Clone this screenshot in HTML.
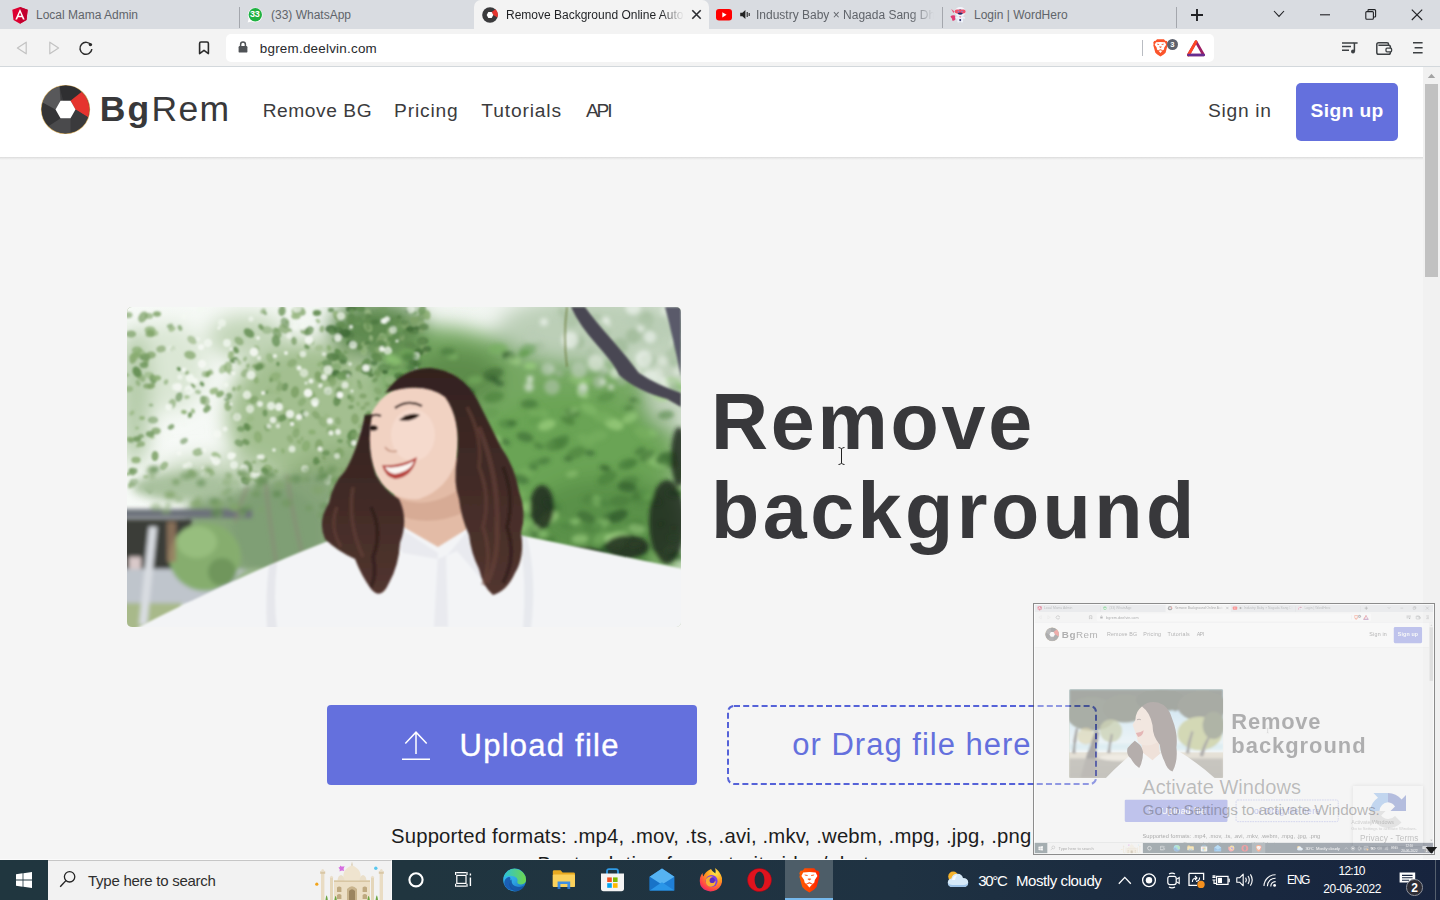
<!DOCTYPE html>
<html lang="en">
<head>
<meta charset="utf-8">
<title>Remove Background Online</title>
<style>
*{box-sizing:border-box;margin:0;padding:0}
html,body{width:1440px;height:900px;overflow:hidden;background:#f5f5f5;font-family:"Liberation Sans",sans-serif;}
.abs{position:absolute}
.t{position:absolute;white-space:nowrap;line-height:1}
svg{position:absolute;overflow:visible}
#root,.root{position:relative;width:1440px;height:900px;overflow:hidden;background:#f5f5f5}
/* ---------- browser chrome ---------- */
.tabbar{left:0;top:0;width:1440px;height:29px;background:#d9dce1}
.toolbar{left:0;top:29px;width:1440px;height:37px;background:#f3f3f3}
.toolline{left:0;top:66px;width:1440px;height:1px;background:#d3d8dc}
.tab{font-size:12px;color:#60646a;top:6.8px;overflow:hidden;height:16px;line-height:16px}
.tab-active{left:474px;top:0;width:235px;height:30px;background:#f3f3f3;border-radius:7px 7px 0 0}
.tsep{top:7px;width:1px;height:21px;background:#a4a7ad}
.urlbar{left:226px;top:34px;width:988px;height:28px;background:#fff;border-radius:5px}
.url{left:259.8px;top:41.6px;font-size:13.4px;color:#27292c;letter-spacing:.24px}
/* ---------- page ---------- */
.header{left:0;top:67px;width:1423px;height:90px;background:#fff}
.hshadow{left:0;top:157px;width:1423px;height:3px;background:linear-gradient(#dadada,#e9e9e9 45%,#f5f5f5)}
.nav{top:101.1px;font-size:19.2px;color:#3b3b3d}
.signup{left:1296px;top:83px;width:102px;height:58px;background:#6470dd;border-radius:5px}
.scroll{left:1423px;top:67px;width:17px;height:793px;background:#f1f1f1}
.sthumb{left:1425px;top:84px;width:13px;height:193px;background:#c1c1c1}
.hero{left:127px;top:307px;width:554px;height:320px;border-radius:5px;overflow:hidden;background:#8aa070}
.h1{left:711px;font-size:79px;font-weight:bold;color:#38383b}
.upload{left:327px;top:705px;width:370px;height:80px;background:#6470dd;border-radius:4px}
.big{font-size:31px;top:729px}
.fmt{font-size:20.3px;color:#1c1c1c}
/* ---------- taskbar ---------- */
.taskbar{left:0;top:859px;width:1440px;height:41px;background:linear-gradient(90deg,#20363f 0%,#20353f 28%,#1f3242 62%,#1b2c40 76%,#17243e 100%);border-top:1px solid #fbfbfb}
.search{left:48px;top:860px;width:344px;height:40px;background:#f2f2f2;border-top:1px solid #c6c6c6;border-right:1px solid #fafafa}
.tb{color:#fff;font-size:15px}
.tbs{color:#fff;font-size:12px}
</style>
</head>
<body>
<div id="root">
<!-- PAGE -->
<div class="abs header"></div>
<div class="abs hshadow"></div>
<!-- logo -->
<svg style="left:40px;top:84px" width="51" height="51" viewBox="-25.5 -25.5 51 51">
<circle r="24.6" fill="#c9a25a"/>
<circle r="23.8" fill="#3c3c3e"/>
<g>
<path d="M0 0 L-6 -23 A23.8 23.8 0 0 1 16 -17.6 L5 -8.7Z" fill="#2f2f31"/>
<path d="M5 -8.7 L16 -17.6 A23.8 23.8 0 0 1 22.5 7.8 L10 0Z" fill="#e5342e"/>
<path d="M10 0 L22.5 7.8 A23.8 23.8 0 0 1 5 23.3 L5 8.7Z" fill="#3a3a3c"/>
<path d="M5 8.7 L5 23.3 A23.8 23.8 0 0 1 -17 16.6 L-5 8.7Z" fill="#4a4a4c"/>
<path d="M-5 8.7 L-17 16.6 A23.8 23.8 0 0 1 -22.8 -7 L-10 0Z" fill="#343436"/>
<path d="M-10 0 L-22.8 -7 A23.8 23.8 0 0 1 -6 -23 L-5 -8.7Z" fill="#58585a"/>
</g>
<path d="M-5 -8.7 L5 -8.7 L10 0 L5 8.7 L-5 8.7 L-10 0Z" fill="#fff"/>
</svg>
<div class="t" style="left:99.8px;top:92.4px;font-size:35.5px;font-weight:bold;color:#38383a;letter-spacing:2.1px">Bg</div>
<div class="t" style="left:151.5px;top:92.4px;font-size:35.5px;color:#38383a;letter-spacing:1.3px">Rem</div>
<div class="t nav" style="left:262.7px;letter-spacing:.55px">Remove BG</div>
<div class="t nav" style="left:394px;letter-spacing:.85px">Pricing</div>
<div class="t nav" style="left:481.3px;letter-spacing:.86px">Tutorials</div>
<div class="t nav" style="left:586px;letter-spacing:-2.2px">API</div>
<div class="t nav" style="left:1208px;letter-spacing:.72px">Sign in</div>
<div class="abs signup"></div>
<div class="t nav" style="left:1310.6px;letter-spacing:.4px;font-weight:bold;color:#fff">Sign up</div>

<div class="abs hero"><svg width="554" height="320" viewBox="0 0 554 320" style="display:block">
<defs>
<filter id="b1" x="-10%" y="-10%" width="120%" height="120%"><feGaussianBlur stdDeviation="1.1"/></filter>
<filter id="b2" x="-10%" y="-10%" width="120%" height="120%"><feGaussianBlur stdDeviation="2.2"/></filter>
<filter id="b4" x="-20%" y="-20%" width="140%" height="140%"><feGaussianBlur stdDeviation="5"/></filter>
<filter id="b8" x="-20%" y="-20%" width="140%" height="140%"><feGaussianBlur stdDeviation="10"/></filter>
<linearGradient id="sky" x1="0" y1="0" x2="1" y2="0"><stop offset="0" stop-color="#f7faf7"/><stop offset="1" stop-color="#eef3ee"/></linearGradient>
<linearGradient id="hairg" x1="0" y1="0" x2="0" y2="1"><stop offset="0" stop-color="#33221f"/><stop offset="1" stop-color="#52352f"/></linearGradient>
</defs>
<rect width="554" height="320" fill="url(#sky)"/>
<g filter="url(#b8)">
<path d="M250 32 Q300 8 360 28 Q420 24 470 48 Q520 64 554 92 L554 270 L380 270 L300 200 L240 120Z" fill="#76a862"/>
<ellipse cx="440" cy="150" rx="95" ry="65" fill="#6aa455"/>
<ellipse cx="480" cy="215" rx="80" ry="45" fill="#5a9148"/>
<ellipse cx="330" cy="70" rx="45" ry="28" fill="#5d8c4c"/>
<ellipse cx="470" cy="22" rx="100" ry="34" fill="#bccfb7"/>
<ellipse cx="545" cy="80" rx="26" ry="40" fill="#c3d3be"/>
<ellipse cx="180" cy="110" rx="80" ry="75" fill="#a3bf90"/>
<ellipse cx="215" cy="190" rx="60" ry="50" fill="#8fae7c"/>
<ellipse cx="90" cy="170" rx="60" ry="20" fill="#c5d6bb"/>
<ellipse cx="40" cy="60" rx="40" ry="45" fill="#dbe7d5"/>
<ellipse cx="250" cy="22" rx="48" ry="30" fill="#5f8a50"/>
<ellipse cx="8" cy="90" rx="16" ry="70" fill="#b4cba8"/>
<ellipse cx="120" cy="30" rx="40" ry="22" fill="#c2d5b8"/>
</g>
<g filter="url(#b1)">
<ellipse cx="160" cy="15" rx="2.5" ry="1.8" transform="rotate(144 160 15)" fill="#9ab884" opacity="0.57"/>
<ellipse cx="63" cy="48" rx="5.8" ry="4.1" transform="rotate(12 63 48)" fill="#86a870" opacity="0.78"/>
<ellipse cx="295" cy="10" rx="5.5" ry="3.8" transform="rotate(138 295 10)" fill="#6f965c" opacity="0.72"/>
<ellipse cx="60" cy="66" rx="2.9" ry="2.0" transform="rotate(48 60 66)" fill="#86a870" opacity="0.78"/>
<ellipse cx="143" cy="118" rx="2.4" ry="1.7" transform="rotate(127 143 118)" fill="#7fa268" opacity="0.80"/>
<ellipse cx="225" cy="92" rx="3.4" ry="2.4" transform="rotate(92 225 92)" fill="#86a870" opacity="0.92"/>
<ellipse cx="122" cy="171" rx="4.9" ry="3.4" transform="rotate(76 122 171)" fill="#8aad72" opacity="0.58"/>
<ellipse cx="185" cy="188" rx="5.0" ry="3.5" transform="rotate(18 185 188)" fill="#6f965c" opacity="0.79"/>
<ellipse cx="60" cy="90" rx="2.8" ry="1.9" transform="rotate(171 60 90)" fill="#9ab884" opacity="0.72"/>
<ellipse cx="44" cy="120" rx="3.5" ry="2.4" transform="rotate(148 44 120)" fill="#6f965c" opacity="0.79"/>
<ellipse cx="253" cy="15" rx="2.6" ry="1.8" transform="rotate(170 253 15)" fill="#6f965c" opacity="0.74"/>
<ellipse cx="199" cy="146" rx="3.9" ry="2.7" transform="rotate(171 199 146)" fill="#5f8a4e" opacity="0.70"/>
<ellipse cx="136" cy="202" rx="3.6" ry="2.5" transform="rotate(15 136 202)" fill="#86a870" opacity="0.60"/>
<ellipse cx="96" cy="62" rx="5.0" ry="3.5" transform="rotate(127 96 62)" fill="#9ab884" opacity="0.71"/>
<ellipse cx="45" cy="97" rx="5.3" ry="3.7" transform="rotate(106 45 97)" fill="#86a870" opacity="0.66"/>
<ellipse cx="297" cy="147" rx="3.6" ry="2.6" transform="rotate(45 297 147)" fill="#8aad72" opacity="0.61"/>
<ellipse cx="261" cy="39" rx="3.3" ry="2.3" transform="rotate(94 261 39)" fill="#8aad72" opacity="0.72"/>
<ellipse cx="207" cy="69" rx="2.7" ry="1.9" transform="rotate(167 207 69)" fill="#86a870" opacity="0.93"/>
<ellipse cx="224" cy="12" rx="5.6" ry="3.9" transform="rotate(100 224 12)" fill="#5f8a4e" opacity="0.87"/>
<ellipse cx="150" cy="85" rx="4.0" ry="2.8" transform="rotate(17 150 85)" fill="#9ab884" opacity="0.57"/>
<ellipse cx="297" cy="95" rx="2.6" ry="1.8" transform="rotate(0 297 95)" fill="#86a870" opacity="0.57"/>
<ellipse cx="196" cy="115" rx="5.8" ry="4.1" transform="rotate(53 196 115)" fill="#86a870" opacity="0.56"/>
<ellipse cx="208" cy="32" rx="3.2" ry="2.2" transform="rotate(121 208 32)" fill="#6f965c" opacity="0.79"/>
<ellipse cx="62" cy="183" rx="4.0" ry="2.8" transform="rotate(36 62 183)" fill="#9ab884" opacity="0.67"/>
<ellipse cx="261" cy="35" rx="2.3" ry="1.6" transform="rotate(176 261 35)" fill="#86a870" opacity="0.69"/>
<ellipse cx="190" cy="6" rx="4.2" ry="2.9" transform="rotate(178 190 6)" fill="#5f8a4e" opacity="0.90"/>
<ellipse cx="265" cy="111" rx="5.7" ry="4.0" transform="rotate(136 265 111)" fill="#6f965c" opacity="0.86"/>
<ellipse cx="189" cy="108" rx="4.6" ry="3.2" transform="rotate(49 189 108)" fill="#86a870" opacity="0.87"/>
<ellipse cx="255" cy="176" rx="5.0" ry="3.5" transform="rotate(126 255 176)" fill="#8aad72" opacity="0.63"/>
<ellipse cx="138" cy="6" rx="2.3" ry="1.6" transform="rotate(49 138 6)" fill="#6f965c" opacity="0.74"/>
<ellipse cx="228" cy="206" rx="3.9" ry="2.7" transform="rotate(93 228 206)" fill="#5f8a4e" opacity="0.95"/>
<ellipse cx="45" cy="22" rx="3.5" ry="2.4" transform="rotate(156 45 22)" fill="#9ab884" opacity="0.80"/>
<ellipse cx="263" cy="103" rx="4.7" ry="3.3" transform="rotate(169 263 103)" fill="#5f8a4e" opacity="0.58"/>
<ellipse cx="61" cy="84" rx="3.0" ry="2.1" transform="rotate(162 61 84)" fill="#8aad72" opacity="0.72"/>
<ellipse cx="131" cy="172" rx="5.9" ry="4.1" transform="rotate(21 131 172)" fill="#9ab884" opacity="0.74"/>
<ellipse cx="236" cy="37" rx="2.7" ry="1.9" transform="rotate(119 236 37)" fill="#8aad72" opacity="0.79"/>
<ellipse cx="255" cy="31" rx="5.3" ry="3.7" transform="rotate(89 255 31)" fill="#9ab884" opacity="0.81"/>
<ellipse cx="254" cy="156" rx="2.6" ry="1.8" transform="rotate(111 254 156)" fill="#5f8a4e" opacity="0.92"/>
<ellipse cx="297" cy="42" rx="5.5" ry="3.9" transform="rotate(74 297 42)" fill="#7fa268" opacity="0.65"/>
<ellipse cx="179" cy="164" rx="3.4" ry="2.4" transform="rotate(33 179 164)" fill="#86a870" opacity="0.72"/>
<ellipse cx="37" cy="159" rx="4.7" ry="3.3" transform="rotate(128 37 159)" fill="#86a870" opacity="0.72"/>
<ellipse cx="65" cy="33" rx="5.2" ry="3.6" transform="rotate(38 65 33)" fill="#86a870" opacity="0.55"/>
<ellipse cx="80" cy="102" rx="4.3" ry="3.0" transform="rotate(135 80 102)" fill="#6f965c" opacity="0.82"/>
<ellipse cx="193" cy="169" rx="2.6" ry="1.8" transform="rotate(48 193 169)" fill="#86a870" opacity="0.57"/>
<ellipse cx="115" cy="166" rx="4.1" ry="2.9" transform="rotate(16 115 166)" fill="#86a870" opacity="0.56"/>
<ellipse cx="163" cy="132" rx="4.1" ry="2.9" transform="rotate(70 163 132)" fill="#86a870" opacity="0.63"/>
<ellipse cx="165" cy="115" rx="4.0" ry="2.8" transform="rotate(66 165 115)" fill="#8aad72" opacity="0.83"/>
<ellipse cx="282" cy="192" rx="3.0" ry="2.1" transform="rotate(31 282 192)" fill="#9ab884" opacity="0.60"/>
<ellipse cx="149" cy="68" rx="4.8" ry="3.3" transform="rotate(171 149 68)" fill="#9ab884" opacity="0.58"/>
<ellipse cx="122" cy="26" rx="5.8" ry="4.0" transform="rotate(36 122 26)" fill="#5f8a4e" opacity="0.81"/>
<ellipse cx="241" cy="20" rx="5.6" ry="3.9" transform="rotate(57 241 20)" fill="#8aad72" opacity="0.95"/>
<ellipse cx="76" cy="93" rx="4.2" ry="2.9" transform="rotate(91 76 93)" fill="#6f965c" opacity="0.72"/>
<ellipse cx="127" cy="155" rx="2.3" ry="1.6" transform="rotate(180 127 155)" fill="#86a870" opacity="0.73"/>
<ellipse cx="15" cy="71" rx="4.1" ry="2.9" transform="rotate(58 15 71)" fill="#7fa268" opacity="0.60"/>
<ellipse cx="294" cy="23" rx="3.2" ry="2.2" transform="rotate(46 294 23)" fill="#7fa268" opacity="0.91"/>
<ellipse cx="280" cy="176" rx="3.2" ry="2.2" transform="rotate(131 280 176)" fill="#8aad72" opacity="0.76"/>
<ellipse cx="197" cy="151" rx="2.5" ry="1.8" transform="rotate(46 197 151)" fill="#7fa268" opacity="0.87"/>
<ellipse cx="158" cy="16" rx="5.8" ry="4.0" transform="rotate(66 158 16)" fill="#5f8a4e" opacity="0.59"/>
<ellipse cx="269" cy="98" rx="3.5" ry="2.4" transform="rotate(68 269 98)" fill="#86a870" opacity="0.72"/>
<ellipse cx="210" cy="9" rx="4.9" ry="3.4" transform="rotate(67 210 9)" fill="#7fa268" opacity="0.94"/>
<ellipse cx="123" cy="163" rx="3.3" ry="2.3" transform="rotate(69 123 163)" fill="#86a870" opacity="0.82"/>
<ellipse cx="136" cy="4" rx="3.2" ry="2.2" transform="rotate(129 136 4)" fill="#7fa268" opacity="0.56"/>
<ellipse cx="192" cy="41" rx="4.0" ry="2.8" transform="rotate(166 192 41)" fill="#9ab884" opacity="0.59"/>
<ellipse cx="160" cy="106" rx="5.4" ry="3.8" transform="rotate(78 160 106)" fill="#9ab884" opacity="0.94"/>
<ellipse cx="227" cy="211" rx="3.5" ry="2.5" transform="rotate(35 227 211)" fill="#5f8a4e" opacity="0.84"/>
<ellipse cx="152" cy="75" rx="2.4" ry="1.7" transform="rotate(160 152 75)" fill="#8aad72" opacity="0.56"/>
<ellipse cx="240" cy="55" rx="2.8" ry="2.0" transform="rotate(97 240 55)" fill="#7fa268" opacity="0.82"/>
<ellipse cx="270" cy="144" rx="3.3" ry="2.3" transform="rotate(11 270 144)" fill="#8aad72" opacity="0.83"/>
<ellipse cx="167" cy="34" rx="3.9" ry="2.7" transform="rotate(84 167 34)" fill="#6f965c" opacity="0.70"/>
<ellipse cx="294" cy="118" rx="3.1" ry="2.2" transform="rotate(46 294 118)" fill="#6f965c" opacity="0.64"/>
<ellipse cx="2" cy="82" rx="4.1" ry="2.9" transform="rotate(1 2 82)" fill="#8aad72" opacity="0.65"/>
<ellipse cx="201" cy="85" rx="3.3" ry="2.3" transform="rotate(149 201 85)" fill="#5f8a4e" opacity="0.64"/>
<ellipse cx="290" cy="183" rx="2.8" ry="2.0" transform="rotate(152 290 183)" fill="#5f8a4e" opacity="0.86"/>
<ellipse cx="148" cy="70" rx="5.9" ry="4.2" transform="rotate(158 148 70)" fill="#8aad72" opacity="0.66"/>
<ellipse cx="215" cy="9" rx="5.4" ry="3.8" transform="rotate(179 215 9)" fill="#86a870" opacity="0.80"/>
<ellipse cx="257" cy="30" rx="4.2" ry="2.9" transform="rotate(4 257 30)" fill="#86a870" opacity="0.78"/>
<ellipse cx="260" cy="126" rx="5.6" ry="3.9" transform="rotate(164 260 126)" fill="#5f8a4e" opacity="0.93"/>
<ellipse cx="140" cy="23" rx="5.4" ry="3.8" transform="rotate(4 140 23)" fill="#86a870" opacity="0.57"/>
<ellipse cx="211" cy="146" rx="4.1" ry="2.8" transform="rotate(17 211 146)" fill="#7fa268" opacity="0.73"/>
<ellipse cx="241" cy="108" rx="4.2" ry="3.0" transform="rotate(121 241 108)" fill="#5f8a4e" opacity="0.76"/>
<ellipse cx="237" cy="44" rx="5.0" ry="3.5" transform="rotate(97 237 44)" fill="#9ab884" opacity="0.75"/>
<ellipse cx="204" cy="71" rx="4.7" ry="3.3" transform="rotate(145 204 71)" fill="#5f8a4e" opacity="0.67"/>
<ellipse cx="66" cy="104" rx="2.6" ry="1.8" transform="rotate(74 66 104)" fill="#8aad72" opacity="0.82"/>
<ellipse cx="232" cy="61" rx="4.0" ry="2.8" transform="rotate(140 232 61)" fill="#7fa268" opacity="0.95"/>
<ellipse cx="89" cy="210" rx="5.8" ry="4.0" transform="rotate(19 89 210)" fill="#7fa268" opacity="0.67"/>
<ellipse cx="258" cy="208" rx="3.9" ry="2.7" transform="rotate(53 258 208)" fill="#6f965c" opacity="0.70"/>
<ellipse cx="43" cy="19" rx="3.2" ry="2.2" transform="rotate(161 43 19)" fill="#6f965c" opacity="0.60"/>
<ellipse cx="181" cy="191" rx="4.9" ry="3.4" transform="rotate(124 181 191)" fill="#8aad72" opacity="0.75"/>
<ellipse cx="149" cy="34" rx="5.8" ry="4.1" transform="rotate(77 149 34)" fill="#5f8a4e" opacity="0.73"/>
<ellipse cx="236" cy="89" rx="3.6" ry="2.5" transform="rotate(0 236 89)" fill="#7fa268" opacity="0.89"/>
<ellipse cx="129" cy="73" rx="3.7" ry="2.6" transform="rotate(74 129 73)" fill="#8aad72" opacity="0.84"/>
<ellipse cx="270" cy="16" rx="5.7" ry="4.0" transform="rotate(71 270 16)" fill="#6f965c" opacity="0.89"/>
<ellipse cx="285" cy="54" rx="3.2" ry="2.2" transform="rotate(95 285 54)" fill="#86a870" opacity="0.68"/>
<ellipse cx="250" cy="92" rx="2.3" ry="1.6" transform="rotate(141 250 92)" fill="#5f8a4e" opacity="0.71"/>
<ellipse cx="191" cy="155" rx="2.4" ry="1.7" transform="rotate(157 191 155)" fill="#5f8a4e" opacity="0.71"/>
<ellipse cx="242" cy="139" rx="3.3" ry="2.3" transform="rotate(140 242 139)" fill="#7fa268" opacity="0.91"/>
<ellipse cx="121" cy="159" rx="5.9" ry="4.1" transform="rotate(61 121 159)" fill="#6f965c" opacity="0.71"/>
<ellipse cx="122" cy="120" rx="3.7" ry="2.6" transform="rotate(19 122 120)" fill="#8aad72" opacity="0.81"/>
<ellipse cx="92" cy="195" rx="4.1" ry="2.9" transform="rotate(85 92 195)" fill="#8aad72" opacity="0.73"/>
<ellipse cx="299" cy="97" rx="2.7" ry="1.9" transform="rotate(44 299 97)" fill="#8aad72" opacity="0.65"/>
<ellipse cx="134" cy="20" rx="3.1" ry="2.2" transform="rotate(51 134 20)" fill="#6f965c" opacity="0.87"/>
<ellipse cx="274" cy="161" rx="3.8" ry="2.6" transform="rotate(53 274 161)" fill="#9ab884" opacity="0.85"/>
<ellipse cx="144" cy="73" rx="2.4" ry="1.7" transform="rotate(92 144 73)" fill="#6f965c" opacity="0.78"/>
<ellipse cx="63" cy="108" rx="3.0" ry="2.1" transform="rotate(98 63 108)" fill="#6f965c" opacity="0.91"/>
<ellipse cx="151" cy="96" rx="5.8" ry="4.1" transform="rotate(108 151 96)" fill="#7fa268" opacity="0.60"/>
<ellipse cx="232" cy="193" rx="4.0" ry="2.8" transform="rotate(18 232 193)" fill="#86a870" opacity="0.75"/>
<ellipse cx="148" cy="199" rx="5.3" ry="3.7" transform="rotate(63 148 199)" fill="#9ab884" opacity="0.94"/>
<ellipse cx="250" cy="48" rx="2.8" ry="1.9" transform="rotate(179 250 48)" fill="#5f8a4e" opacity="0.59"/>
<ellipse cx="217" cy="164" rx="3.9" ry="2.8" transform="rotate(0 217 164)" fill="#86a870" opacity="0.86"/>
<ellipse cx="250" cy="50" rx="5.7" ry="4.0" transform="rotate(32 250 50)" fill="#5f8a4e" opacity="0.84"/>
<ellipse cx="211" cy="114" rx="3.9" ry="2.7" transform="rotate(76 211 114)" fill="#7fa268" opacity="0.59"/>
<ellipse cx="185" cy="125" rx="3.7" ry="2.6" transform="rotate(0 185 125)" fill="#8aad72" opacity="0.87"/>
<ellipse cx="10" cy="65" rx="5.8" ry="4.1" transform="rotate(62 10 65)" fill="#5f8a4e" opacity="0.89"/>
<ellipse cx="172" cy="50" rx="3.1" ry="2.2" transform="rotate(78 172 50)" fill="#9ab884" opacity="0.83"/>
<ellipse cx="34" cy="42" rx="4.7" ry="3.3" transform="rotate(170 34 42)" fill="#7fa268" opacity="0.65"/>
<ellipse cx="158" cy="80" rx="4.1" ry="2.9" transform="rotate(107 158 80)" fill="#5f8a4e" opacity="0.69"/>
<ellipse cx="140" cy="85" rx="2.2" ry="1.6" transform="rotate(129 140 85)" fill="#6f965c" opacity="0.85"/>
<ellipse cx="246" cy="42" rx="4.0" ry="2.8" transform="rotate(75 246 42)" fill="#6f965c" opacity="0.85"/>
<ellipse cx="57" cy="134" rx="4.0" ry="2.8" transform="rotate(152 57 134)" fill="#5f8a4e" opacity="0.57"/>
<ellipse cx="71" cy="85" rx="3.0" ry="2.1" transform="rotate(13 71 85)" fill="#86a870" opacity="0.61"/>
<ellipse cx="232" cy="40" rx="3.9" ry="2.7" transform="rotate(28 232 40)" fill="#5f8a4e" opacity="0.90"/>
<ellipse cx="299" cy="200" rx="3.5" ry="2.4" transform="rotate(134 299 200)" fill="#8aad72" opacity="0.81"/>
<ellipse cx="241" cy="7" rx="4.7" ry="3.3" transform="rotate(84 241 7)" fill="#9ab884" opacity="0.89"/>
<ellipse cx="163" cy="23" rx="2.5" ry="1.7" transform="rotate(31 163 23)" fill="#7fa268" opacity="0.69"/>
<ellipse cx="194" cy="163" rx="3.6" ry="2.6" transform="rotate(110 194 163)" fill="#6f965c" opacity="0.88"/>
<ellipse cx="189" cy="96" rx="3.4" ry="2.4" transform="rotate(7 189 96)" fill="#5f8a4e" opacity="0.91"/>
<ellipse cx="213" cy="53" rx="4.6" ry="3.2" transform="rotate(8 213 53)" fill="#9ab884" opacity="0.57"/>
<ellipse cx="169" cy="173" rx="2.4" ry="1.7" transform="rotate(155 169 173)" fill="#8aad72" opacity="0.85"/>
<ellipse cx="133" cy="59" rx="5.8" ry="4.1" transform="rotate(176 133 59)" fill="#86a870" opacity="0.57"/>
<ellipse cx="127" cy="59" rx="2.2" ry="1.6" transform="rotate(162 127 59)" fill="#86a870" opacity="0.92"/>
<ellipse cx="288" cy="14" rx="5.3" ry="3.7" transform="rotate(119 288 14)" fill="#7fa268" opacity="0.74"/>
<ellipse cx="290" cy="83" rx="3.2" ry="2.2" transform="rotate(33 290 83)" fill="#9ab884" opacity="0.88"/>
<ellipse cx="284" cy="39" rx="5.2" ry="3.7" transform="rotate(177 284 39)" fill="#5f8a4e" opacity="0.67"/>
<ellipse cx="247" cy="131" rx="3.4" ry="2.4" transform="rotate(152 247 131)" fill="#6f965c" opacity="0.73"/>
<ellipse cx="45" cy="42" rx="3.1" ry="2.2" transform="rotate(123 45 42)" fill="#7fa268" opacity="0.81"/>
<ellipse cx="192" cy="70" rx="5.9" ry="4.1" transform="rotate(67 192 70)" fill="#7fa268" opacity="0.95"/>
<ellipse cx="211" cy="45" rx="3.8" ry="2.7" transform="rotate(44 211 45)" fill="#5f8a4e" opacity="0.94"/>
<ellipse cx="101" cy="90" rx="4.6" ry="3.2" transform="rotate(137 101 90)" fill="#5f8a4e" opacity="0.64"/>
<ellipse cx="265" cy="143" rx="2.7" ry="1.9" transform="rotate(145 265 143)" fill="#6f965c" opacity="0.67"/>
<ellipse cx="112" cy="55" rx="3.2" ry="2.2" transform="rotate(62 112 55)" fill="#9ab884" opacity="0.65"/>
<ellipse cx="101" cy="60" rx="5.6" ry="4.0" transform="rotate(101 101 60)" fill="#8aad72" opacity="0.68"/>
<ellipse cx="107" cy="53" rx="4.2" ry="2.9" transform="rotate(167 107 53)" fill="#5f8a4e" opacity="0.87"/>
<ellipse cx="169" cy="8" rx="2.2" ry="1.6" transform="rotate(95 169 8)" fill="#8aad72" opacity="0.89"/>
<ellipse cx="86" cy="209" rx="4.4" ry="3.1" transform="rotate(45 86 209)" fill="#7fa268" opacity="0.70"/>
<ellipse cx="165" cy="56" rx="5.2" ry="3.6" transform="rotate(152 165 56)" fill="#7fa268" opacity="0.59"/>
<ellipse cx="232" cy="75" rx="2.3" ry="1.6" transform="rotate(52 232 75)" fill="#6f965c" opacity="0.61"/>
<ellipse cx="300" cy="8" rx="5.0" ry="3.5" transform="rotate(83 300 8)" fill="#8aad72" opacity="0.88"/>
<ellipse cx="153" cy="80" rx="4.6" ry="3.2" transform="rotate(126 153 80)" fill="#7fa268" opacity="0.63"/>
<ellipse cx="191" cy="14" rx="2.6" ry="1.8" transform="rotate(39 191 14)" fill="#9ab884" opacity="0.82"/>
<ellipse cx="214" cy="20" rx="2.8" ry="2.0" transform="rotate(72 214 20)" fill="#5f8a4e" opacity="0.66"/>
<ellipse cx="222" cy="90" rx="2.4" ry="1.7" transform="rotate(91 222 90)" fill="#5f8a4e" opacity="0.78"/>
<ellipse cx="155" cy="4" rx="5.1" ry="3.6" transform="rotate(100 155 4)" fill="#6f965c" opacity="0.81"/>
<ellipse cx="236" cy="44" rx="2.2" ry="1.6" transform="rotate(23 236 44)" fill="#8aad72" opacity="0.72"/>
<ellipse cx="153" cy="190" rx="4.0" ry="2.8" transform="rotate(13 153 190)" fill="#8aad72" opacity="0.60"/>
<ellipse cx="192" cy="138" rx="5.7" ry="4.0" transform="rotate(94 192 138)" fill="#7fa268" opacity="0.78"/>
<ellipse cx="239" cy="37" rx="3.5" ry="2.5" transform="rotate(17 239 37)" fill="#8aad72" opacity="0.76"/>
<ellipse cx="57" cy="105" rx="2.9" ry="2.1" transform="rotate(11 57 105)" fill="#8aad72" opacity="0.88"/>
<ellipse cx="294" cy="104" rx="2.4" ry="1.7" transform="rotate(158 294 104)" fill="#5f8a4e" opacity="0.71"/>
<ellipse cx="227" cy="192" rx="4.6" ry="3.2" transform="rotate(157 227 192)" fill="#8aad72" opacity="0.80"/>
<ellipse cx="265" cy="178" rx="2.9" ry="2.0" transform="rotate(132 265 178)" fill="#8aad72" opacity="0.57"/>
<ellipse cx="75" cy="77" rx="2.8" ry="1.9" transform="rotate(49 75 77)" fill="#5f8a4e" opacity="0.88"/>
<ellipse cx="263" cy="25" rx="4.5" ry="3.1" transform="rotate(78 263 25)" fill="#86a870" opacity="0.89"/>
<ellipse cx="217" cy="66" rx="3.1" ry="2.2" transform="rotate(114 217 66)" fill="#9ab884" opacity="0.81"/>
<ellipse cx="179" cy="38" rx="2.2" ry="1.5" transform="rotate(114 179 38)" fill="#9ab884" opacity="0.74"/>
<ellipse cx="245" cy="168" rx="3.9" ry="2.8" transform="rotate(102 245 168)" fill="#8aad72" opacity="0.87"/>
<ellipse cx="214" cy="18" rx="5.0" ry="3.5" transform="rotate(13 214 18)" fill="#5f8a4e" opacity="0.75"/>
<ellipse cx="242" cy="192" rx="4.7" ry="3.3" transform="rotate(16 242 192)" fill="#8aad72" opacity="0.56"/>
<ellipse cx="299" cy="157" rx="5.3" ry="3.7" transform="rotate(125 299 157)" fill="#8aad72" opacity="0.60"/>
<ellipse cx="118" cy="174" rx="5.2" ry="3.7" transform="rotate(56 118 174)" fill="#5f8a4e" opacity="0.87"/>
<ellipse cx="39" cy="75" rx="2.8" ry="2.0" transform="rotate(116 39 75)" fill="#86a870" opacity="0.66"/>
<ellipse cx="110" cy="109" rx="3.4" ry="2.4" transform="rotate(103 110 109)" fill="#7fa268" opacity="0.63"/>
<ellipse cx="76" cy="201" rx="4.8" ry="3.3" transform="rotate(67 76 201)" fill="#9ab884" opacity="0.62"/>
<ellipse cx="271" cy="119" rx="4.4" ry="3.1" transform="rotate(137 271 119)" fill="#7fa268" opacity="0.65"/>
<ellipse cx="212" cy="85" rx="5.2" ry="3.7" transform="rotate(94 212 85)" fill="#6f965c" opacity="0.70"/>
<ellipse cx="199" cy="77" rx="5.1" ry="3.6" transform="rotate(157 199 77)" fill="#9ab884" opacity="0.64"/>
<ellipse cx="240" cy="10" rx="5.3" ry="3.7" transform="rotate(149 240 10)" fill="#6f965c" opacity="0.67"/>
<ellipse cx="284" cy="193" rx="5.0" ry="3.5" transform="rotate(38 284 193)" fill="#5f8a4e" opacity="0.56"/>
<ellipse cx="119" cy="135" rx="3.8" ry="2.7" transform="rotate(33 119 135)" fill="#6f965c" opacity="0.91"/>
<ellipse cx="175" cy="132" rx="2.4" ry="1.7" transform="rotate(90 175 132)" fill="#7fa268" opacity="0.55"/>
<ellipse cx="123" cy="112" rx="4.2" ry="3.0" transform="rotate(150 123 112)" fill="#9ab884" opacity="0.78"/>
<ellipse cx="66" cy="79" rx="2.8" ry="2.0" transform="rotate(62 66 79)" fill="#7fa268" opacity="0.92"/>
<ellipse cx="231" cy="97" rx="2.4" ry="1.7" transform="rotate(69 231 97)" fill="#8aad72" opacity="0.90"/>
<ellipse cx="151" cy="57" rx="2.2" ry="1.6" transform="rotate(89 151 57)" fill="#5f8a4e" opacity="0.88"/>
<ellipse cx="203" cy="124" rx="4.5" ry="3.1" transform="rotate(63 203 124)" fill="#86a870" opacity="0.84"/>
<ellipse cx="280" cy="23" rx="4.5" ry="3.2" transform="rotate(36 280 23)" fill="#5f8a4e" opacity="0.93"/>
<ellipse cx="155" cy="111" rx="4.6" ry="3.2" transform="rotate(156 155 111)" fill="#5f8a4e" opacity="0.81"/>
<ellipse cx="81" cy="67" rx="3.3" ry="2.3" transform="rotate(122 81 67)" fill="#7fa268" opacity="0.95"/>
<ellipse cx="233" cy="1" rx="5.4" ry="3.8" transform="rotate(20 233 1)" fill="#5f8a4e" opacity="0.91"/>
<ellipse cx="240" cy="97" rx="3.1" ry="2.1" transform="rotate(164 240 97)" fill="#7fa268" opacity="0.65"/>
<ellipse cx="26" cy="72" rx="4.8" ry="3.4" transform="rotate(68 26 72)" fill="#6f965c" opacity="0.83"/>
<ellipse cx="214" cy="146" rx="4.8" ry="3.4" transform="rotate(75 214 146)" fill="#86a870" opacity="0.94"/>
<ellipse cx="215" cy="208" rx="3.0" ry="2.1" transform="rotate(66 215 208)" fill="#86a870" opacity="0.56"/>
<ellipse cx="278" cy="181" rx="3.0" ry="2.1" transform="rotate(83 278 181)" fill="#8aad72" opacity="0.85"/>
<ellipse cx="87" cy="84" rx="4.5" ry="3.1" transform="rotate(161 87 84)" fill="#9ab884" opacity="0.91"/>
<ellipse cx="282" cy="211" rx="5.4" ry="3.8" transform="rotate(135 282 211)" fill="#86a870" opacity="0.74"/>
<ellipse cx="229" cy="184" rx="3.9" ry="2.7" transform="rotate(78 229 184)" fill="#5f8a4e" opacity="0.64"/>
<ellipse cx="251" cy="84" rx="4.4" ry="3.1" transform="rotate(37 251 84)" fill="#86a870" opacity="0.91"/>
<ellipse cx="23" cy="24" rx="2.8" ry="2.0" transform="rotate(7 23 24)" fill="#8aad72" opacity="0.83"/>
<ellipse cx="28" cy="149" rx="5.0" ry="3.5" transform="rotate(93 28 149)" fill="#7fa268" opacity="0.89"/>
<ellipse cx="89" cy="205" rx="4.2" ry="3.0" transform="rotate(98 89 205)" fill="#5f8a4e" opacity="0.58"/>
<ellipse cx="24" cy="182" rx="4.6" ry="3.2" transform="rotate(122 24 182)" fill="#5f8a4e" opacity="0.80"/>
<ellipse cx="53" cy="21" rx="3.0" ry="2.1" transform="rotate(66 53 21)" fill="#6f965c" opacity="0.68"/>
<ellipse cx="233" cy="79" rx="3.4" ry="2.4" transform="rotate(73 233 79)" fill="#86a870" opacity="0.75"/>
<ellipse cx="209" cy="7" rx="3.8" ry="2.6" transform="rotate(25 209 7)" fill="#9ab884" opacity="0.76"/>
<ellipse cx="136" cy="152" rx="4.2" ry="3.0" transform="rotate(23 136 152)" fill="#8aad72" opacity="0.84"/>
<ellipse cx="198" cy="62" rx="3.9" ry="2.7" transform="rotate(13 198 62)" fill="#86a870" opacity="0.63"/>
<ellipse cx="5" cy="106" rx="2.9" ry="2.0" transform="rotate(131 5 106)" fill="#9ab884" opacity="0.79"/>
<ellipse cx="109" cy="203" rx="3.3" ry="2.3" transform="rotate(59 109 203)" fill="#8aad72" opacity="0.93"/>
<ellipse cx="178" cy="24" rx="4.6" ry="3.2" transform="rotate(178 178 24)" fill="#7fa268" opacity="0.75"/>
<ellipse cx="195" cy="22" rx="3.4" ry="2.4" transform="rotate(101 195 22)" fill="#7fa268" opacity="0.71"/>
<ellipse cx="275" cy="160" rx="3.8" ry="2.7" transform="rotate(52 275 160)" fill="#5f8a4e" opacity="0.56"/>
<ellipse cx="123" cy="92" rx="4.3" ry="3.0" transform="rotate(161 123 92)" fill="#8aad72" opacity="0.70"/>
<ellipse cx="101" cy="99" rx="5.1" ry="3.5" transform="rotate(89 101 99)" fill="#86a870" opacity="0.81"/>
<ellipse cx="200" cy="112" rx="5.5" ry="3.8" transform="rotate(82 200 112)" fill="#9ab884" opacity="0.81"/>
<ellipse cx="79" cy="94" rx="5.1" ry="3.6" transform="rotate(85 79 94)" fill="#86a870" opacity="0.64"/>
<ellipse cx="168" cy="190" rx="3.1" ry="2.2" transform="rotate(180 168 190)" fill="#8aad72" opacity="0.66"/>
<ellipse cx="260" cy="133" rx="4.9" ry="3.5" transform="rotate(154 260 133)" fill="#8aad72" opacity="0.84"/>
<ellipse cx="184" cy="35" rx="3.4" ry="2.4" transform="rotate(26 184 35)" fill="#8aad72" opacity="0.65"/>
<ellipse cx="121" cy="59" rx="2.6" ry="1.8" transform="rotate(99 121 59)" fill="#7fa268" opacity="0.66"/>
<ellipse cx="169" cy="3" rx="5.4" ry="3.8" transform="rotate(128 169 3)" fill="#9ab884" opacity="0.83"/>
<ellipse cx="296" cy="64" rx="2.3" ry="1.6" transform="rotate(103 296 64)" fill="#6f965c" opacity="0.79"/>
<ellipse cx="6" cy="52" rx="4.9" ry="3.4" transform="rotate(107 6 52)" fill="#86a870" opacity="0.85"/>
<ellipse cx="265" cy="144" rx="4.7" ry="3.3" transform="rotate(58 265 144)" fill="#5f8a4e" opacity="0.83"/>
<ellipse cx="225" cy="138" rx="3.9" ry="2.7" transform="rotate(179 225 138)" fill="#6f965c" opacity="0.65"/>
<ellipse cx="52" cy="90" rx="4.9" ry="3.4" transform="rotate(108 52 90)" fill="#5f8a4e" opacity="0.61"/>
<ellipse cx="174" cy="4" rx="5.5" ry="3.8" transform="rotate(46 174 4)" fill="#86a870" opacity="0.82"/>
<ellipse cx="276" cy="71" rx="2.2" ry="1.6" transform="rotate(27 276 71)" fill="#9ab884" opacity="0.91"/>
<ellipse cx="249" cy="202" rx="4.2" ry="2.9" transform="rotate(116 249 202)" fill="#7fa268" opacity="0.89"/>
<ellipse cx="189" cy="154" rx="4.1" ry="2.9" transform="rotate(94 189 154)" fill="#5f8a4e" opacity="0.87"/>
<ellipse cx="184" cy="88" rx="5.8" ry="4.1" transform="rotate(47 184 88)" fill="#8aad72" opacity="0.95"/>
<ellipse cx="149" cy="164" rx="2.7" ry="1.9" transform="rotate(14 149 164)" fill="#86a870" opacity="0.69"/>
<ellipse cx="107" cy="82" rx="2.4" ry="1.7" transform="rotate(107 107 82)" fill="#7fa268" opacity="0.72"/>
<ellipse cx="212" cy="145" rx="4.4" ry="3.1" transform="rotate(102 212 145)" fill="#7fa268" opacity="0.64"/>
<ellipse cx="286" cy="113" rx="3.0" ry="2.1" transform="rotate(42 286 113)" fill="#9ab884" opacity="0.73"/>
<ellipse cx="65" cy="167" rx="4.6" ry="3.2" transform="rotate(57 65 167)" fill="#9ab884" opacity="0.81"/>
<ellipse cx="257" cy="31" rx="4.7" ry="3.3" transform="rotate(75 257 31)" fill="#9ab884" opacity="0.74"/>
<ellipse cx="244" cy="140" rx="5.2" ry="3.6" transform="rotate(58 244 140)" fill="#9ab884" opacity="0.69"/>
<ellipse cx="112" cy="81" rx="3.2" ry="2.2" transform="rotate(123 112 81)" fill="#9ab884" opacity="0.82"/>
<ellipse cx="104" cy="65" rx="4.0" ry="2.8" transform="rotate(21 104 65)" fill="#9ab884" opacity="0.80"/>
<ellipse cx="219" cy="78" rx="5.7" ry="4.0" transform="rotate(144 219 78)" fill="#9ab884" opacity="0.57"/>
<ellipse cx="279" cy="169" rx="2.7" ry="1.9" transform="rotate(3 279 169)" fill="#6f965c" opacity="0.80"/>
<ellipse cx="219" cy="45" rx="2.5" ry="1.7" transform="rotate(25 219 45)" fill="#6f965c" opacity="0.65"/>
<ellipse cx="199" cy="184" rx="2.9" ry="2.0" transform="rotate(39 199 184)" fill="#9ab884" opacity="0.69"/>
<ellipse cx="93" cy="87" rx="4.2" ry="3.0" transform="rotate(155 93 87)" fill="#86a870" opacity="0.91"/>
<ellipse cx="295" cy="19" rx="5.6" ry="3.9" transform="rotate(76 295 19)" fill="#86a870" opacity="0.87"/>
<ellipse cx="89" cy="149" rx="5.0" ry="3.5" transform="rotate(29 89 149)" fill="#9ab884" opacity="0.82"/>
<ellipse cx="193" cy="57" rx="3.1" ry="2.2" transform="rotate(142 193 57)" fill="#8aad72" opacity="0.74"/>
<ellipse cx="176" cy="107" rx="4.3" ry="3.0" transform="rotate(82 176 107)" fill="#5f8a4e" opacity="0.55"/>
<ellipse cx="170" cy="121" rx="4.7" ry="3.3" transform="rotate(107 170 121)" fill="#9ab884" opacity="0.70"/>
<ellipse cx="300" cy="145" rx="2.9" ry="2.0" transform="rotate(7 300 145)" fill="#6f965c" opacity="0.80"/>
<ellipse cx="16" cy="10" rx="6.0" ry="4.2" transform="rotate(124 16 10)" fill="#7fa268" opacity="0.75"/>
<ellipse cx="244" cy="31" rx="3.0" ry="2.1" transform="rotate(86 244 31)" fill="#9ab884" opacity="0.80"/>
<ellipse cx="249" cy="119" rx="5.7" ry="4.0" transform="rotate(108 249 119)" fill="#6f965c" opacity="0.72"/>
<ellipse cx="138" cy="106" rx="3.5" ry="2.4" transform="rotate(88 138 106)" fill="#6f965c" opacity="0.90"/>
<ellipse cx="294" cy="141" rx="5.2" ry="3.6" transform="rotate(76 294 141)" fill="#6f965c" opacity="0.63"/>
<ellipse cx="299" cy="86" rx="4.3" ry="3.0" transform="rotate(12 299 86)" fill="#9ab884" opacity="0.77"/>
<ellipse cx="150" cy="23" rx="2.4" ry="1.7" transform="rotate(168 150 23)" fill="#9ab884" opacity="0.79"/>
<ellipse cx="71" cy="145" rx="5.5" ry="3.9" transform="rotate(170 71 145)" fill="#7fa268" opacity="0.64"/>
<ellipse cx="213" cy="134" rx="2.9" ry="2.0" transform="rotate(9 213 134)" fill="#5f8a4e" opacity="0.62"/>
<ellipse cx="157" cy="22" rx="5.7" ry="4.0" transform="rotate(35 157 22)" fill="#7fa268" opacity="0.70"/>
<ellipse cx="251" cy="121" rx="3.2" ry="2.2" transform="rotate(8 251 121)" fill="#6f965c" opacity="0.62"/>
<ellipse cx="127" cy="93" rx="4.6" ry="3.2" transform="rotate(133 127 93)" fill="#7fa268" opacity="0.75"/>
<ellipse cx="27" cy="26" rx="4.4" ry="3.1" transform="rotate(3 27 26)" fill="#9ab884" opacity="0.73"/>
<ellipse cx="225" cy="128" rx="6.0" ry="4.2" transform="rotate(121 225 128)" fill="#5f8a4e" opacity="0.94"/>
<ellipse cx="247" cy="118" rx="2.5" ry="1.8" transform="rotate(38 247 118)" fill="#9ab884" opacity="0.63"/>
<ellipse cx="211" cy="92" rx="2.2" ry="1.6" transform="rotate(22 211 92)" fill="#5f8a4e" opacity="0.60"/>
<ellipse cx="114" cy="122" rx="3.9" ry="2.7" transform="rotate(12 114 122)" fill="#5f8a4e" opacity="0.62"/>
<ellipse cx="141" cy="161" rx="4.8" ry="3.4" transform="rotate(21 141 161)" fill="#8aad72" opacity="0.84"/>
<ellipse cx="120" cy="120" rx="4.1" ry="2.9" transform="rotate(65 120 120)" fill="#5f8a4e" opacity="0.92"/>
<ellipse cx="280" cy="11" rx="2.3" ry="1.6" transform="rotate(166 280 11)" fill="#7fa268" opacity="0.56"/>
<ellipse cx="226" cy="133" rx="3.7" ry="2.6" transform="rotate(42 226 133)" fill="#6f965c" opacity="0.84"/>
<ellipse cx="290" cy="180" rx="4.5" ry="3.2" transform="rotate(147 290 180)" fill="#6f965c" opacity="0.70"/>
<ellipse cx="236" cy="101" rx="2.8" ry="2.0" transform="rotate(165 236 101)" fill="#7fa268" opacity="0.70"/>
<ellipse cx="77" cy="172" rx="4.0" ry="2.8" transform="rotate(145 77 172)" fill="#9ab884" opacity="0.93"/>
<ellipse cx="132" cy="60" rx="4.6" ry="3.2" transform="rotate(153 132 60)" fill="#5f8a4e" opacity="0.83"/>
<ellipse cx="131" cy="130" rx="5.9" ry="4.1" transform="rotate(79 131 130)" fill="#8aad72" opacity="0.79"/>
<ellipse cx="201" cy="210" rx="3.1" ry="2.2" transform="rotate(154 201 210)" fill="#9ab884" opacity="0.82"/>
<ellipse cx="247" cy="50" rx="3.9" ry="2.7" transform="rotate(67 247 50)" fill="#5f8a4e" opacity="0.55"/>
<ellipse cx="112" cy="34" rx="5.1" ry="3.6" transform="rotate(36 112 34)" fill="#7fa268" opacity="0.67"/>
<ellipse cx="257" cy="186" rx="4.4" ry="3.1" transform="rotate(140 257 186)" fill="#6f965c" opacity="0.94"/>
<ellipse cx="226" cy="196" rx="3.5" ry="2.5" transform="rotate(124 226 196)" fill="#7fa268" opacity="0.77"/>
<ellipse cx="253" cy="43" rx="5.1" ry="3.5" transform="rotate(14 253 43)" fill="#8aad72" opacity="0.67"/>
<ellipse cx="224" cy="100" rx="3.0" ry="2.1" transform="rotate(2 224 100)" fill="#6f965c" opacity="0.78"/>
<ellipse cx="252" cy="99" rx="2.5" ry="1.8" transform="rotate(59 252 99)" fill="#6f965c" opacity="0.86"/>
<ellipse cx="150" cy="112" rx="3.2" ry="2.2" transform="rotate(129 150 112)" fill="#86a870" opacity="0.68"/>
<ellipse cx="202" cy="41" rx="2.9" ry="2.1" transform="rotate(74 202 41)" fill="#8aad72" opacity="0.87"/>
<ellipse cx="140" cy="121" rx="3.7" ry="2.6" transform="rotate(63 140 121)" fill="#86a870" opacity="0.89"/>
<ellipse cx="204" cy="74" rx="4.2" ry="2.9" transform="rotate(52 204 74)" fill="#7fa268" opacity="0.59"/>
<ellipse cx="298" cy="186" rx="4.0" ry="2.8" transform="rotate(71 298 186)" fill="#86a870" opacity="0.64"/>
<ellipse cx="158" cy="203" rx="5.1" ry="3.6" transform="rotate(65 158 203)" fill="#86a870" opacity="0.94"/>
<ellipse cx="264" cy="73" rx="6.0" ry="4.2" transform="rotate(13 264 73)" fill="#9ab884" opacity="0.58"/>
<ellipse cx="24" cy="79" rx="4.0" ry="2.8" transform="rotate(163 24 79)" fill="#7fa268" opacity="0.90"/>
<ellipse cx="150" cy="26" rx="5.8" ry="4.1" transform="rotate(59 150 26)" fill="#6f965c" opacity="0.68"/>
<ellipse cx="215" cy="206" rx="4.7" ry="3.3" transform="rotate(40 215 206)" fill="#9ab884" opacity="0.62"/>
<ellipse cx="143" cy="51" rx="4.9" ry="3.5" transform="rotate(65 143 51)" fill="#8aad72" opacity="0.57"/>
<ellipse cx="287" cy="13" rx="4.3" ry="3.0" transform="rotate(12 287 13)" fill="#7fa268" opacity="0.88"/>
<ellipse cx="109" cy="110" rx="5.1" ry="3.6" transform="rotate(37 109 110)" fill="#9ab884" opacity="0.57"/>
<ellipse cx="241" cy="127" rx="3.9" ry="2.7" transform="rotate(82 241 127)" fill="#5f8a4e" opacity="0.59"/>
<ellipse cx="143" cy="84" rx="3.6" ry="2.5" transform="rotate(61 143 84)" fill="#9ab884" opacity="0.62"/>
<ellipse cx="256" cy="197" rx="5.6" ry="3.9" transform="rotate(49 256 197)" fill="#9ab884" opacity="0.84"/>
<ellipse cx="253" cy="34" rx="5.4" ry="3.8" transform="rotate(95 253 34)" fill="#7fa268" opacity="0.92"/>
<ellipse cx="275" cy="30" rx="3.9" ry="2.7" transform="rotate(98 275 30)" fill="#7fa268" opacity="0.92"/>
<ellipse cx="264" cy="135" rx="3.9" ry="2.7" transform="rotate(59 264 135)" fill="#6f965c" opacity="0.68"/>
<ellipse cx="172" cy="135" rx="2.7" ry="1.9" transform="rotate(46 172 135)" fill="#8aad72" opacity="0.84"/>
<ellipse cx="233" cy="119" rx="2.7" ry="1.9" transform="rotate(105 233 119)" fill="#8aad72" opacity="0.66"/>
<ellipse cx="121" cy="173" rx="3.2" ry="2.2" transform="rotate(123 121 173)" fill="#7fa268" opacity="0.68"/>
<ellipse cx="276" cy="144" rx="3.0" ry="2.1" transform="rotate(30 276 144)" fill="#9ab884" opacity="0.88"/>
<ellipse cx="109" cy="43" rx="3.6" ry="2.5" transform="rotate(60 109 43)" fill="#6f965c" opacity="0.95"/>
<ellipse cx="52" cy="62" rx="2.4" ry="1.7" transform="rotate(36 52 62)" fill="#5f8a4e" opacity="0.94"/>
<ellipse cx="295" cy="3" rx="5.3" ry="3.7" transform="rotate(113 295 3)" fill="#6f965c" opacity="0.75"/>
<ellipse cx="3" cy="179" rx="2.9" ry="2.0" transform="rotate(104 3 179)" fill="#9ab884" opacity="0.57"/>
<ellipse cx="83" cy="166" rx="4.9" ry="3.4" transform="rotate(22 83 166)" fill="#8aad72" opacity="0.79"/>
<ellipse cx="275" cy="157" rx="5.1" ry="3.6" transform="rotate(156 275 157)" fill="#8aad72" opacity="0.63"/>
<ellipse cx="222" cy="135" rx="2.9" ry="2.1" transform="rotate(16 222 135)" fill="#6f965c" opacity="0.63"/>
<ellipse cx="228" cy="112" rx="5.4" ry="3.8" transform="rotate(88 228 112)" fill="#7fa268" opacity="0.76"/>
<ellipse cx="132" cy="181" rx="5.5" ry="3.8" transform="rotate(104 132 181)" fill="#9ab884" opacity="0.59"/>
<ellipse cx="280" cy="102" rx="5.5" ry="3.9" transform="rotate(144 280 102)" fill="#6f965c" opacity="0.65"/>
<ellipse cx="261" cy="79" rx="2.8" ry="2.0" transform="rotate(1 261 79)" fill="#6f965c" opacity="0.78"/>
<ellipse cx="138" cy="200" rx="5.9" ry="4.1" transform="rotate(62 138 200)" fill="#7fa268" opacity="0.60"/>
<ellipse cx="258" cy="186" rx="3.4" ry="2.4" transform="rotate(147 258 186)" fill="#5f8a4e" opacity="0.90"/>
<ellipse cx="242" cy="13" rx="5.5" ry="3.9" transform="rotate(131 242 13)" fill="#5f8a4e" opacity="0.75"/>
<ellipse cx="79" cy="67" rx="4.3" ry="3.0" transform="rotate(178 79 67)" fill="#7fa268" opacity="0.56"/>
<ellipse cx="239" cy="56" rx="5.4" ry="3.8" transform="rotate(133 239 56)" fill="#5f8a4e" opacity="0.78"/>
<ellipse cx="169" cy="126" rx="5.1" ry="3.6" transform="rotate(103 169 126)" fill="#7fa268" opacity="0.60"/>
<ellipse cx="274" cy="116" rx="3.1" ry="2.1" transform="rotate(146 274 116)" fill="#8aad72" opacity="0.61"/>
<ellipse cx="168" cy="85" rx="5.8" ry="4.1" transform="rotate(99 168 85)" fill="#7fa268" opacity="0.93"/>
<ellipse cx="228" cy="128" rx="4.5" ry="3.1" transform="rotate(13 228 128)" fill="#7fa268" opacity="0.71"/>
<ellipse cx="248" cy="73" rx="3.1" ry="2.2" transform="rotate(144 248 73)" fill="#6f965c" opacity="0.84"/>
<ellipse cx="255" cy="196" rx="5.3" ry="3.7" transform="rotate(132 255 196)" fill="#86a870" opacity="0.57"/>
<ellipse cx="270" cy="143" rx="2.2" ry="1.6" transform="rotate(17 270 143)" fill="#7fa268" opacity="0.76"/>
<ellipse cx="129" cy="43" rx="4.7" ry="3.3" transform="rotate(101 129 43)" fill="#8aad72" opacity="0.61"/>
<ellipse cx="248" cy="201" rx="4.6" ry="3.2" transform="rotate(164 248 201)" fill="#7fa268" opacity="0.56"/>
<ellipse cx="210" cy="197" rx="4.6" ry="3.2" transform="rotate(9 210 197)" fill="#5f8a4e" opacity="0.77"/>
<ellipse cx="210" cy="54" rx="4.2" ry="2.9" transform="rotate(10 210 54)" fill="#9ab884" opacity="0.64"/>
<ellipse cx="118" cy="66" rx="4.7" ry="3.3" transform="rotate(131 118 66)" fill="#7fa268" opacity="0.57"/>
<ellipse cx="278" cy="18" rx="4.4" ry="3.1" transform="rotate(130 278 18)" fill="#8aad72" opacity="0.73"/>
<ellipse cx="118" cy="52" rx="2.5" ry="1.8" transform="rotate(116 118 52)" fill="#86a870" opacity="0.66"/>
<ellipse cx="207" cy="123" rx="4.7" ry="3.3" transform="rotate(93 207 123)" fill="#8aad72" opacity="0.77"/>
<ellipse cx="168" cy="118" rx="4.5" ry="3.2" transform="rotate(7 168 118)" fill="#9ab884" opacity="0.88"/>
<ellipse cx="104" cy="48" rx="4.1" ry="2.9" transform="rotate(101 104 48)" fill="#9ab884" opacity="0.94"/>
<ellipse cx="11" cy="76" rx="3.1" ry="2.2" transform="rotate(69 11 76)" fill="#86a870" opacity="0.68"/>
<ellipse cx="117" cy="212" rx="3.3" ry="2.3" transform="rotate(17 117 212)" fill="#7fa268" opacity="0.61"/>
<ellipse cx="206" cy="75" rx="4.7" ry="3.3" transform="rotate(112 206 75)" fill="#86a870" opacity="0.71"/>
<ellipse cx="138" cy="164" rx="4.2" ry="2.9" transform="rotate(39 138 164)" fill="#5f8a4e" opacity="0.85"/>
<ellipse cx="156" cy="144" rx="2.7" ry="1.9" transform="rotate(70 156 144)" fill="#8aad72" opacity="0.80"/>
<ellipse cx="259" cy="111" rx="5.0" ry="3.5" transform="rotate(121 259 111)" fill="#5f8a4e" opacity="0.92"/>
<ellipse cx="112" cy="136" rx="4.6" ry="3.2" transform="rotate(26 112 136)" fill="#5f8a4e" opacity="0.60"/>
<ellipse cx="5" cy="165" rx="4.1" ry="2.9" transform="rotate(71 5 165)" fill="#86a870" opacity="0.61"/>
<ellipse cx="271" cy="131" rx="3.6" ry="2.5" transform="rotate(73 271 131)" fill="#9ab884" opacity="0.83"/>
<ellipse cx="235" cy="63" rx="3.7" ry="2.6" transform="rotate(165 235 63)" fill="#86a870" opacity="0.79"/>
<ellipse cx="128" cy="169" rx="5.4" ry="3.8" transform="rotate(76 128 169)" fill="#9ab884" opacity="0.70"/>
<ellipse cx="84" cy="65" rx="2.8" ry="1.9" transform="rotate(59 84 65)" fill="#86a870" opacity="0.70"/>
<ellipse cx="264" cy="180" rx="5.8" ry="4.1" transform="rotate(2 264 180)" fill="#8aad72" opacity="0.94"/>
<ellipse cx="19" cy="55" rx="3.3" ry="2.3" transform="rotate(137 19 55)" fill="#86a870" opacity="0.86"/>
<ellipse cx="210" cy="94" rx="5.3" ry="3.7" transform="rotate(99 210 94)" fill="#5f8a4e" opacity="0.82"/>
<ellipse cx="169" cy="9" rx="4.8" ry="3.3" transform="rotate(173 169 9)" fill="#9ab884" opacity="0.93"/>
<ellipse cx="179" cy="139" rx="5.7" ry="4.0" transform="rotate(107 179 139)" fill="#8aad72" opacity="0.90"/>
<ellipse cx="175" cy="95" rx="4.6" ry="3.2" transform="rotate(135 175 95)" fill="#86a870" opacity="0.69"/>
<ellipse cx="241" cy="20" rx="3.6" ry="2.5" transform="rotate(79 241 20)" fill="#6f965c" opacity="0.94"/>
<ellipse cx="182" cy="24" rx="5.6" ry="3.9" transform="rotate(130 182 24)" fill="#5f8a4e" opacity="0.69"/>
<ellipse cx="274" cy="90" rx="2.8" ry="2.0" transform="rotate(53 274 90)" fill="#6f965c" opacity="0.88"/>
<ellipse cx="180" cy="40" rx="2.9" ry="2.0" transform="rotate(27 180 40)" fill="#5f8a4e" opacity="0.78"/>
<ellipse cx="137" cy="214" rx="4.6" ry="3.2" transform="rotate(2 137 214)" fill="#7fa268" opacity="0.83"/>
<ellipse cx="251" cy="66" rx="4.8" ry="3.4" transform="rotate(101 251 66)" fill="#7fa268" opacity="0.92"/>
<ellipse cx="264" cy="126" rx="4.7" ry="3.3" transform="rotate(141 264 126)" fill="#8aad72" opacity="0.62"/>
<ellipse cx="257" cy="61" rx="6.1" ry="4.3" fill="#5f8a50" opacity="0.73"/>
<ellipse cx="241" cy="9" rx="3.1" ry="2.2" fill="#4f7a42" opacity="0.51"/>
<ellipse cx="208" cy="66" rx="4.5" ry="3.1" fill="#6f9a5c" opacity="0.75"/>
<ellipse cx="281" cy="4" rx="2.5" ry="1.8" fill="#3f6a36" opacity="0.56"/>
<ellipse cx="224" cy="19" rx="2.6" ry="1.8" fill="#4f7a42" opacity="0.84"/>
<ellipse cx="295" cy="4" rx="3.3" ry="2.3" fill="#6f9a5c" opacity="0.51"/>
<ellipse cx="222" cy="28" rx="5.6" ry="3.9" fill="#4f7a42" opacity="0.68"/>
<ellipse cx="262" cy="17" rx="2.7" ry="1.9" fill="#5f8a50" opacity="0.63"/>
<ellipse cx="290" cy="57" rx="3.7" ry="2.6" fill="#3f6a36" opacity="0.88"/>
<ellipse cx="250" cy="66" rx="3.5" ry="2.4" fill="#6f9a5c" opacity="0.77"/>
<ellipse cx="258" cy="29" rx="4.1" ry="2.9" fill="#6f9a5c" opacity="0.51"/>
<ellipse cx="287" cy="6" rx="3.2" ry="2.2" fill="#6f9a5c" opacity="0.57"/>
<ellipse cx="297" cy="20" rx="4.7" ry="3.3" fill="#4f7a42" opacity="0.63"/>
<ellipse cx="287" cy="24" rx="5.1" ry="3.6" fill="#4f7a42" opacity="0.67"/>
<ellipse cx="291" cy="39" rx="4.0" ry="2.8" fill="#6f9a5c" opacity="0.61"/>
<ellipse cx="224" cy="2" rx="5.2" ry="3.6" fill="#3f6a36" opacity="0.82"/>
<ellipse cx="224" cy="9" rx="3.3" ry="2.3" fill="#5f8a50" opacity="0.72"/>
<ellipse cx="247" cy="56" rx="3.5" ry="2.4" fill="#3f6a36" opacity="0.64"/>
<ellipse cx="272" cy="26" rx="6.3" ry="4.4" fill="#5f8a50" opacity="0.62"/>
<ellipse cx="248" cy="14" rx="5.9" ry="4.2" fill="#5f8a50" opacity="0.88"/>
<ellipse cx="300" cy="42" rx="4.3" ry="3.0" fill="#3f6a36" opacity="0.71"/>
<ellipse cx="240" cy="36" rx="3.0" ry="2.1" fill="#4f7a42" opacity="0.77"/>
<ellipse cx="209" cy="60" rx="5.4" ry="3.8" fill="#6f9a5c" opacity="0.51"/>
<ellipse cx="272" cy="10" rx="2.6" ry="1.8" fill="#4f7a42" opacity="0.78"/>
<ellipse cx="278" cy="16" rx="3.3" ry="2.3" fill="#4f7a42" opacity="0.53"/>
<ellipse cx="291" cy="56" rx="5.5" ry="3.9" fill="#5f8a50" opacity="0.53"/>
<ellipse cx="231" cy="16" rx="3.0" ry="2.1" fill="#6f9a5c" opacity="0.61"/>
<ellipse cx="240" cy="64" rx="5.6" ry="3.9" fill="#5f8a50" opacity="0.87"/>
<ellipse cx="218" cy="26" rx="5.7" ry="4.0" fill="#3f6a36" opacity="0.86"/>
<ellipse cx="203" cy="49" rx="4.4" ry="3.0" fill="#6f9a5c" opacity="0.64"/>
<ellipse cx="263" cy="13" rx="3.0" ry="2.1" fill="#5f8a50" opacity="0.79"/>
<ellipse cx="204" cy="3" rx="3.1" ry="2.2" fill="#5f8a50" opacity="0.80"/>
<ellipse cx="216" cy="52" rx="4.7" ry="3.3" fill="#5f8a50" opacity="0.73"/>
<ellipse cx="223" cy="35" rx="4.6" ry="3.2" fill="#6f9a5c" opacity="0.77"/>
<ellipse cx="258" cy="65" rx="2.9" ry="2.1" fill="#3f6a36" opacity="0.86"/>
<ellipse cx="288" cy="41" rx="5.3" ry="3.7" fill="#5f8a50" opacity="0.77"/>
<ellipse cx="204" cy="22" rx="5.6" ry="3.9" fill="#3f6a36" opacity="0.80"/>
<ellipse cx="209" cy="49" rx="4.1" ry="2.9" fill="#5f8a50" opacity="0.61"/>
<ellipse cx="209" cy="66" rx="4.2" ry="2.9" fill="#3f6a36" opacity="0.78"/>
<ellipse cx="274" cy="58" rx="5.0" ry="3.5" fill="#6f9a5c" opacity="0.70"/>
<ellipse cx="268" cy="14" rx="5.2" ry="3.6" fill="#5f8a50" opacity="0.70"/>
<ellipse cx="219" cy="67" rx="5.8" ry="4.1" fill="#3f6a36" opacity="0.57"/>
<ellipse cx="216" cy="55" rx="3.4" ry="2.4" fill="#3f6a36" opacity="0.60"/>
<ellipse cx="206" cy="25" rx="4.1" ry="2.9" fill="#5f8a50" opacity="0.75"/>
<ellipse cx="214" cy="48" rx="4.4" ry="3.1" fill="#6f9a5c" opacity="0.60"/>
<ellipse cx="224" cy="36" rx="4.3" ry="3.0" fill="#3f6a36" opacity="0.78"/>
<ellipse cx="213" cy="50" rx="4.9" ry="3.4" fill="#5f8a50" opacity="0.63"/>
<ellipse cx="282" cy="38" rx="5.5" ry="3.9" fill="#5f8a50" opacity="0.77"/>
<ellipse cx="215" cy="69" rx="5.9" ry="4.1" fill="#6f9a5c" opacity="0.83"/>
<ellipse cx="211" cy="20" rx="3.9" ry="2.8" fill="#5f8a50" opacity="0.52"/>
<ellipse cx="290" cy="21" rx="2.9" ry="2.1" fill="#3f6a36" opacity="0.68"/>
<ellipse cx="211" cy="23" rx="4.4" ry="3.1" fill="#3f6a36" opacity="0.62"/>
<ellipse cx="256" cy="3" rx="4.4" ry="3.1" fill="#6f9a5c" opacity="0.53"/>
<ellipse cx="272" cy="69" rx="4.8" ry="3.3" fill="#4f7a42" opacity="0.76"/>
<ellipse cx="296" cy="34" rx="5.6" ry="3.9" fill="#3f6a36" opacity="0.50"/>
<ellipse cx="292" cy="45" rx="5.0" ry="3.5" fill="#3f6a36" opacity="0.76"/>
<ellipse cx="208" cy="52" rx="2.6" ry="1.8" fill="#6f9a5c" opacity="0.84"/>
<ellipse cx="230" cy="13" rx="5.1" ry="3.5" fill="#5f8a50" opacity="0.54"/>
<ellipse cx="272" cy="22" rx="5.0" ry="3.5" fill="#6f9a5c" opacity="0.57"/>
<ellipse cx="283" cy="22" rx="4.0" ry="2.8" fill="#3f6a36" opacity="0.84"/>
<ellipse cx="225" cy="4" rx="2.9" ry="2.1" fill="#6f9a5c" opacity="0.86"/>
<ellipse cx="294" cy="35" rx="4.5" ry="3.1" fill="#5f8a50" opacity="0.90"/>
<ellipse cx="260" cy="44" rx="3.1" ry="2.1" fill="#5f8a50" opacity="0.57"/>
<ellipse cx="244" cy="68" rx="2.9" ry="2.0" fill="#4f7a42" opacity="0.84"/>
<ellipse cx="248" cy="15" rx="4.0" ry="2.8" fill="#4f7a42" opacity="0.84"/>
<ellipse cx="286" cy="55" rx="4.2" ry="2.9" fill="#3f6a36" opacity="0.53"/>
<ellipse cx="206" cy="50" rx="6.1" ry="4.2" fill="#4f7a42" opacity="0.68"/>
<ellipse cx="267" cy="58" rx="6.1" ry="4.3" fill="#5f8a50" opacity="0.65"/>
<ellipse cx="200" cy="56" rx="5.2" ry="3.6" fill="#5f8a50" opacity="0.69"/>
<ellipse cx="254" cy="36" rx="4.2" ry="2.9" fill="#5f8a50" opacity="0.89"/>
<ellipse cx="29" cy="124" rx="4.8" ry="3.4" fill="#7fa268" opacity="0.79"/>
<ellipse cx="10" cy="132" rx="4.0" ry="2.8" fill="#6f965c" opacity="0.88"/>
<ellipse cx="14" cy="129" rx="3.0" ry="2.1" fill="#6f965c" opacity="0.71"/>
<ellipse cx="19" cy="170" rx="2.8" ry="1.9" fill="#8aad72" opacity="0.68"/>
<ellipse cx="3" cy="132" rx="3.3" ry="2.3" fill="#8aad72" opacity="0.88"/>
<ellipse cx="11" cy="48" rx="3.5" ry="2.5" fill="#6f965c" opacity="0.55"/>
<ellipse cx="5" cy="178" rx="3.9" ry="2.7" fill="#7fa268" opacity="0.59"/>
<ellipse cx="25" cy="130" rx="2.7" ry="1.9" fill="#8aad72" opacity="0.60"/>
<ellipse cx="15" cy="111" rx="2.8" ry="2.0" fill="#8aad72" opacity="0.78"/>
<ellipse cx="22" cy="182" rx="4.0" ry="2.8" fill="#6f965c" opacity="0.77"/>
<ellipse cx="24" cy="27" rx="3.8" ry="2.6" fill="#8aad72" opacity="0.79"/>
<ellipse cx="23" cy="23" rx="5.5" ry="3.8" fill="#8aad72" opacity="0.71"/>
<ellipse cx="14" cy="137" rx="3.9" ry="2.7" fill="#7fa268" opacity="0.73"/>
<ellipse cx="23" cy="27" rx="4.7" ry="3.3" fill="#7fa268" opacity="0.66"/>
<ellipse cx="1" cy="8" rx="4.5" ry="3.1" fill="#7fa268" opacity="0.68"/>
<ellipse cx="4" cy="27" rx="5.2" ry="3.6" fill="#7fa268" opacity="0.75"/>
<ellipse cx="26" cy="113" rx="5.2" ry="3.6" fill="#6f965c" opacity="0.57"/>
<ellipse cx="22" cy="68" rx="4.7" ry="3.3" fill="#8aad72" opacity="0.50"/>
<ellipse cx="8" cy="48" rx="3.8" ry="2.7" fill="#8aad72" opacity="0.88"/>
<ellipse cx="22" cy="9" rx="4.1" ry="2.9" fill="#7fa268" opacity="0.64"/>
<ellipse cx="10" cy="121" rx="2.1" ry="1.5" fill="#8aad72" opacity="0.60"/>
<ellipse cx="11" cy="139" rx="2.1" ry="1.5" fill="#8aad72" opacity="0.68"/>
<ellipse cx="24" cy="98" rx="2.3" ry="1.6" fill="#6f965c" opacity="0.57"/>
<ellipse cx="17" cy="58" rx="4.4" ry="3.1" fill="#6f965c" opacity="0.83"/>
<ellipse cx="18" cy="50" rx="5.5" ry="3.8" fill="#6f965c" opacity="0.88"/>
<ellipse cx="0" cy="68" rx="2.5" ry="1.8" fill="#8aad72" opacity="0.69"/>
<ellipse cx="1" cy="167" rx="2.3" ry="1.6" fill="#8aad72" opacity="0.83"/>
<ellipse cx="20" cy="79" rx="3.7" ry="2.6" fill="#7fa268" opacity="0.78"/>
<ellipse cx="13" cy="46" rx="5.4" ry="3.7" fill="#8aad72" opacity="0.53"/>
<ellipse cx="10" cy="43" rx="5.1" ry="3.6" fill="#8aad72" opacity="0.75"/>
<ellipse cx="6" cy="164" rx="4.5" ry="3.2" fill="#6f965c" opacity="0.73"/>
<ellipse cx="12" cy="71" rx="2.0" ry="1.4" fill="#8aad72" opacity="0.69"/>
<ellipse cx="7" cy="50" rx="5.1" ry="3.5" fill="#8aad72" opacity="0.52"/>
<ellipse cx="4" cy="134" rx="3.0" ry="2.1" fill="#6f965c" opacity="0.53"/>
<ellipse cx="30" cy="71" rx="4.0" ry="2.8" fill="#8aad72" opacity="0.88"/>
<ellipse cx="30" cy="7" rx="4.0" ry="2.8" fill="#7fa268" opacity="0.85"/>
<ellipse cx="23" cy="127" rx="4.2" ry="3.0" fill="#6f965c" opacity="0.82"/>
<ellipse cx="24" cy="48" rx="4.8" ry="3.4" fill="#7fa268" opacity="0.77"/>
<ellipse cx="9" cy="153" rx="4.6" ry="3.2" fill="#8aad72" opacity="0.84"/>
<ellipse cx="7" cy="175" rx="4.5" ry="3.2" fill="#6f965c" opacity="0.52"/>
<circle cx="124" cy="68" r="4.5" fill="#f4f8f2" opacity="0.79"/>
<circle cx="132" cy="51" r="2.2" fill="#f4f8f2" opacity="0.74"/>
<circle cx="74" cy="2" r="4.1" fill="#f4f8f2" opacity="0.78"/>
<circle cx="151" cy="119" r="2.4" fill="#f4f8f2" opacity="0.67"/>
<circle cx="57" cy="63" r="2.4" fill="#f4f8f2" opacity="0.89"/>
<circle cx="178" cy="197" r="2.5" fill="#f4f8f2" opacity="0.97"/>
<circle cx="186" cy="17" r="2.0" fill="#f4f8f2" opacity="0.83"/>
<circle cx="287" cy="75" r="3.8" fill="#f4f8f2" opacity="0.77"/>
<circle cx="257" cy="14" r="3.0" fill="#f4f8f2" opacity="0.96"/>
<circle cx="109" cy="54" r="1.6" fill="#f4f8f2" opacity="0.67"/>
<circle cx="107" cy="148" r="2.2" fill="#f4f8f2" opacity="0.76"/>
<circle cx="90" cy="127" r="4.1" fill="#f4f8f2" opacity="0.86"/>
<circle cx="89" cy="154" r="4.4" fill="#f4f8f2" opacity="0.84"/>
<circle cx="60" cy="170" r="4.1" fill="#f4f8f2" opacity="0.74"/>
<circle cx="74" cy="40" r="3.1" fill="#f4f8f2" opacity="0.95"/>
<circle cx="200" cy="194" r="2.1" fill="#f4f8f2" opacity="0.73"/>
<circle cx="227" cy="136" r="2.7" fill="#f4f8f2" opacity="0.87"/>
<circle cx="124" cy="12" r="2.7" fill="#f4f8f2" opacity="0.62"/>
<circle cx="197" cy="70" r="3.0" fill="#f4f8f2" opacity="0.84"/>
<circle cx="104" cy="97" r="1.5" fill="#f4f8f2" opacity="0.97"/>
<circle cx="181" cy="207" r="1.7" fill="#f4f8f2" opacity="0.85"/>
<circle cx="221" cy="69" r="1.8" fill="#f4f8f2" opacity="0.66"/>
<circle cx="76" cy="161" r="1.8" fill="#f4f8f2" opacity="0.93"/>
<circle cx="146" cy="113" r="3.3" fill="#f4f8f2" opacity="0.82"/>
<circle cx="204" cy="126" r="2.5" fill="#f4f8f2" opacity="0.90"/>
<circle cx="104" cy="149" r="3.8" fill="#f4f8f2" opacity="0.91"/>
<circle cx="117" cy="162" r="4.4" fill="#f4f8f2" opacity="0.78"/>
<circle cx="110" cy="110" r="4.3" fill="#f4f8f2" opacity="0.65"/>
<circle cx="42" cy="100" r="3.5" fill="#f4f8f2" opacity="0.91"/>
<circle cx="131" cy="208" r="2.2" fill="#f4f8f2" opacity="0.90"/>
<circle cx="62" cy="6" r="1.9" fill="#f4f8f2" opacity="0.62"/>
<circle cx="165" cy="117" r="2.0" fill="#f4f8f2" opacity="0.98"/>
<circle cx="131" cy="31" r="2.0" fill="#f4f8f2" opacity="0.90"/>
<circle cx="270" cy="34" r="1.6" fill="#f4f8f2" opacity="0.91"/>
<circle cx="101" cy="206" r="3.0" fill="#f4f8f2" opacity="0.85"/>
<circle cx="126" cy="168" r="2.9" fill="#f4f8f2" opacity="0.73"/>
<circle cx="266" cy="23" r="3.7" fill="#f4f8f2" opacity="0.63"/>
<circle cx="201" cy="84" r="4.1" fill="#f4f8f2" opacity="0.62"/>
<circle cx="181" cy="86" r="4.3" fill="#f4f8f2" opacity="0.98"/>
<circle cx="197" cy="47" r="2.3" fill="#f4f8f2" opacity="0.70"/>
<circle cx="148" cy="49" r="2.1" fill="#f4f8f2" opacity="0.90"/>
<circle cx="201" cy="63" r="4.5" fill="#f4f8f2" opacity="0.69"/>
<circle cx="182" cy="33" r="4.1" fill="#f4f8f2" opacity="0.95"/>
<circle cx="107" cy="158" r="4.0" fill="#f4f8f2" opacity="0.71"/>
<circle cx="123" cy="102" r="4.2" fill="#f4f8f2" opacity="0.66"/>
<circle cx="211" cy="125" r="2.9" fill="#f4f8f2" opacity="0.83"/>
<circle cx="261" cy="44" r="4.2" fill="#f4f8f2" opacity="0.74"/>
<circle cx="235" cy="181" r="2.0" fill="#f4f8f2" opacity="0.95"/>
<circle cx="289" cy="62" r="1.6" fill="#f4f8f2" opacity="0.64"/>
<circle cx="284" cy="2" r="4.2" fill="#f4f8f2" opacity="0.66"/>
<circle cx="224" cy="20" r="2.0" fill="#f4f8f2" opacity="0.87"/>
<circle cx="63" cy="71" r="4.3" fill="#f4f8f2" opacity="0.89"/>
<circle cx="260" cy="206" r="1.6" fill="#f4f8f2" opacity="0.69"/>
<circle cx="238" cy="145" r="1.6" fill="#f4f8f2" opacity="0.80"/>
<circle cx="98" cy="90" r="1.8" fill="#f4f8f2" opacity="0.61"/>
<circle cx="288" cy="66" r="4.1" fill="#f4f8f2" opacity="0.65"/>
<circle cx="162" cy="29" r="2.8" fill="#f4f8f2" opacity="0.67"/>
<circle cx="211" cy="31" r="3.7" fill="#f4f8f2" opacity="0.80"/>
<circle cx="68" cy="74" r="3.0" fill="#f4f8f2" opacity="0.97"/>
<circle cx="127" cy="45" r="4.4" fill="#f4f8f2" opacity="0.95"/>
<circle cx="223" cy="57" r="2.0" fill="#f4f8f2" opacity="0.71"/>
<circle cx="57" cy="9" r="3.0" fill="#f4f8f2" opacity="0.76"/>
<circle cx="179" cy="76" r="1.5" fill="#f4f8f2" opacity="0.88"/>
<circle cx="203" cy="114" r="3.1" fill="#f4f8f2" opacity="0.88"/>
<circle cx="286" cy="184" r="3.7" fill="#f4f8f2" opacity="0.76"/>
<circle cx="120" cy="88" r="4.4" fill="#f4f8f2" opacity="0.75"/>
<circle cx="136" cy="86" r="1.9" fill="#f4f8f2" opacity="1.00"/>
<circle cx="41" cy="128" r="4.3" fill="#f4f8f2" opacity="0.70"/>
<circle cx="193" cy="79" r="2.2" fill="#f4f8f2" opacity="0.68"/>
<circle cx="69" cy="177" r="3.9" fill="#f4f8f2" opacity="0.96"/>
<circle cx="52" cy="146" r="2.5" fill="#f4f8f2" opacity="0.86"/>
<circle cx="177" cy="66" r="4.4" fill="#f4f8f2" opacity="0.60"/>
<circle cx="227" cy="179" r="3.0" fill="#f4f8f2" opacity="0.84"/>
<circle cx="289" cy="49" r="3.4" fill="#f4f8f2" opacity="0.90"/>
<circle cx="135" cy="150" r="2.7" fill="#f4f8f2" opacity="0.81"/>
<circle cx="193" cy="142" r="2.5" fill="#f4f8f2" opacity="0.85"/>
<circle cx="176" cy="47" r="3.3" fill="#f4f8f2" opacity="0.71"/>
<circle cx="267" cy="99" r="3.7" fill="#f4f8f2" opacity="0.81"/>
<circle cx="159" cy="46" r="1.9" fill="#f4f8f2" opacity="0.97"/>
<circle cx="172" cy="110" r="3.1" fill="#f4f8f2" opacity="0.93"/>
<circle cx="100" cy="36" r="4.0" fill="#f4f8f2" opacity="0.78"/>
<circle cx="200" cy="174" r="4.2" fill="#f4f8f2" opacity="0.95"/>
<circle cx="51" cy="80" r="4.0" fill="#f4f8f2" opacity="0.93"/>
<circle cx="71" cy="32" r="2.3" fill="#f4f8f2" opacity="0.64"/>
<circle cx="129" cy="169" r="3.1" fill="#f4f8f2" opacity="0.78"/>
<circle cx="62" cy="83" r="4.5" fill="#f4f8f2" opacity="0.88"/>
<circle cx="152" cy="100" r="3.9" fill="#f4f8f2" opacity="0.90"/>
<circle cx="77" cy="143" r="2.6" fill="#f4f8f2" opacity="0.81"/>
<circle cx="99" cy="78" r="2.5" fill="#f4f8f2" opacity="0.75"/>
<circle cx="44" cy="42" r="3.2" fill="#f4f8f2" opacity="0.62"/>
<circle cx="85" cy="151" r="2.3" fill="#f4f8f2" opacity="0.73"/>
<circle cx="100" cy="175" r="1.8" fill="#f4f8f2" opacity="0.85"/>
<circle cx="255" cy="42" r="2.8" fill="#f4f8f2" opacity="0.92"/>
<circle cx="194" cy="78" r="1.6" fill="#f4f8f2" opacity="0.78"/>
<circle cx="132" cy="150" r="2.4" fill="#f4f8f2" opacity="0.76"/>
<circle cx="202" cy="170" r="2.6" fill="#f4f8f2" opacity="0.75"/>
<circle cx="185" cy="194" r="2.1" fill="#f4f8f2" opacity="0.99"/>
<circle cx="218" cy="78" r="3.5" fill="#f4f8f2" opacity="0.73"/>
<circle cx="58" cy="159" r="2.6" fill="#f4f8f2" opacity="0.81"/>
<circle cx="164" cy="189" r="3.8" fill="#f4f8f2" opacity="0.61"/>
<circle cx="188" cy="97" r="2.9" fill="#f4f8f2" opacity="0.94"/>
<circle cx="144" cy="99" r="4.2" fill="#f4f8f2" opacity="0.78"/>
<circle cx="163" cy="107" r="4.0" fill="#f4f8f2" opacity="0.87"/>
<circle cx="225" cy="84" r="1.6" fill="#f4f8f2" opacity="0.87"/>
<circle cx="178" cy="162" r="3.8" fill="#f4f8f2" opacity="0.65"/>
<circle cx="95" cy="16" r="4.0" fill="#f4f8f2" opacity="0.64"/>
<circle cx="62" cy="158" r="3.2" fill="#f4f8f2" opacity="0.62"/>
<circle cx="210" cy="149" r="2.9" fill="#f4f8f2" opacity="0.62"/>
<circle cx="213" cy="88" r="3.3" fill="#f4f8f2" opacity="1.00"/>
<circle cx="244" cy="183" r="1.9" fill="#f4f8f2" opacity="0.73"/>
<circle cx="170" cy="1" r="4.5" fill="#f4f8f2" opacity="0.71"/>
<circle cx="106" cy="66" r="2.3" fill="#f4f8f2" opacity="0.94"/>
<circle cx="179" cy="107" r="2.8" fill="#f4f8f2" opacity="0.62"/>
<circle cx="116" cy="182" r="3.9" fill="#f4f8f2" opacity="0.94"/>
<circle cx="104" cy="42" r="1.7" fill="#f4f8f2" opacity="0.81"/>
<circle cx="133" cy="97" r="3.0" fill="#f4f8f2" opacity="0.83"/>
<circle cx="131" cy="168" r="2.1" fill="#f4f8f2" opacity="0.97"/>
<circle cx="179" cy="11" r="2.4" fill="#f4f8f2" opacity="0.81"/>
<circle cx="142" cy="119" r="2.5" fill="#f4f8f2" opacity="0.71"/>
<circle cx="239" cy="61" r="3.6" fill="#f4f8f2" opacity="0.92"/>
<circle cx="188" cy="95" r="4.3" fill="#f4f8f2" opacity="0.78"/>
<circle cx="260" cy="12" r="2.8" fill="#f4f8f2" opacity="0.86"/>
<circle cx="52" cy="181" r="1.7" fill="#f4f8f2" opacity="0.84"/>
<circle cx="85" cy="194" r="3.2" fill="#f4f8f2" opacity="0.92"/>
<circle cx="165" cy="142" r="3.5" fill="#f4f8f2" opacity="0.72"/>
<circle cx="93" cy="176" r="1.9" fill="#f4f8f2" opacity="0.97"/>
<circle cx="92" cy="21" r="1.8" fill="#f4f8f2" opacity="0.91"/>
<circle cx="278" cy="87" r="3.5" fill="#f4f8f2" opacity="0.70"/>
<circle cx="266" cy="144" r="2.0" fill="#f4f8f2" opacity="0.62"/>
<circle cx="214" cy="9" r="4.0" fill="#f4f8f2" opacity="0.72"/>
<circle cx="98" cy="122" r="2.5" fill="#f4f8f2" opacity="0.82"/>
<circle cx="78" cy="191" r="2.5" fill="#f4f8f2" opacity="0.94"/>
<circle cx="78" cy="168" r="4.4" fill="#f4f8f2" opacity="0.76"/>
<circle cx="48" cy="80" r="3.4" fill="#f4f8f2" opacity="0.69"/>
<circle cx="176" cy="20" r="2.9" fill="#f4f8f2" opacity="0.89"/>
<circle cx="147" cy="143" r="1.8" fill="#f4f8f2" opacity="0.93"/>
<circle cx="71" cy="194" r="4.5" fill="#f4f8f2" opacity="0.98"/>
<circle cx="172" cy="61" r="2.5" fill="#f4f8f2" opacity="0.90"/>
<circle cx="164" cy="195" r="1.8" fill="#f4f8f2" opacity="0.79"/>
<circle cx="256" cy="126" r="3.1" fill="#f4f8f2" opacity="0.64"/>
<circle cx="75" cy="57" r="4.2" fill="#f4f8f2" opacity="0.94"/>
<circle cx="97" cy="194" r="1.6" fill="#f4f8f2" opacity="0.84"/>
<circle cx="282" cy="72" r="4.3" fill="#f4f8f2" opacity="0.86"/>
<circle cx="53" cy="70" r="2.8" fill="#f4f8f2" opacity="0.70"/>
<circle cx="226" cy="38" r="3.9" fill="#f4f8f2" opacity="0.72"/>
<circle cx="57" cy="117" r="1.8" fill="#f4f8f2" opacity="0.82"/>
<circle cx="237" cy="125" r="2.9" fill="#f4f8f2" opacity="0.61"/>
<circle cx="168" cy="20" r="3.4" fill="#f4f8f2" opacity="0.65"/>
<circle cx="184" cy="74" r="2.6" fill="#f4f8f2" opacity="0.87"/>
<circle cx="81" cy="36" r="4.3" fill="#f4f8f2" opacity="0.73"/>
</g>
<g filter="url(#b2)">
<ellipse cx="508" cy="237" rx="7.4" ry="4.0" transform="rotate(-14 508 237)" fill="#8cc472" opacity="0.49"/>
<ellipse cx="406" cy="161" rx="4.8" ry="2.7" transform="rotate(-15 406 161)" fill="#2f5a2c" opacity="0.52"/>
<ellipse cx="417" cy="154" rx="6.6" ry="3.6" transform="rotate(-12 417 154)" fill="#3f7036" opacity="0.61"/>
<ellipse cx="320" cy="69" rx="5.7" ry="3.1" transform="rotate(2 320 69)" fill="#a4d488" opacity="0.55"/>
<ellipse cx="288" cy="64" rx="4.4" ry="2.4" transform="rotate(14 288 64)" fill="#3f7036" opacity="0.75"/>
<ellipse cx="286" cy="79" rx="9.9" ry="5.4" transform="rotate(-3 286 79)" fill="#4d8440" opacity="0.61"/>
<ellipse cx="412" cy="106" rx="10.2" ry="5.6" transform="rotate(12 412 106)" fill="#78b060" opacity="0.68"/>
<ellipse cx="329" cy="174" rx="9.5" ry="5.2" transform="rotate(22 329 174)" fill="#4d8440" opacity="0.55"/>
<ellipse cx="436" cy="261" rx="4.3" ry="2.4" transform="rotate(22 436 261)" fill="#8cc472" opacity="0.57"/>
<ellipse cx="285" cy="211" rx="8.1" ry="4.5" transform="rotate(-30 285 211)" fill="#8cc472" opacity="0.58"/>
<ellipse cx="534" cy="217" rx="4.2" ry="2.3" transform="rotate(-21 534 217)" fill="#3f7036" opacity="0.74"/>
<ellipse cx="460" cy="74" rx="6.4" ry="3.5" transform="rotate(-17 460 74)" fill="#8cc472" opacity="0.53"/>
<ellipse cx="325" cy="114" rx="10.8" ry="6.0" transform="rotate(20 325 114)" fill="#4d8440" opacity="0.80"/>
<ellipse cx="271" cy="158" rx="6.3" ry="3.5" transform="rotate(18 271 158)" fill="#78b060" opacity="0.69"/>
<ellipse cx="278" cy="235" rx="4.4" ry="2.4" transform="rotate(20 278 235)" fill="#98cc7c" opacity="0.61"/>
<ellipse cx="451" cy="259" rx="8.1" ry="4.4" transform="rotate(13 451 259)" fill="#2f5a2c" opacity="0.76"/>
<ellipse cx="406" cy="98" rx="8.9" ry="4.9" transform="rotate(27 406 98)" fill="#5f9a4c" opacity="0.47"/>
<ellipse cx="397" cy="217" rx="8.8" ry="4.8" transform="rotate(-3 397 217)" fill="#8cc472" opacity="0.60"/>
<ellipse cx="448" cy="251" rx="7.6" ry="4.2" transform="rotate(11 448 251)" fill="#a4d488" opacity="0.83"/>
<ellipse cx="294" cy="258" rx="9.5" ry="5.2" transform="rotate(18 294 258)" fill="#5f9a4c" opacity="0.79"/>
<ellipse cx="328" cy="85" rx="7.2" ry="4.0" transform="rotate(26 328 85)" fill="#3f7036" opacity="0.65"/>
<ellipse cx="527" cy="194" rx="9.0" ry="4.9" transform="rotate(12 527 194)" fill="#4a803c" opacity="0.76"/>
<ellipse cx="493" cy="194" rx="10.6" ry="5.8" transform="rotate(-5 493 194)" fill="#4a803c" opacity="0.83"/>
<ellipse cx="327" cy="191" rx="9.5" ry="5.2" transform="rotate(20 327 191)" fill="#4a803c" opacity="0.57"/>
<ellipse cx="348" cy="176" rx="10.7" ry="5.9" transform="rotate(-4 348 176)" fill="#2f5a2c" opacity="0.61"/>
<ellipse cx="348" cy="73" rx="7.8" ry="4.3" transform="rotate(-8 348 73)" fill="#78b060" opacity="0.61"/>
<ellipse cx="397" cy="47" rx="6.4" ry="3.5" transform="rotate(-19 397 47)" fill="#5f9a4c" opacity="0.73"/>
<ellipse cx="390" cy="189" rx="9.6" ry="5.3" transform="rotate(-17 390 189)" fill="#78b060" opacity="0.72"/>
<ellipse cx="272" cy="225" rx="5.3" ry="2.9" transform="rotate(-9 272 225)" fill="#5f9a4c" opacity="0.83"/>
<ellipse cx="367" cy="90" rx="10.2" ry="5.6" transform="rotate(-11 367 90)" fill="#4a803c" opacity="0.65"/>
<ellipse cx="541" cy="154" rx="10.9" ry="6.0" transform="rotate(24 541 154)" fill="#3f7036" opacity="0.78"/>
<ellipse cx="308" cy="159" rx="4.0" ry="2.2" transform="rotate(-24 308 159)" fill="#8cc472" opacity="0.83"/>
<ellipse cx="394" cy="222" rx="5.8" ry="3.2" transform="rotate(13 394 222)" fill="#98cc7c" opacity="0.49"/>
<ellipse cx="422" cy="234" rx="7.6" ry="4.2" transform="rotate(-22 422 234)" fill="#4a803c" opacity="0.82"/>
<ellipse cx="523" cy="190" rx="4.5" ry="2.5" transform="rotate(-2 523 190)" fill="#98cc7c" opacity="0.56"/>
<ellipse cx="347" cy="109" rx="9.0" ry="4.9" transform="rotate(30 347 109)" fill="#4a803c" opacity="0.66"/>
<ellipse cx="459" cy="244" rx="7.5" ry="4.1" transform="rotate(14 459 244)" fill="#98cc7c" opacity="0.84"/>
<ellipse cx="277" cy="228" rx="8.8" ry="4.8" transform="rotate(-6 277 228)" fill="#a4d488" opacity="0.63"/>
<ellipse cx="481" cy="240" rx="9.1" ry="5.0" transform="rotate(-28 481 240)" fill="#2f5a2c" opacity="0.83"/>
<ellipse cx="402" cy="42" rx="10.6" ry="5.8" transform="rotate(-21 402 42)" fill="#5f9a4c" opacity="0.53"/>
<ellipse cx="530" cy="154" rx="11.0" ry="6.0" transform="rotate(17 530 154)" fill="#8cc472" opacity="0.69"/>
<ellipse cx="549" cy="181" rx="5.7" ry="3.1" transform="rotate(-29 549 181)" fill="#a4d488" opacity="0.62"/>
<ellipse cx="548" cy="186" rx="9.6" ry="5.3" transform="rotate(1 548 186)" fill="#4a803c" opacity="0.84"/>
<ellipse cx="469" cy="195" rx="5.9" ry="3.3" transform="rotate(23 469 195)" fill="#8cc472" opacity="0.68"/>
<ellipse cx="503" cy="219" rx="6.4" ry="3.5" transform="rotate(-18 503 219)" fill="#8cc472" opacity="0.66"/>
<ellipse cx="518" cy="76" rx="9.2" ry="5.0" transform="rotate(13 518 76)" fill="#8cc472" opacity="0.57"/>
<ellipse cx="276" cy="107" rx="6.7" ry="3.7" transform="rotate(14 276 107)" fill="#98cc7c" opacity="0.52"/>
<ellipse cx="351" cy="252" rx="5.4" ry="3.0" transform="rotate(29 351 252)" fill="#98cc7c" opacity="0.63"/>
<ellipse cx="292" cy="99" rx="6.8" ry="3.7" transform="rotate(20 292 99)" fill="#4a803c" opacity="0.84"/>
<ellipse cx="338" cy="86" rx="10.4" ry="5.7" transform="rotate(2 338 86)" fill="#2f5a2c" opacity="0.78"/>
<ellipse cx="447" cy="215" rx="6.2" ry="3.4" transform="rotate(-13 447 215)" fill="#8cc472" opacity="0.75"/>
<ellipse cx="398" cy="166" rx="8.7" ry="4.8" transform="rotate(-13 398 166)" fill="#78b060" opacity="0.61"/>
<ellipse cx="471" cy="129" rx="9.7" ry="5.3" transform="rotate(-14 471 129)" fill="#78b060" opacity="0.63"/>
<ellipse cx="263" cy="160" rx="8.9" ry="4.9" transform="rotate(-8 263 160)" fill="#5f9a4c" opacity="0.69"/>
<ellipse cx="366" cy="261" rx="10.2" ry="5.6" transform="rotate(-24 366 261)" fill="#a4d488" opacity="0.75"/>
<ellipse cx="459" cy="133" rx="9.7" ry="5.3" transform="rotate(29 459 133)" fill="#78b060" opacity="0.57"/>
<ellipse cx="450" cy="258" rx="8.4" ry="4.6" transform="rotate(19 450 258)" fill="#78b060" opacity="0.61"/>
<ellipse cx="507" cy="218" rx="9.9" ry="5.4" transform="rotate(-5 507 218)" fill="#4a803c" opacity="0.65"/>
<ellipse cx="359" cy="235" rx="9.0" ry="4.9" transform="rotate(4 359 235)" fill="#8cc472" opacity="0.74"/>
<ellipse cx="382" cy="249" rx="6.0" ry="3.3" transform="rotate(-9 382 249)" fill="#3f7036" opacity="0.72"/>
<ellipse cx="261" cy="169" rx="5.6" ry="3.1" transform="rotate(-5 261 169)" fill="#4a803c" opacity="0.54"/>
<ellipse cx="474" cy="217" rx="8.8" ry="4.8" transform="rotate(-21 474 217)" fill="#8cc472" opacity="0.54"/>
<ellipse cx="510" cy="94" rx="4.9" ry="2.7" transform="rotate(27 510 94)" fill="#5f9a4c" opacity="0.46"/>
<ellipse cx="545" cy="249" rx="6.7" ry="3.7" transform="rotate(-22 545 249)" fill="#5f9a4c" opacity="0.71"/>
<ellipse cx="517" cy="126" rx="10.3" ry="5.7" transform="rotate(19 517 126)" fill="#78b060" opacity="0.69"/>
<ellipse cx="502" cy="101" rx="5.5" ry="3.0" transform="rotate(-11 502 101)" fill="#3f7036" opacity="0.49"/>
<ellipse cx="459" cy="259" rx="9.6" ry="5.3" transform="rotate(-29 459 259)" fill="#98cc7c" opacity="0.73"/>
<ellipse cx="281" cy="229" rx="6.3" ry="3.5" transform="rotate(-1 281 229)" fill="#4d8440" opacity="0.70"/>
<ellipse cx="301" cy="102" rx="4.4" ry="2.4" transform="rotate(7 301 102)" fill="#2f5a2c" opacity="0.67"/>
<ellipse cx="326" cy="182" rx="6.4" ry="3.5" transform="rotate(3 326 182)" fill="#98cc7c" opacity="0.68"/>
<ellipse cx="324" cy="219" rx="5.5" ry="3.0" transform="rotate(15 324 219)" fill="#a4d488" opacity="0.46"/>
<ellipse cx="408" cy="135" rx="4.4" ry="2.4" transform="rotate(16 408 135)" fill="#5f9a4c" opacity="0.49"/>
<ellipse cx="293" cy="128" rx="10.7" ry="5.9" transform="rotate(-16 293 128)" fill="#4a803c" opacity="0.72"/>
<ellipse cx="369" cy="160" rx="8.6" ry="4.7" transform="rotate(-26 369 160)" fill="#5f9a4c" opacity="0.71"/>
<ellipse cx="429" cy="137" rx="10.8" ry="5.9" transform="rotate(-18 429 137)" fill="#2f5a2c" opacity="0.59"/>
<ellipse cx="316" cy="131" rx="6.0" ry="3.3" transform="rotate(-26 316 131)" fill="#3f7036" opacity="0.74"/>
<ellipse cx="412" cy="139" rx="5.4" ry="3.0" transform="rotate(19 412 139)" fill="#3f7036" opacity="0.56"/>
<ellipse cx="425" cy="198" rx="10.8" ry="5.9" transform="rotate(28 425 198)" fill="#4d8440" opacity="0.75"/>
<ellipse cx="364" cy="134" rx="9.8" ry="5.4" transform="rotate(-14 364 134)" fill="#a4d488" opacity="0.67"/>
<ellipse cx="445" cy="167" rx="6.2" ry="3.4" transform="rotate(-11 445 167)" fill="#98cc7c" opacity="0.49"/>
<ellipse cx="477" cy="196" rx="6.9" ry="3.8" transform="rotate(21 477 196)" fill="#4d8440" opacity="0.74"/>
<ellipse cx="487" cy="117" rx="10.0" ry="5.5" transform="rotate(19 487 117)" fill="#98cc7c" opacity="0.80"/>
<ellipse cx="403" cy="59" rx="6.4" ry="3.5" transform="rotate(0 403 59)" fill="#98cc7c" opacity="0.81"/>
<ellipse cx="547" cy="231" rx="7.7" ry="4.2" transform="rotate(2 547 231)" fill="#5f9a4c" opacity="0.61"/>
<ellipse cx="364" cy="188" rx="10.6" ry="5.8" transform="rotate(15 364 188)" fill="#3f7036" opacity="0.56"/>
<ellipse cx="500" cy="157" rx="9.4" ry="5.2" transform="rotate(-20 500 157)" fill="#4a803c" opacity="0.77"/>
<ellipse cx="507" cy="70" rx="4.1" ry="2.2" transform="rotate(16 507 70)" fill="#3f7036" opacity="0.68"/>
<ellipse cx="371" cy="42" rx="9.8" ry="5.4" transform="rotate(-1 371 42)" fill="#78b060" opacity="0.76"/>
<ellipse cx="320" cy="169" rx="10.4" ry="5.7" transform="rotate(-9 320 169)" fill="#98cc7c" opacity="0.70"/>
<ellipse cx="520" cy="149" rx="8.5" ry="4.7" transform="rotate(-30 520 149)" fill="#3f7036" opacity="0.55"/>
<ellipse cx="526" cy="126" rx="4.7" ry="2.6" transform="rotate(30 526 126)" fill="#8cc472" opacity="0.53"/>
<ellipse cx="394" cy="172" rx="8.5" ry="4.7" transform="rotate(18 394 172)" fill="#2f5a2c" opacity="0.48"/>
<ellipse cx="398" cy="130" rx="8.7" ry="4.8" transform="rotate(15 398 130)" fill="#3f7036" opacity="0.71"/>
<ellipse cx="463" cy="146" rx="5.0" ry="2.7" transform="rotate(8 463 146)" fill="#2f5a2c" opacity="0.60"/>
<ellipse cx="466" cy="220" rx="10.2" ry="5.6" transform="rotate(-5 466 220)" fill="#4d8440" opacity="0.68"/>
<ellipse cx="479" cy="90" rx="9.2" ry="5.0" transform="rotate(-15 479 90)" fill="#4d8440" opacity="0.49"/>
<ellipse cx="547" cy="221" rx="4.3" ry="2.3" transform="rotate(-5 547 221)" fill="#4d8440" opacity="0.55"/>
<ellipse cx="534" cy="89" rx="8.7" ry="4.8" transform="rotate(10 534 89)" fill="#a4d488" opacity="0.68"/>
<ellipse cx="382" cy="49" rx="7.3" ry="4.0" transform="rotate(18 382 49)" fill="#2f5a2c" opacity="0.83"/>
<ellipse cx="483" cy="239" rx="4.7" ry="2.6" transform="rotate(21 483 239)" fill="#8cc472" opacity="0.66"/>
<ellipse cx="441" cy="113" rx="7.6" ry="4.2" transform="rotate(28 441 113)" fill="#4a803c" opacity="0.80"/>
<ellipse cx="281" cy="47" rx="8.5" ry="4.7" transform="rotate(2 281 47)" fill="#78b060" opacity="0.67"/>
<ellipse cx="440" cy="218" rx="7.8" ry="4.3" transform="rotate(12 440 218)" fill="#4d8440" opacity="0.67"/>
<ellipse cx="346" cy="129" rx="4.1" ry="2.2" transform="rotate(-29 346 129)" fill="#3f7036" opacity="0.52"/>
<ellipse cx="409" cy="228" rx="5.5" ry="3.0" transform="rotate(12 409 228)" fill="#3f7036" opacity="0.62"/>
<ellipse cx="292" cy="260" rx="7.8" ry="4.3" transform="rotate(13 292 260)" fill="#98cc7c" opacity="0.49"/>
<ellipse cx="475" cy="231" rx="9.9" ry="5.5" transform="rotate(-25 475 231)" fill="#78b060" opacity="0.60"/>
<ellipse cx="349" cy="212" rx="5.0" ry="2.8" transform="rotate(19 349 212)" fill="#98cc7c" opacity="0.53"/>
<ellipse cx="283" cy="50" rx="8.8" ry="4.8" transform="rotate(3 283 50)" fill="#3f7036" opacity="0.60"/>
<ellipse cx="549" cy="248" rx="8.0" ry="4.4" transform="rotate(28 549 248)" fill="#3f7036" opacity="0.75"/>
<ellipse cx="266" cy="53" rx="9.1" ry="5.0" transform="rotate(24 266 53)" fill="#8cc472" opacity="0.81"/>
<ellipse cx="442" cy="106" rx="5.8" ry="3.2" transform="rotate(-14 442 106)" fill="#8cc472" opacity="0.77"/>
<ellipse cx="372" cy="76" rx="5.1" ry="2.8" transform="rotate(18 372 76)" fill="#2f5a2c" opacity="0.70"/>
<ellipse cx="481" cy="209" rx="6.3" ry="3.5" transform="rotate(-30 481 209)" fill="#3f7036" opacity="0.61"/>
<ellipse cx="266" cy="92" rx="10.2" ry="5.6" transform="rotate(-30 266 92)" fill="#98cc7c" opacity="0.76"/>
<ellipse cx="488" cy="240" rx="9.6" ry="5.3" transform="rotate(-20 488 240)" fill="#a4d488" opacity="0.49"/>
<ellipse cx="503" cy="111" rx="8.4" ry="4.6" transform="rotate(-26 503 111)" fill="#98cc7c" opacity="0.66"/>
<ellipse cx="544" cy="76" rx="7.7" ry="4.2" transform="rotate(-15 544 76)" fill="#a4d488" opacity="0.83"/>
<ellipse cx="380" cy="246" rx="8.8" ry="4.9" transform="rotate(11 380 246)" fill="#78b060" opacity="0.53"/>
<ellipse cx="344" cy="244" rx="4.1" ry="2.3" transform="rotate(-3 344 244)" fill="#5f9a4c" opacity="0.74"/>
<ellipse cx="551" cy="80" rx="7.1" ry="3.9" transform="rotate(14 551 80)" fill="#8cc472" opacity="0.83"/>
<ellipse cx="344" cy="128" rx="6.4" ry="3.5" transform="rotate(-25 344 128)" fill="#4d8440" opacity="0.73"/>
<ellipse cx="322" cy="98" rx="10.8" ry="5.9" transform="rotate(11 322 98)" fill="#8cc472" opacity="0.48"/>
<ellipse cx="280" cy="128" rx="4.5" ry="2.5" transform="rotate(4 280 128)" fill="#78b060" opacity="0.46"/>
<ellipse cx="366" cy="72" rx="4.8" ry="2.6" transform="rotate(11 366 72)" fill="#2f5a2c" opacity="0.84"/>
<ellipse cx="462" cy="102" rx="9.4" ry="5.2" transform="rotate(27 462 102)" fill="#8cc472" opacity="0.49"/>
<ellipse cx="349" cy="132" rx="8.8" ry="4.9" transform="rotate(16 349 132)" fill="#2f5a2c" opacity="0.80"/>
<ellipse cx="513" cy="144" rx="6.3" ry="3.4" transform="rotate(-29 513 144)" fill="#3f7036" opacity="0.61"/>
<ellipse cx="321" cy="119" rx="6.3" ry="3.5" transform="rotate(24 321 119)" fill="#4d8440" opacity="0.53"/>
<ellipse cx="526" cy="76" rx="8.6" ry="4.7" transform="rotate(12 526 76)" fill="#5f9a4c" opacity="0.56"/>
<ellipse cx="273" cy="148" rx="9.9" ry="5.4" transform="rotate(-6 273 148)" fill="#4d8440" opacity="0.55"/>
<ellipse cx="286" cy="171" rx="4.4" ry="2.4" transform="rotate(-30 286 171)" fill="#5f9a4c" opacity="0.56"/>
<ellipse cx="534" cy="251" rx="6.5" ry="3.6" transform="rotate(16 534 251)" fill="#a4d488" opacity="0.52"/>
<ellipse cx="369" cy="206" rx="6.6" ry="3.6" transform="rotate(3 369 206)" fill="#8cc472" opacity="0.72"/>
<ellipse cx="516" cy="245" rx="5.2" ry="2.8" transform="rotate(29 516 245)" fill="#4a803c" opacity="0.76"/>
<ellipse cx="326" cy="84" rx="5.5" ry="3.0" transform="rotate(24 326 84)" fill="#4a803c" opacity="0.60"/>
<ellipse cx="449" cy="146" rx="10.1" ry="5.5" transform="rotate(-24 449 146)" fill="#4d8440" opacity="0.72"/>
<ellipse cx="506" cy="93" rx="4.2" ry="2.3" transform="rotate(1 506 93)" fill="#2f5a2c" opacity="0.50"/>
<ellipse cx="395" cy="200" rx="4.7" ry="2.6" transform="rotate(1 395 200)" fill="#78b060" opacity="0.64"/>
<ellipse cx="311" cy="92" rx="7.1" ry="3.9" transform="rotate(-18 311 92)" fill="#78b060" opacity="0.48"/>
<ellipse cx="366" cy="146" rx="10.6" ry="5.8" transform="rotate(-27 366 146)" fill="#a4d488" opacity="0.48"/>
<ellipse cx="325" cy="207" rx="7.9" ry="4.4" transform="rotate(-23 325 207)" fill="#4a803c" opacity="0.47"/>
<ellipse cx="387" cy="53" rx="7.7" ry="4.2" transform="rotate(25 387 53)" fill="#a4d488" opacity="0.58"/>
<ellipse cx="290" cy="147" rx="7.3" ry="4.0" transform="rotate(20 290 147)" fill="#2f5a2c" opacity="0.74"/>
<ellipse cx="282" cy="142" rx="6.2" ry="3.4" transform="rotate(-13 282 142)" fill="#3f7036" opacity="0.72"/>
<ellipse cx="366" cy="67" rx="10.9" ry="6.0" transform="rotate(-14 366 67)" fill="#2f5a2c" opacity="0.52"/>
<ellipse cx="263" cy="187" rx="7.6" ry="4.2" transform="rotate(11 263 187)" fill="#4d8440" opacity="0.64"/>
<ellipse cx="478" cy="161" rx="5.6" ry="3.1" transform="rotate(12 478 161)" fill="#2f5a2c" opacity="0.69"/>
<ellipse cx="451" cy="73" rx="9.6" ry="5.3" transform="rotate(17 451 73)" fill="#98cc7c" opacity="0.47"/>
<ellipse cx="512" cy="188" rx="8.6" ry="4.7" transform="rotate(-29 512 188)" fill="#3f7036" opacity="0.69"/>
<ellipse cx="324" cy="48" rx="7.1" ry="3.9" transform="rotate(23 324 48)" fill="#8cc472" opacity="0.53"/>
<ellipse cx="480" cy="171" rx="10.6" ry="5.8" transform="rotate(-29 480 171)" fill="#4a803c" opacity="0.72"/>
<ellipse cx="264" cy="253" rx="5.6" ry="3.1" transform="rotate(-7 264 253)" fill="#2f5a2c" opacity="0.65"/>
<ellipse cx="539" cy="151" rx="10.9" ry="6.0" transform="rotate(-18 539 151)" fill="#3f7036" opacity="0.78"/>
<ellipse cx="319" cy="265" rx="7.2" ry="4.0" transform="rotate(18 319 265)" fill="#3f7036" opacity="0.58"/>
<ellipse cx="380" cy="117" rx="8.7" ry="4.8" transform="rotate(6 380 117)" fill="#4d8440" opacity="0.60"/>
<ellipse cx="308" cy="226" rx="4.0" ry="2.2" transform="rotate(8 308 226)" fill="#5f9a4c" opacity="0.63"/>
<ellipse cx="425" cy="200" rx="5.0" ry="2.7" transform="rotate(5 425 200)" fill="#3f7036" opacity="0.50"/>
<ellipse cx="542" cy="74" rx="5.0" ry="2.7" transform="rotate(-22 542 74)" fill="#a4d488" opacity="0.68"/>
<ellipse cx="329" cy="78" rx="8.1" ry="4.5" transform="rotate(20 329 78)" fill="#2f5a2c" opacity="0.61"/>
<ellipse cx="521" cy="189" rx="10.0" ry="5.5" transform="rotate(30 521 189)" fill="#5f9a4c" opacity="0.73"/>
<ellipse cx="288" cy="138" rx="9.7" ry="5.4" transform="rotate(27 288 138)" fill="#4d8440" opacity="0.57"/>
<ellipse cx="345" cy="258" rx="10.1" ry="5.6" transform="rotate(-26 345 258)" fill="#4a803c" opacity="0.66"/>
<ellipse cx="510" cy="222" rx="8.6" ry="4.7" transform="rotate(7 510 222)" fill="#a4d488" opacity="0.50"/>
<ellipse cx="332" cy="188" rx="8.1" ry="4.5" transform="rotate(27 332 188)" fill="#98cc7c" opacity="0.66"/>
<ellipse cx="424" cy="138" rx="8.1" ry="4.5" transform="rotate(6 424 138)" fill="#5f9a4c" opacity="0.60"/>
<ellipse cx="513" cy="255" rx="8.5" ry="4.7" transform="rotate(-7 513 255)" fill="#4a803c" opacity="0.83"/>
<ellipse cx="336" cy="225" rx="8.9" ry="4.9" transform="rotate(9 336 225)" fill="#4d8440" opacity="0.72"/>
<ellipse cx="322" cy="114" rx="10.4" ry="5.7" transform="rotate(0 322 114)" fill="#2f5a2c" opacity="0.59"/>
<ellipse cx="484" cy="255" rx="10.2" ry="5.6" transform="rotate(-10 484 255)" fill="#2f5a2c" opacity="0.76"/>
<ellipse cx="328" cy="137" rx="10.7" ry="5.9" transform="rotate(4 328 137)" fill="#3f7036" opacity="0.61"/>
<ellipse cx="543" cy="243" rx="5.6" ry="3.1" transform="rotate(-6 543 243)" fill="#98cc7c" opacity="0.72"/>
<ellipse cx="325" cy="88" rx="5.9" ry="3.2" transform="rotate(2 325 88)" fill="#4d8440" opacity="0.50"/>
<ellipse cx="379" cy="135" rx="4.5" ry="2.5" transform="rotate(30 379 135)" fill="#2f5a2c" opacity="0.58"/>
<ellipse cx="420" cy="118" rx="9.3" ry="5.1" transform="rotate(-19 420 118)" fill="#98cc7c" opacity="0.77"/>
<ellipse cx="464" cy="192" rx="9.5" ry="5.2" transform="rotate(-7 464 192)" fill="#4a803c" opacity="0.50"/>
<ellipse cx="445" cy="106" rx="7.9" ry="4.3" transform="rotate(10 445 106)" fill="#3f7036" opacity="0.55"/>
<ellipse cx="434" cy="213" rx="6.6" ry="3.6" transform="rotate(11 434 213)" fill="#5f9a4c" opacity="0.55"/>
<ellipse cx="502" cy="175" rx="9.9" ry="5.5" transform="rotate(-18 502 175)" fill="#4d8440" opacity="0.81"/>
<ellipse cx="435" cy="133" rx="7.9" ry="4.4" transform="rotate(-26 435 133)" fill="#4d8440" opacity="0.77"/>
<ellipse cx="333" cy="79" rx="5.2" ry="2.9" transform="rotate(-29 333 79)" fill="#3f7036" opacity="0.46"/>
<ellipse cx="284" cy="60" rx="5.4" ry="3.0" transform="rotate(-9 284 60)" fill="#2f5a2c" opacity="0.48"/>
<ellipse cx="363" cy="106" rx="9.2" ry="5.1" transform="rotate(-9 363 106)" fill="#5f9a4c" opacity="0.47"/>
<ellipse cx="285" cy="77" rx="4.6" ry="2.6" transform="rotate(14 285 77)" fill="#4d8440" opacity="0.84"/>
<ellipse cx="299" cy="235" rx="6.3" ry="3.5" transform="rotate(1 299 235)" fill="#a4d488" opacity="0.51"/>
<ellipse cx="438" cy="263" rx="9.6" ry="5.3" transform="rotate(23 438 263)" fill="#8cc472" opacity="0.73"/>
<ellipse cx="373" cy="201" rx="5.6" ry="3.1" transform="rotate(21 373 201)" fill="#78b060" opacity="0.64"/>
<ellipse cx="279" cy="74" rx="9.6" ry="5.3" transform="rotate(21 279 74)" fill="#2f5a2c" opacity="0.64"/>
<ellipse cx="500" cy="180" rx="9.8" ry="5.4" transform="rotate(6 500 180)" fill="#2f5a2c" opacity="0.62"/>
<ellipse cx="264" cy="250" rx="5.5" ry="3.0" transform="rotate(-15 264 250)" fill="#2f5a2c" opacity="0.75"/>
<ellipse cx="407" cy="157" rx="6.3" ry="3.5" transform="rotate(-29 407 157)" fill="#4d8440" opacity="0.54"/>
<ellipse cx="267" cy="155" rx="5.5" ry="3.0" transform="rotate(9 267 155)" fill="#2f5a2c" opacity="0.53"/>
<ellipse cx="314" cy="262" rx="11.0" ry="6.0" transform="rotate(-22 314 262)" fill="#5f9a4c" opacity="0.51"/>
<ellipse cx="327" cy="214" rx="9.8" ry="5.4" transform="rotate(-5 327 214)" fill="#5f9a4c" opacity="0.58"/>
<ellipse cx="274" cy="156" rx="5.1" ry="2.8" transform="rotate(-1 274 156)" fill="#3f7036" opacity="0.46"/>
<ellipse cx="354" cy="217" rx="9.0" ry="5.0" transform="rotate(13 354 217)" fill="#98cc7c" opacity="0.74"/>
<ellipse cx="416" cy="214" rx="4.7" ry="2.6" transform="rotate(9 416 214)" fill="#78b060" opacity="0.60"/>
<ellipse cx="402" cy="97" rx="8.7" ry="4.8" transform="rotate(-2 402 97)" fill="#3f7036" opacity="0.58"/>
<ellipse cx="400" cy="200" rx="9.4" ry="5.2" transform="rotate(4 400 200)" fill="#98cc7c" opacity="0.63"/>
<ellipse cx="533" cy="250" rx="8.3" ry="4.6" transform="rotate(19 533 250)" fill="#78b060" opacity="0.63"/>
<ellipse cx="447" cy="103" rx="4.3" ry="2.3" transform="rotate(-22 447 103)" fill="#a4d488" opacity="0.48"/>
<ellipse cx="453" cy="232" rx="8.6" ry="4.7" transform="rotate(-3 453 232)" fill="#98cc7c" opacity="0.66"/>
<ellipse cx="303" cy="197" rx="9.0" ry="5.0" transform="rotate(-28 303 197)" fill="#4d8440" opacity="0.57"/>
<ellipse cx="486" cy="70" rx="4.7" ry="2.6" transform="rotate(-10 486 70)" fill="#78b060" opacity="0.52"/>
<ellipse cx="416" cy="227" rx="5.2" ry="2.9" transform="rotate(-6 416 227)" fill="#8cc472" opacity="0.76"/>
<ellipse cx="385" cy="116" rx="4.9" ry="2.7" transform="rotate(-1 385 116)" fill="#3f7036" opacity="0.84"/>
<ellipse cx="294" cy="98" rx="9.2" ry="5.1" transform="rotate(0 294 98)" fill="#4a803c" opacity="0.54"/>
<ellipse cx="314" cy="222" rx="9.3" ry="5.1" transform="rotate(15 314 222)" fill="#4a803c" opacity="0.53"/>
<ellipse cx="491" cy="209" rx="10.4" ry="5.7" transform="rotate(-24 491 209)" fill="#2f5a2c" opacity="0.80"/>
<ellipse cx="411" cy="220" rx="4.2" ry="2.3" transform="rotate(0 411 220)" fill="#a4d488" opacity="0.78"/>
<ellipse cx="464" cy="260" rx="8.3" ry="4.6" transform="rotate(-19 464 260)" fill="#98cc7c" opacity="0.74"/>
<ellipse cx="510" cy="194" rx="8.6" ry="4.7" transform="rotate(22 510 194)" fill="#4d8440" opacity="0.45"/>
<ellipse cx="328" cy="117" rx="9.5" ry="5.2" transform="rotate(8 328 117)" fill="#5f9a4c" opacity="0.47"/>
<ellipse cx="271" cy="264" rx="5.6" ry="3.1" transform="rotate(22 271 264)" fill="#98cc7c" opacity="0.80"/>
<ellipse cx="539" cy="108" rx="8.3" ry="4.6" transform="rotate(-6 539 108)" fill="#4a803c" opacity="0.56"/>
<ellipse cx="459" cy="210" rx="9.4" ry="5.2" transform="rotate(22 459 210)" fill="#3f7036" opacity="0.82"/>
<ellipse cx="496" cy="263" rx="9.1" ry="5.0" transform="rotate(22 496 263)" fill="#8cc472" opacity="0.57"/>
<ellipse cx="408" cy="113" rx="7.1" ry="3.9" transform="rotate(-22 408 113)" fill="#5f9a4c" opacity="0.55"/>
<ellipse cx="470" cy="191" rx="4.4" ry="2.4" transform="rotate(24 470 191)" fill="#8cc472" opacity="0.58"/>
<ellipse cx="488" cy="233" rx="10.7" ry="5.9" transform="rotate(11 488 233)" fill="#a4d488" opacity="0.81"/>
<ellipse cx="493" cy="230" rx="10.9" ry="6.0" transform="rotate(0 493 230)" fill="#98cc7c" opacity="0.76"/>
<ellipse cx="490" cy="236" rx="5.5" ry="3.0" transform="rotate(-7 490 236)" fill="#98cc7c" opacity="0.55"/>
<ellipse cx="290" cy="114" rx="4.2" ry="2.3" transform="rotate(-16 290 114)" fill="#4d8440" opacity="0.60"/>
<ellipse cx="441" cy="152" rx="4.4" ry="2.4" transform="rotate(10 441 152)" fill="#2f5a2c" opacity="0.61"/>
<ellipse cx="496" cy="255" rx="6.2" ry="3.4" transform="rotate(-10 496 255)" fill="#2f5a2c" opacity="0.81"/>
<ellipse cx="476" cy="110" rx="10.1" ry="5.6" transform="rotate(8 476 110)" fill="#78b060" opacity="0.68"/>
<ellipse cx="504" cy="157" rx="7.4" ry="4.1" transform="rotate(-30 504 157)" fill="#4a803c" opacity="0.80"/>
<ellipse cx="456" cy="87" rx="6.5" ry="3.6" transform="rotate(29 456 87)" fill="#98cc7c" opacity="0.83"/>
<ellipse cx="434" cy="137" rx="9.0" ry="5.0" transform="rotate(-25 434 137)" fill="#4a803c" opacity="0.52"/>
<ellipse cx="346" cy="156" rx="9.2" ry="5.1" transform="rotate(-16 346 156)" fill="#78b060" opacity="0.77"/>
<ellipse cx="368" cy="252" rx="9.2" ry="5.0" transform="rotate(-6 368 252)" fill="#8cc472" opacity="0.70"/>
<ellipse cx="283" cy="134" rx="6.3" ry="3.5" transform="rotate(2 283 134)" fill="#98cc7c" opacity="0.74"/>
<ellipse cx="315" cy="163" rx="7.5" ry="4.1" transform="rotate(8 315 163)" fill="#8cc472" opacity="0.83"/>
<ellipse cx="554" cy="166" rx="9.6" ry="5.3" transform="rotate(-29 554 166)" fill="#8cc472" opacity="0.81"/>
<ellipse cx="422" cy="211" rx="10.1" ry="5.5" transform="rotate(-27 422 211)" fill="#98cc7c" opacity="0.82"/>
<ellipse cx="321" cy="45" rx="7.5" ry="4.1" transform="rotate(2 321 45)" fill="#3f7036" opacity="0.63"/>
<ellipse cx="305" cy="88" rx="5.1" ry="2.8" transform="rotate(21 305 88)" fill="#2f5a2c" opacity="0.46"/>
<ellipse cx="540" cy="215" rx="18" ry="42" fill="#1d2a1c" opacity="0.85"/>
<ellipse cx="500" cy="240" rx="22" ry="12" fill="#1d2a1c" opacity="0.85"/>
<ellipse cx="455" cy="250" rx="25" ry="10" fill="#1d2a1c" opacity="0.85"/>
<ellipse cx="415" cy="200" rx="12" ry="22" fill="#1d2a1c" opacity="0.85"/>
<ellipse cx="552" cy="150" rx="8" ry="30" fill="#1d2a1c" opacity="0.85"/>
</g>
<g filter="url(#b2)">
<circle cx="421" cy="62" r="6.6" fill="#b9cdb5" opacity="0.7"/>
<circle cx="465" cy="46" r="5.8" fill="#a9c2a4" opacity="0.7"/>
<circle cx="519" cy="72" r="8.4" fill="#b9cdb5" opacity="0.7"/>
<circle cx="515" cy="21" r="4.5" fill="#eef3ee" opacity="0.7"/>
<circle cx="527" cy="21" r="4.0" fill="#b9cdb5" opacity="0.7"/>
<circle cx="550" cy="65" r="3.7" fill="#dfe8dd" opacity="0.7"/>
<circle cx="510" cy="64" r="4.6" fill="#dfe8dd" opacity="0.7"/>
<circle cx="542" cy="5" r="8.7" fill="#dfe8dd" opacity="0.7"/>
<circle cx="534" cy="78" r="8.4" fill="#eef3ee" opacity="0.7"/>
<circle cx="504" cy="13" r="5.8" fill="#b9cdb5" opacity="0.7"/>
<circle cx="554" cy="30" r="7.6" fill="#b9cdb5" opacity="0.7"/>
<circle cx="553" cy="20" r="8.2" fill="#9cb896" opacity="0.7"/>
<circle cx="495" cy="27" r="4.0" fill="#b9cdb5" opacity="0.7"/>
<circle cx="469" cy="13" r="6.5" fill="#a9c2a4" opacity="0.7"/>
<circle cx="478" cy="17" r="5.9" fill="#dfe8dd" opacity="0.7"/>
<circle cx="518" cy="53" r="5.8" fill="#9cb896" opacity="0.7"/>
<circle cx="473" cy="18" r="6.6" fill="#b9cdb5" opacity="0.7"/>
<circle cx="477" cy="21" r="5.1" fill="#dfe8dd" opacity="0.7"/>
<circle cx="549" cy="36" r="5.1" fill="#dfe8dd" opacity="0.7"/>
<circle cx="452" cy="63" r="8.0" fill="#b9cdb5" opacity="0.7"/>
<circle cx="472" cy="75" r="6.3" fill="#a9c2a4" opacity="0.7"/>
<circle cx="531" cy="66" r="5.1" fill="#dfe8dd" opacity="0.7"/>
<circle cx="547" cy="56" r="3.9" fill="#a9c2a4" opacity="0.7"/>
<circle cx="546" cy="13" r="5.2" fill="#dfe8dd" opacity="0.7"/>
<circle cx="522" cy="53" r="7.1" fill="#9cb896" opacity="0.7"/>
<circle cx="523" cy="14" r="6.3" fill="#b9cdb5" opacity="0.7"/>
<circle cx="444" cy="12" r="8.4" fill="#a9c2a4" opacity="0.7"/>
<circle cx="495" cy="73" r="5.6" fill="#9cb896" opacity="0.7"/>
<circle cx="456" cy="81" r="5.1" fill="#eef3ee" opacity="0.7"/>
<circle cx="522" cy="29" r="8.6" fill="#a9c2a4" opacity="0.7"/>
<circle cx="451" cy="35" r="6.7" fill="#9cb896" opacity="0.7"/>
<circle cx="403" cy="72" r="3.4" fill="#eef3ee" opacity="0.7"/>
<circle cx="402" cy="80" r="4.7" fill="#dfe8dd" opacity="0.7"/>
<circle cx="425" cy="62" r="3.1" fill="#b9cdb5" opacity="0.7"/>
<circle cx="432" cy="66" r="3.8" fill="#9cb896" opacity="0.7"/>
<circle cx="435" cy="5" r="4.6" fill="#a9c2a4" opacity="0.7"/>
<circle cx="546" cy="50" r="8.5" fill="#a9c2a4" opacity="0.7"/>
<circle cx="519" cy="13" r="8.0" fill="#a9c2a4" opacity="0.7"/>
<circle cx="515" cy="77" r="5.3" fill="#a9c2a4" opacity="0.7"/>
<circle cx="497" cy="64" r="4.1" fill="#b9cdb5" opacity="0.7"/>
<circle cx="550" cy="3" r="3.3" fill="#a9c2a4" opacity="0.7"/>
<circle cx="406" cy="30" r="7.2" fill="#b9cdb5" opacity="0.7"/>
<circle cx="417" cy="15" r="4.1" fill="#eef3ee" opacity="0.7"/>
<circle cx="455" cy="85" r="4.2" fill="#a9c2a4" opacity="0.7"/>
<circle cx="551" cy="39" r="5.3" fill="#9cb896" opacity="0.7"/>
<circle cx="469" cy="43" r="3.1" fill="#b9cdb5" opacity="0.7"/>
<circle cx="425" cy="80" r="7.8" fill="#a9c2a4" opacity="0.7"/>
<circle cx="469" cy="56" r="8.4" fill="#dfe8dd" opacity="0.7"/>
<circle cx="484" cy="80" r="3.1" fill="#dfe8dd" opacity="0.7"/>
<circle cx="536" cy="54" r="5.0" fill="#dfe8dd" opacity="0.7"/>
<circle cx="479" cy="13" r="3.3" fill="#eef3ee" opacity="0.7"/>
<circle cx="480" cy="45" r="7.1" fill="#b9cdb5" opacity="0.7"/>
<circle cx="506" cy="0" r="7.8" fill="#eef3ee" opacity="0.7"/>
<circle cx="545" cy="76" r="5.2" fill="#b9cdb5" opacity="0.7"/>
<circle cx="488" cy="66" r="5.5" fill="#dfe8dd" opacity="0.7"/>
<circle cx="547" cy="84" r="6.7" fill="#9cb896" opacity="0.7"/>
<circle cx="538" cy="17" r="9.0" fill="#b9cdb5" opacity="0.7"/>
<circle cx="522" cy="71" r="7.9" fill="#eef3ee" opacity="0.7"/>
<circle cx="506" cy="29" r="7.5" fill="#9cb896" opacity="0.7"/>
<circle cx="523" cy="30" r="6.4" fill="#eef3ee" opacity="0.7"/>
<circle cx="475" cy="25" r="8.5" fill="#a9c2a4" opacity="0.7"/>
<circle cx="476" cy="75" r="3.3" fill="#dfe8dd" opacity="0.7"/>
<circle cx="517" cy="52" r="8.4" fill="#eef3ee" opacity="0.7"/>
<circle cx="478" cy="63" r="3.0" fill="#eef3ee" opacity="0.7"/>
<circle cx="520" cy="9" r="4.7" fill="#a9c2a4" opacity="0.7"/>
<circle cx="493" cy="39" r="8.3" fill="#9cb896" opacity="0.7"/>
<circle cx="413" cy="40" r="5.2" fill="#a9c2a4" opacity="0.7"/>
<circle cx="476" cy="65" r="4.3" fill="#9cb896" opacity="0.7"/>
<circle cx="443" cy="33" r="8.5" fill="#eef3ee" opacity="0.7"/>
<circle cx="554" cy="38" r="6.4" fill="#9cb896" opacity="0.7"/>
</g>
<g filter="url(#b1)">
<path d="M444 0 Q452 18 470 38 Q488 58 492 68 Q510 84 540 92 L554 100 L554 86 Q530 78 512 66 Q500 50 486 34 Q468 14 458 0Z" fill="#4a4652"/>
<path d="M538 0 Q546 30 554 70 L554 0Z" fill="#5a5a6a"/>
<path d="M440 0 Q436 30 440 60" stroke="#6a7a3a" stroke-width="1.2" fill="none"/>
</g>
<g filter="url(#b4)">
<path d="M60 200 Q120 170 200 165 L215 240 L130 285 L60 285Z" fill="#86a47a"/>
<ellipse cx="150" cy="225" rx="45" ry="45" fill="#7f9f74"/>
<ellipse cx="60" cy="180" rx="55" ry="14" fill="#a9c19e"/>
</g>
<g filter="url(#b2)">
<rect x="-5" y="212" width="70" height="52" fill="#3a3d38"/>
<rect x="-5" y="202" width="130" height="9" fill="#6d727a"/>
<rect x="-5" y="262" width="140" height="36" fill="#bfc5cc"/>
<rect x="-5" y="296" width="60" height="30" fill="#a8b98a"/>
<ellipse cx="78" cy="250" rx="36" ry="34" fill="#86ad6e"/>
<ellipse cx="70" cy="235" rx="20" ry="16" fill="#97be7e"/>
<ellipse cx="95" cy="265" rx="14" ry="14" fill="#6f965c"/>
<rect x="40" y="215" width="9" height="40" fill="#9a7a62" opacity="0.8"/>
<path d="M22 220 L30 220 L20 318 L12 318Z" fill="#d9dde2"/>
<rect x="2" y="250" width="12" height="12" fill="#d9c9c9"/>
<path d="M138 170 Q142 210 150 262 M160 168 Q166 210 176 250 M120 180 Q112 200 108 215" stroke="#8a8878" stroke-width="3" fill="none" opacity=".7"/>
<ellipse cx="130" cy="275" rx="22" ry="14" fill="#9ab58c"/>
<ellipse cx="107" cy="201" rx="4.1" ry="2.9" fill="#86a870" opacity="0.88"/>
<ellipse cx="29" cy="200" rx="5.7" ry="4.0" fill="#7fa268" opacity="0.52"/>
<ellipse cx="208" cy="186" rx="5.5" ry="3.8" fill="#5f8a50" opacity="0.64"/>
<ellipse cx="182" cy="201" rx="3.5" ry="2.5" fill="#6f965c" opacity="0.68"/>
<ellipse cx="25" cy="164" rx="5.7" ry="4.0" fill="#6f965c" opacity="0.59"/>
<ellipse cx="134" cy="202" rx="2.8" ry="2.0" fill="#7fa268" opacity="0.64"/>
<ellipse cx="197" cy="169" rx="3.0" ry="2.1" fill="#6f965c" opacity="0.76"/>
<ellipse cx="179" cy="172" rx="3.2" ry="2.2" fill="#5f8a50" opacity="0.69"/>
<ellipse cx="169" cy="172" rx="6.2" ry="4.3" fill="#5f8a50" opacity="0.56"/>
<ellipse cx="209" cy="174" rx="6.5" ry="4.5" fill="#6f965c" opacity="0.75"/>
<ellipse cx="121" cy="201" rx="4.3" ry="3.0" fill="#6f965c" opacity="0.67"/>
<ellipse cx="109" cy="175" rx="2.7" ry="1.9" fill="#86a870" opacity="0.59"/>
<ellipse cx="108" cy="200" rx="6.3" ry="4.4" fill="#7fa268" opacity="0.56"/>
<ellipse cx="150" cy="187" rx="4.1" ry="2.9" fill="#5f8a50" opacity="0.87"/>
<ellipse cx="191" cy="183" rx="6.2" ry="4.4" fill="#7fa268" opacity="0.54"/>
<ellipse cx="115" cy="207" rx="3.8" ry="2.7" fill="#7fa268" opacity="0.85"/>
<ellipse cx="90" cy="206" rx="6.4" ry="4.5" fill="#5f8a50" opacity="0.70"/>
<ellipse cx="74" cy="176" rx="4.8" ry="3.4" fill="#5f8a50" opacity="0.63"/>
<ellipse cx="25" cy="170" rx="3.0" ry="2.1" fill="#7fa268" opacity="0.68"/>
<ellipse cx="90" cy="197" rx="6.3" ry="4.4" fill="#7fa268" opacity="0.69"/>
<ellipse cx="197" cy="169" rx="6.3" ry="4.4" fill="#5f8a50" opacity="0.64"/>
<ellipse cx="135" cy="174" rx="6.4" ry="4.5" fill="#5f8a50" opacity="0.78"/>
<ellipse cx="131" cy="180" rx="3.3" ry="2.3" fill="#6f965c" opacity="0.58"/>
<ellipse cx="116" cy="166" rx="5.8" ry="4.1" fill="#6f965c" opacity="0.77"/>
<ellipse cx="196" cy="208" rx="5.2" ry="3.6" fill="#6f965c" opacity="0.61"/>
<ellipse cx="205" cy="164" rx="3.6" ry="2.5" fill="#6f965c" opacity="0.71"/>
<ellipse cx="87" cy="194" rx="4.6" ry="3.2" fill="#5f8a50" opacity="0.51"/>
<ellipse cx="59" cy="169" rx="5.8" ry="4.1" fill="#6f965c" opacity="0.58"/>
<ellipse cx="43" cy="188" rx="5.5" ry="3.8" fill="#7fa268" opacity="0.77"/>
<ellipse cx="93" cy="208" rx="2.6" ry="1.8" fill="#86a870" opacity="0.54"/>
<ellipse cx="162" cy="173" rx="3.1" ry="2.2" fill="#7fa268" opacity="0.85"/>
<ellipse cx="24" cy="161" rx="2.7" ry="1.9" fill="#86a870" opacity="0.75"/>
<ellipse cx="144" cy="168" rx="5.4" ry="3.8" fill="#5f8a50" opacity="0.64"/>
<ellipse cx="191" cy="172" rx="3.1" ry="2.1" fill="#5f8a50" opacity="0.56"/>
<ellipse cx="41" cy="198" rx="3.0" ry="2.1" fill="#7fa268" opacity="0.70"/>
<ellipse cx="129" cy="187" rx="4.2" ry="2.9" fill="#6f965c" opacity="0.79"/>
<ellipse cx="65" cy="167" rx="6.2" ry="4.3" fill="#6f965c" opacity="0.60"/>
<ellipse cx="177" cy="172" rx="2.9" ry="2.0" fill="#86a870" opacity="0.74"/>
<ellipse cx="102" cy="183" rx="2.7" ry="1.9" fill="#6f965c" opacity="0.68"/>
<ellipse cx="116" cy="204" rx="4.9" ry="3.4" fill="#5f8a50" opacity="0.58"/>
<ellipse cx="69" cy="197" rx="5.5" ry="3.9" fill="#7fa268" opacity="0.76"/>
<ellipse cx="100" cy="175" rx="4.5" ry="3.2" fill="#86a870" opacity="0.60"/>
<ellipse cx="49" cy="175" rx="3.8" ry="2.7" fill="#6f965c" opacity="0.78"/>
<ellipse cx="101" cy="168" rx="2.7" ry="1.9" fill="#6f965c" opacity="0.90"/>
<ellipse cx="160" cy="196" rx="5.8" ry="4.0" fill="#6f965c" opacity="0.61"/>
<ellipse cx="28" cy="162" rx="4.6" ry="3.2" fill="#5f8a50" opacity="0.70"/>
<ellipse cx="52" cy="192" rx="4.2" ry="3.0" fill="#86a870" opacity="0.54"/>
<ellipse cx="191" cy="160" rx="3.4" ry="2.4" fill="#86a870" opacity="0.54"/>
<ellipse cx="98" cy="186" rx="3.7" ry="2.6" fill="#7fa268" opacity="0.63"/>
<ellipse cx="71" cy="192" rx="3.4" ry="2.4" fill="#86a870" opacity="0.67"/>
<ellipse cx="180" cy="163" rx="2.8" ry="2.0" fill="#6f965c" opacity="0.72"/>
<ellipse cx="208" cy="204" rx="2.9" ry="2.0" fill="#86a870" opacity="0.60"/>
<ellipse cx="39" cy="204" rx="4.8" ry="3.3" fill="#86a870" opacity="0.62"/>
<ellipse cx="197" cy="199" rx="4.4" ry="3.1" fill="#5f8a50" opacity="0.53"/>
<ellipse cx="103" cy="192" rx="2.6" ry="1.8" fill="#5f8a50" opacity="0.73"/>
<ellipse cx="205" cy="162" rx="5.4" ry="3.8" fill="#6f965c" opacity="0.55"/>
<ellipse cx="81" cy="163" rx="4.8" ry="3.4" fill="#7fa268" opacity="0.64"/>
<ellipse cx="152" cy="178" rx="5.3" ry="3.7" fill="#7fa268" opacity="0.56"/>
<ellipse cx="103" cy="169" rx="3.0" ry="2.1" fill="#86a870" opacity="0.85"/>
<ellipse cx="141" cy="167" rx="6.0" ry="4.2" fill="#6f965c" opacity="0.55"/>
</g>
<g filter="url(#b1)">
<path d="M8 322 Q60 295 120 268 Q160 250 196 236 L262 210 L311 234 L342 218 L392 228 Q470 244 556 262 L556 322Z" fill="#f3f4f6"/>
<path d="M150 256 Q146 290 150 322 L140 322 Q138 290 142 258Z" fill="#e2e4ea" opacity="0.8"/>
<path d="M392 228 Q400 270 396 322 L404 322 Q410 270 400 230Z" fill="#e4e6ec" opacity="0.8"/>
<path d="M262 214 L311 246 L307 320 L321 320 L319 250 L342 222 L356 274 L330 244 L311 252 L276 246Z" fill="#e4e6ec" opacity="0.7"/>
</g>
<g filter="url(#b1)">
<path d="M268 170 L334 150 L340 222 L311 240 L266 214Z" fill="#e3bba6"/>
<path d="M268 190 Q300 205 336 180 L338 205 Q300 222 266 206Z" fill="#cfa08a" opacity="0.6"/>
<path d="M262 86 Q290 62 322 84 Q336 110 330 150 Q322 182 292 192 Q268 194 254 176 Q238 150 240 122 Q244 98 262 86Z" fill="#f1d2c2"/>
<ellipse cx="286" cy="128" rx="22" ry="26" fill="#f6dccf" opacity="0.8"/>
<path d="M240 111 Q247 106 254 109" stroke="#3a2622" stroke-width="2" fill="none"/>
<ellipse cx="246" cy="121" rx="5" ry="3" fill="#2a1a18"/>
<path d="M268 101 Q281 92 295 99" stroke="#3a2622" stroke-width="2.2" fill="none"/>
<path d="M272 113 Q283 104 293 108 Q284 116 272 113Z" fill="#2a1a18"/>
<path d="M255 158 Q272 160 290 150 Q286 170 268 172 Q258 170 255 158Z" fill="#b8453f"/>
<path d="M258 160 Q272 162 287 154 Q284 164 268 167 Q261 166 258 160Z" fill="#fbf6f2"/>
<path d="M258 140 Q262 146 270 144" stroke="#c99a86" stroke-width="1.6" fill="none"/>
</g>
<g filter="url(#b1)">
<path d="M258 86 Q276 60 304 61 Q334 64 350 92 Q362 116 374 140 Q388 160 392 184 Q400 206 394 226 Q398 250 388 266 Q380 284 366 288 Q356 280 352 262 Q344 246 342 228 Q334 210 332 192 Q326 176 330 150 Q334 112 318 90 Q296 74 258 86Z" fill="url(#hairg)"/>
<path d="M245 108 Q239 140 249 168 Q258 184 272 192 Q282 212 273 236 Q272 258 262 276 Q254 294 244 282 Q234 268 228 252 Q210 244 198 232 Q190 214 202 196 Q206 176 218 164 Q230 144 238 108Z" fill="url(#hairg)"/>
<path d="M352 120 Q372 170 370 220 Q372 250 360 276" stroke="#6a433a" stroke-width="5" fill="none" opacity="0.55"/>
<path d="M226 180 Q220 215 236 250" stroke="#6a433a" stroke-width="4" fill="none" opacity="0.5"/>
<path d="M340 100 Q356 130 352 160 Q364 190 356 220 Q366 250 356 278" stroke="#6e463c" stroke-width="4" fill="none" opacity="0.45"/>
<path d="M376 160 Q388 190 380 220 Q390 250 376 276" stroke="#241614" stroke-width="4" fill="none" opacity="0.5"/>
<path d="M244 200 Q256 225 246 250 Q250 268 244 280" stroke="#241614" stroke-width="4" fill="none" opacity="0.5"/>
<path d="M210 200 Q202 220 214 240" stroke="#6e463c" stroke-width="3.5" fill="none" opacity="0.45"/>
</g>
</svg></div>
<div class="t h1" style="top:382.1px;letter-spacing:2.75px">Remove</div>
<div class="t h1" style="top:470.7px;letter-spacing:3.47px">background</div>
<!-- text cursor -->
<svg style="left:837px;top:447px" width="9" height="18" viewBox="0 0 9 18"><path d="M1.5 .5 Q4 .5 4.5 2 Q5 .5 7.5 .5 M4.5 2 V16 M1.5 17.5 Q4 17.5 4.5 16 Q5 17.5 7.5 17.5" stroke="#222" stroke-width="1" fill="none"/></svg>

<div class="abs upload"></div>
<svg style="left:400px;top:730px" width="32" height="32" viewBox="0 0 32 32"><path d="M16 2.2 V24 M5.3 13.4 L16 2.2 L26.7 13.4 M2 29.2 H30" stroke="#fff" stroke-width="1.5" fill="none"/></svg>
<div class="t big" style="left:459.5px;top:729.8px;color:#fff;letter-spacing:1.25px;-webkit-text-stroke:.35px #fff">Upload file</div>
<svg style="left:727px;top:705px" width="370" height="80" viewBox="0 0 370 80"><rect x="1" y="1" width="368" height="78" rx="6" fill="none" stroke="#5562d8" stroke-width="2" stroke-dasharray="6 3.2"/></svg>
<div class="t big" style="left:792.3px;top:728.8px;color:#6470dd;letter-spacing:1.0px">or Drag file here</div>
<div class="t fmt" style="left:391px;top:826.2px;letter-spacing:.187px">Supported formats: .mp4, .mov, .ts, .avi, .mkv, .webm, .mpg, .jpg, .png</div>
<div class="t fmt" style="left:537.5px;top:854.2px;letter-spacing:.5px">Best solution for portrait video/photo</div>

<div class="abs scroll"></div>
<div class="abs sthumb"></div>
<svg style="left:1423px;top:67px" width="17" height="17" viewBox="0 0 17 17"><path d="M4.8 11 L8.5 6.8 L12.2 11Z" fill="#a3a3a3"/></svg>
<svg style="left:1423px;top:843px" width="17" height="17" viewBox="0 0 17 17"><path d="M4.5 6.5 L8.5 11 L12.5 6.5Z" fill="#505050"/></svg>
<!-- CHROME -->
<div class="abs tabbar"></div>
<div class="abs tab-active"></div>
<div class="abs toolbar"></div>
<div class="abs toolline"></div>
<div class="abs urlbar"></div>
<div class="abs tsep" style="left:239px"></div>
<div class="abs tsep" style="left:942px"></div>
<div class="abs tsep" style="left:1176px"></div>
<!-- tab 1: angular -->
<svg style="left:12px;top:6.5px" width="16" height="17" viewBox="0 0 16 17"><path d="M8 0 L0.3 2.8 L1.5 13 L8 16.7 L14.5 13 L15.7 2.8Z" fill="#dd0031"/><path d="M8 0 V16.7 L14.5 13 L15.7 2.8Z" fill="#c3002f"/><path d="M8 2 L3.3 12.6 H5.1 L6 10.2 H10 L10.9 12.6 H12.7Z M8 5.6 L9.4 8.8 H6.6Z" fill="#fff" fill-rule="evenodd"/></svg>
<div class="t tab" style="left:36px;width:190px">Local Mama Admin</div>
<!-- tab 2: whatsapp -->
<svg style="left:247px;top:7px" width="16" height="16" viewBox="0 0 16 16"><path d="M0.6 15.6 L1.8 11.6 A7.3 7.3 0 1 1 4.6 14.4Z" fill="#fff"/><circle cx="8.3" cy="7.7" r="6.7" fill="#1fb141"/></svg>
<div class="t" style="left:250px;top:10.3px;font-size:9px;font-weight:bold;color:#fff;letter-spacing:-.2px">33</div>
<div class="t tab" style="left:271px;width:190px">(33) WhatsApp</div>
<!-- tab 3: active -->
<svg style="left:482px;top:7px" width="16" height="16" viewBox="-8 -8 16 16"><circle r="7.8" fill="#3a3a3c"/><path d="M1.7 -2.9 L5.4 -5.7 A7.8 7.8 0 0 1 7.4 2.5 L3.3 0Z" fill="#e5342e"/><path d="M-1.7 -2.9 L1.7 -2.9 L3.3 0 L1.7 2.9 L-1.7 2.9 L-3.3 0Z" fill="#fff"/></svg>
<div class="t tab" style="left:506px;width:178px;color:#1f2124;-webkit-mask-image:linear-gradient(90deg,#000 155px,transparent 178px);mask-image:linear-gradient(90deg,#000 155px,transparent 178px)">Remove Background Online Auto</div>
<svg style="left:691px;top:9px" width="11" height="11" viewBox="0 0 11 11"><path d="M1.3 1.3 L9.7 9.7 M9.7 1.3 L1.3 9.7" stroke="#2a2c30" stroke-width="1.6" fill="none"/></svg>
<!-- tab 4: youtube -->
<svg style="left:716px;top:9px" width="16" height="12" viewBox="0 0 16 12"><rect width="16" height="11.6" rx="3" fill="#ff0000"/><path d="M6.3 3.2 L10.6 5.8 L6.3 8.4Z" fill="#fff"/></svg>
<svg style="left:740px;top:9px" width="10" height="11" viewBox="0 0 10 11"><path d="M0.2 3.8 H2.4 L5.4 1 V10 L2.4 7.2 H0.2Z" fill="#222"/><path d="M7.2 3 V8 M9.2 4 V7" stroke="#222" stroke-width="1.1"/></svg>
<div class="t tab" style="left:756px;width:178px;-webkit-mask-image:linear-gradient(90deg,#000 155px,transparent 178px);mask-image:linear-gradient(90deg,#000 155px,transparent 178px)">Industry Baby × Nagada Sang Dhol</div>
<!-- tab 5: wordhero -->
<svg style="left:950px;top:7px" width="17" height="16" viewBox="0 0 17 16"><path d="M1.2 2 L4.6 4.6 L3.4 6Z" fill="#e8557c"/><path d="M.4 9.4 Q2.4 7.6 5 8.6 L5.4 12.4 Q3.4 14.4 2 13.2 Q2.6 11.6 .4 9.4Z" fill="#e03a72"/><ellipse cx="10.2" cy="4.8" rx="5.4" ry="4.8" fill="#f3f6fc"/><rect x="4.8" y="2.6" width="10.8" height="3.9" rx="1.9" fill="#f0506a"/><circle cx="8.4" cy="4.5" r=".8" fill="#8f7fd0"/><circle cx="12" cy="4.5" r=".8" fill="#8f7fd0"/><path d="M7.4 6.5 Q10.2 4.6 13 6.5 Q10.2 9 7.4 6.5Z" fill="#2b2a6a"/><path d="M8.8 2.6 Q10.2 1.6 11.6 2.6Z" fill="#2b2a6a"/><path d="M5.4 10.6 Q6.6 9 8 9.2 H12.4 Q13.8 9 15.2 10.8 L14.4 12 L13 11.2 V15 Q12 16.2 11 15 L10.2 13.6 L9.4 15 Q8.4 16.2 7.4 15 V11.2 L6.2 12Z" fill="#eef2fb"/><path d="M9 9.4 L10.2 10.8 L11.4 9.4Z" fill="#f0506a"/><circle cx="10.2" cy="13" r="1" fill="#2b2a6a"/></svg>
<div class="t tab" style="left:974px;width:176px">Login | WordHero</div>
<!-- new tab / window controls -->
<svg style="left:1190px;top:8px" width="14" height="14" viewBox="0 0 14 14"><path d="M7 1 V13 M1 7 H13" stroke="#202124" stroke-width="1.9"/></svg>
<svg style="left:1273px;top:10px" width="12" height="8" viewBox="0 0 12 8"><path d="M1 1 L6 6.4 L11 1" stroke="#202124" stroke-width="1.1" fill="none"/></svg>
<svg style="left:1320px;top:14px" width="10" height="2" viewBox="0 0 10 2"><path d="M0 .8 H10" stroke="#202124" stroke-width="1.1"/></svg>
<svg style="left:1365px;top:9px" width="12" height="11" viewBox="0 0 12 11"><rect x=".8" y="2.6" width="7.6" height="7.6" rx="1" fill="none" stroke="#202124" stroke-width="1.1"/><path d="M3 2.6 V1.4 Q3 .6 3.8 .6 H9.6 Q10.6 .6 10.6 1.6 V7.2 Q10.6 8 9.8 8 H8.6" fill="none" stroke="#202124" stroke-width="1.1"/></svg>
<svg style="left:1411px;top:9px" width="12" height="12" viewBox="0 0 12 12"><path d="M.8 .6 L11.2 11 M11.2 .6 L.8 11" stroke="#202124" stroke-width="1.1" fill="none"/></svg>
<!-- toolbar icons -->
<svg style="left:16px;top:41px" width="12" height="14" viewBox="0 0 12 14"><path d="M10.2 1.2 V12.8 L1.4 7Z" fill="none" stroke="#c2c2c2" stroke-width="1.2" stroke-linejoin="round"/></svg>
<svg style="left:48px;top:41px" width="12" height="14" viewBox="0 0 12 14"><path d="M1.8 1.2 V12.8 L10.6 7Z" fill="none" stroke="#c2c2c2" stroke-width="1.2" stroke-linejoin="round"/></svg>
<svg style="left:78px;top:40px" width="16" height="16" viewBox="0 0 16 16"><path d="M13.2 5.4 A6 6 0 1 0 13.9 9.2" fill="none" stroke="#2a2a2a" stroke-width="1.5"/><circle cx="12.4" cy="4.6" r="1.7" fill="#2a2a2a"/></svg>
<svg style="left:198px;top:41px" width="12" height="14" viewBox="0 0 12 14"><path d="M1.6 12.6 V2.4 Q1.6 1 3 1 H9 Q10.4 1 10.4 2.4 V12.6 L6 9.4Z" fill="none" stroke="#2a2a2a" stroke-width="1.6" stroke-linejoin="round"/></svg>
<svg style="left:238px;top:41px" width="10" height="12" viewBox="0 0 10 12"><rect x=".6" y="5" width="8.8" height="6.6" rx="1.2" fill="#505357"/><path d="M2.6 5.4 V3.4 A2.4 2.4 0 0 1 7.4 3.4 V5.4" fill="none" stroke="#505357" stroke-width="1.5"/></svg>
<div class="t url">bgrem.deelvin.com</div>
<div class="abs" style="left:1142px;top:40px;width:1px;height:16px;background:#b9bcc2"></div>
<!-- brave shield -->
<svg style="left:1153.4px;top:38.8px" width="15" height="18" viewBox="0 0 21 25"><path d="M5.6 .3 H15.3 L17.1 2.4 L19.3 2.8 L20.6 5.2 L20 7 L20.4 8.8 L17.6 19 L14.9 21.7 L10.4 24.4 L6 21.7 L3.3 19 L.4 8.8 L.9 7 L.3 5.2 L1.6 2.8 L3.8 2.4Z" fill="#fb542b"/><path d="M4.2 4.6 L10.4 4 L16.7 4.6 L18.4 7.9 L15.8 11.9 L15.3 14.6 L13.1 16.4 L10.4 19.5 L7.8 16.4 L5.6 14.6 L5.1 11.9 L2.4 7.9Z" fill="#fff"/><path d="M5.4 6.4 L8.8 7 L8.4 8.2 L6 7.6Z M15.4 6.4 L12 7 L12.4 8.2 L14.8 7.6Z M8.2 10.8 L10.4 12.6 L12.6 10.8 L11.4 10.4 H9.4Z M7 15.8 L10.4 14.4 L13.8 15.8 L13.2 16.6 L10.4 15.5 L7.6 16.6Z" fill="#fb542b"/></svg>
<div class="abs" style="left:1166.5px;top:38.5px;width:11.5px;height:11.5px;border-radius:6px;background:#5d616c"></div>
<div class="t" style="left:1170.2px;top:40.6px;font-size:7.6px;font-weight:bold;color:#fff">3</div>
<!-- BAT -->
<svg style="left:1187px;top:39.5px" width="18" height="17" viewBox="0 0 18 17"><path d="M9 1.6 L1.4 15 H16.6Z" fill="none" stroke="#9e1f63" stroke-width="2.7" stroke-linejoin="round"/><path d="M9 1.6 L1.4 15" stroke="#ff4724" stroke-width="2.8" stroke-linecap="round"/><path d="M1.4 15 H16.6" stroke="#662d91" stroke-width="2.7" stroke-linecap="round"/></svg>
<!-- playlist, wallet, menu -->
<svg style="left:1342px;top:42px" width="16" height="12" viewBox="0 0 16 12"><path d="M0 1 H12 M0 4.6 H9 M0 8.2 H7" stroke="#3c4043" stroke-width="1.5"/><path d="M12.4 9.4 V1 H15.6" stroke="#3c4043" stroke-width="1.5" fill="none"/><circle cx="11" cy="9.6" r="2" fill="#3c4043"/></svg>
<svg style="left:1376px;top:41.5px" width="16" height="13" viewBox="0 0 16 13"><path d="M12.6 3.2 V2.4 Q12.6 .8 11 .8 H2.6 Q.8 .8 .8 2.6 V10.4 Q.8 12.2 2.6 12.2 H12.6 Q14.4 12.2 14.4 10.4 V5 Q14.4 3.2 12.6 3.2 H2.4" fill="none" stroke="#3c4043" stroke-width="1.5"/><rect x="10" y="6.2" width="5.6" height="3.6" rx="1" fill="#f3f3f3" stroke="#3c4043" stroke-width="1.3"/></svg>
<svg style="left:1413px;top:42px" width="10" height="12" viewBox="0 0 10 12"><path d="M0 .8 H9.6 M1.6 5.8 H9.6 M0 10.8 H9.6" stroke="#3c4043" stroke-width="1.5"/></svg>
<!-- TASKBAR -->
<div class="abs taskbar"></div>
<div class="abs search"></div>
<svg style="left:16px;top:872px" width="16" height="16" viewBox="0 0 16 16"><path d="M0 2.2 L6.6 1.3 V7.6 H0Z M7.4 1.2 L16 0 V7.6 H7.4Z M0 8.4 H6.6 V14.7 L0 13.8Z M7.4 8.4 H16 V16 L7.4 14.8Z" fill="#fff"/></svg>
<svg style="left:59px;top:870px" width="18" height="18" viewBox="0 0 18 18"><circle cx="10.6" cy="6.8" r="5.2" fill="none" stroke="#222" stroke-width="1.3"/><path d="M6.9 10.6 L1.2 16.8" stroke="#222" stroke-width="1.4"/></svg>
<div class="t" style="left:88px;top:873px;font-size:15px;color:#2e2e2e;letter-spacing:-.26px">Type here to search</div>
<!-- taj mahal -->
<svg style="left:314px;top:861px" width="76" height="39" viewBox="0 0 76 39">
<rect x="7" y="12" width="3.4" height="27" fill="#e9dcc3"/><rect x="6.2" y="10.4" width="5" height="2.4" fill="#d9c7a6"/><path d="M6.8 10.4 Q8.7 5.5 10.6 10.4Z" fill="#eadfca"/>
<rect x="65.6" y="12" width="3.4" height="27" fill="#e9dcc3"/><rect x="64.8" y="10.4" width="5" height="2.4" fill="#d9c7a6"/><path d="M65.4 10.4 Q67.3 5.5 69.2 10.4Z" fill="#eadfca"/>
<rect x="16" y="17" width="3" height="22" fill="#e4d6ba"/><path d="M15.6 17 Q17.5 12.5 19.4 17Z" fill="#eadfca"/>
<rect x="57" y="17" width="3" height="22" fill="#e4d6ba"/><path d="M56.6 17 Q58.5 12.5 60.4 17Z" fill="#eadfca"/>
<path d="M30 19 Q27 9 38 4.2 Q49 9 46 19Z" fill="#efe4cf"/><path d="M37.4 4.6 L38 0.6 L38.6 4.6Z" fill="#cdb88f"/>
<path d="M23.6 20 Q23.4 15 27 14 Q30.6 15 30.4 20Z" fill="#eadfca"/><path d="M45.6 20 Q45.4 15 49 14 Q52.6 15 52.4 20Z" fill="#eadfca"/>
<rect x="20" y="19.4" width="36" height="19.6" fill="#ecdfc6"/><rect x="20" y="19.4" width="36" height="1.6" fill="#d8c6a3"/>
<path d="M33 39 V28 Q38 22.5 43 28 V39Z" fill="#c9b48d"/><path d="M35 39 V30 Q38 26.4 41 30 V39Z" fill="#9b8560"/>
<path d="M23 31 V26.6 Q25.2 24.2 27.4 26.6 V31Z M23 38 V34 Q25.2 32 27.4 34 V38Z M48.6 31 V26.6 Q50.8 24.2 53 26.6 V31Z M48.6 38 V34 Q50.8 32 53 34 V38Z" fill="#bfa980"/>
<path d="M11.5 39 Q12.6 30 13.8 39Z M20.5 39 Q21.6 31 22.8 39Z M53.4 39 Q54.6 31 55.8 39Z M61.6 39 Q62.8 30 64 39Z" fill="#6da543"/>
<path d="M26 4.4 Q28.4 6.4 30.6 5 Q29 7.6 30.2 10 Q27.6 9 25.6 10.6 Q26.6 8 24.4 6.4 Q26.6 6.6 26 4.4Z" fill="#d66ee0"/>
<circle cx="61.8" cy="7.2" r="1.7" fill="#58c7ee"/><circle cx="2.8" cy="23.2" r="1.6" fill="#f2a51c"/>
</svg>
<!-- cortana -->
<svg style="left:407px;top:871px" width="18" height="18" viewBox="0 0 18 18"><circle cx="9" cy="8.8" r="6.6" fill="none" stroke="#fff" stroke-width="2.1"/></svg>
<!-- task view -->
<svg style="left:455px;top:872px" width="18" height="15" viewBox="0 0 18 15"><path d="M1.2 .6 H11.4 M1.2 14.2 H11.4" stroke="#fff" stroke-width="1.2"/><rect x="1.8" y="3.4" width="9.2" height="8" fill="none" stroke="#fff" stroke-width="1.2"/><path d="M.6 0 V3 M12 0 V3 M.6 11.8 V14.8 M12 11.8 V14.8" stroke="#fff" stroke-width="1.2"/><path d="M15.4 1.4 V3.6 M15.4 5.6 V14" stroke="#fff" stroke-width="1.4"/></svg>
<!-- edge -->
<svg style="left:502px;top:868px" width="26" height="24" viewBox="0 0 26 24"><defs><linearGradient id="eg1" x1="0" y1="0" x2="1" y2="1"><stop offset="0" stop-color="#35c1f1"/><stop offset=".5" stop-color="#2ea7e4"/><stop offset="1" stop-color="#1565c0"/></linearGradient><linearGradient id="eg2" x1="0" y1="0" x2="1" y2="0"><stop offset="0" stop-color="#2cc3d6"/><stop offset="1" stop-color="#6fd64b"/></linearGradient></defs>
<circle cx="12.6" cy="12" r="11.4" fill="url(#eg1)"/>
<path d="M1.6 9.4 A11.4 11.4 0 0 1 24 11.4 Q24.4 16 19 16.4 Q14.6 16.4 15.4 13.2 Q16.4 10 12.4 8.4 Q6 6.6 1.6 9.4Z" fill="url(#eg2)"/>
<path d="M8.2 12 Q6.4 18.6 13 22.4 Q5 23 2.4 16.4 Q1.6 11 6 9.2 Q9.2 8.6 8.2 12Z" fill="#1a5fb4"/>
<path d="M9.6 11.4 Q9 17.4 15.4 18.8 Q19.4 19.4 22.6 17.2 Q19 24 12 22.8 Q5.6 19.6 8 12.4Z" fill="#1450a0" opacity=".85"/>
</svg>
<!-- folder -->
<svg style="left:552px;top:869px" width="24" height="21" viewBox="0 0 24 21"><path d="M.8 2.6 Q.8 1.2 2.2 1.2 H8.6 L10.6 3.4 H21.6 Q23 3.4 23 4.8 V17.4 H.8Z" fill="#e8a920"/><rect x=".8" y="5.4" width="22.2" height="12.6" rx="1" fill="#fbd15b"/><path d="M5.6 18 V12.4 H18.2 V18 H15.4 V15 H8.4 V18Z" fill="#3f8fe2"/><rect x="5.6" y="18" width="2.8" height="2" fill="#2f77cc"/><rect x="15.4" y="18" width="2.8" height="2" fill="#2f77cc"/></svg>
<!-- store -->
<svg style="left:600px;top:868px" width="25" height="24" viewBox="0 0 25 24"><path d="M7 6 V3.2 Q7 1.2 9 1.2 H16 Q18 1.2 18 3.2 V6" fill="none" stroke="#2f9be6" stroke-width="1.8"/><path d="M1 5.6 H24 V20.6 Q24 23.2 21.4 23.2 H3.6 Q1 23.2 1 20.6Z" fill="#f4f4f4"/><rect x="7.2" y="9.4" width="4.6" height="4.6" fill="#f25022"/><rect x="13" y="9.4" width="4.6" height="4.6" fill="#7fba00"/><rect x="7.2" y="15.2" width="4.6" height="4.6" fill="#00a4ef"/><rect x="13" y="15.2" width="4.6" height="4.6" fill="#ffb900"/></svg>
<!-- mail -->
<svg style="left:649px;top:868px" width="26" height="23" viewBox="0 0 26 23"><path d="M.6 8.8 L13 .6 L25.4 8.8 V22.4 H.6Z" fill="#1f7fd6"/><path d="M.6 8.8 L13 16.6 L25.4 8.8 L13 .6Z" fill="#56b3f2"/><path d="M.6 22.4 L13 14.2 L25.4 22.4Z" fill="#2a96e8"/><path d="M.6 8.8 V22.4 L10.6 15.4Z" fill="#1873c8"/></svg>
<!-- firefox -->
<svg style="left:699px;top:867px" width="24" height="25" viewBox="0 0 24 25"><defs><radialGradient id="ff1" cx=".7" cy=".2" r=".9"><stop offset="0" stop-color="#ffe94a"/><stop offset=".45" stop-color="#ff9a1e"/><stop offset=".85" stop-color="#ff3f49"/><stop offset="1" stop-color="#e2257a"/></radialGradient></defs>
<path d="M12 2 Q13 4.6 16.4 6.4 Q17 3.4 16 1 Q21.4 4.6 23 11 Q24 19 17.4 23 Q11 26 5 22.6 Q-.4 18.4 1 11 Q1.6 8 3.6 6 Q3.4 8 4.4 9.4 Q6 5 12 2Z" fill="url(#ff1)"/>
<circle cx="12.6" cy="14" r="6" fill="#7b3fe0"/><path d="M7 12 Q9.6 8.6 14 9.6 Q11 10.8 11.6 13 Q13 15 16.6 14 Q17 18 13 19.6 Q8 20 7 16Z" fill="#ffb42a" opacity=".95"/><circle cx="13.2" cy="13.4" r="2.6" fill="#5a2fc0"/></svg>
<!-- opera -->
<svg style="left:747px;top:868px" width="25" height="24" viewBox="0 0 25 24"><ellipse cx="12.5" cy="12" rx="12" ry="11.6" fill="#e0131d"/><ellipse cx="12.5" cy="12" rx="12" ry="11.6" fill="none" stroke="#a70014" stroke-width=".8" opacity=".6"/><ellipse cx="12.5" cy="12" rx="4.9" ry="8.6" fill="#1e2f3a"/></svg>
<!-- brave active -->
<div class="abs" style="left:785px;top:860px;width:48px;height:40px;background:#4d5d68"></div>
<div class="abs" style="left:785px;top:897.6px;width:48px;height:2.4px;background:#76b9ed"></div>
<svg style="left:798.5px;top:867.6px" width="21" height="25" viewBox="0 0 21 25"><defs><linearGradient id="bv" x1="0" y1="0" x2="1" y2="0"><stop offset="0" stop-color="#ff5a00"/><stop offset=".5" stop-color="#ff4500"/><stop offset="1" stop-color="#ff1f00"/></linearGradient></defs><path d="M5.6 .3 H15.3 L17.1 2.4 L19.3 2.8 L20.6 5.2 L20 7 L20.4 8.8 L17.6 19 L14.9 21.7 L10.4 24.4 L6 21.7 L3.3 19 L.4 8.8 L.9 7 L.3 5.2 L1.6 2.8 L3.8 2.4Z" fill="url(#bv)"/><path d="M4.2 4.6 L10.4 4 L16.7 4.6 L18.4 7.9 L15.8 11.9 L15.3 14.6 L13.1 16.4 L10.4 19.5 L7.8 16.4 L5.6 14.6 L5.1 11.9 L2.4 7.9Z" fill="#fff"/><path d="M5.4 6.4 L8.8 7 L8.4 8 L6 7.4Z M15.4 6.4 L12 7 L12.4 8 L14.8 7.4Z M8.4 11 L10.4 12.4 L12.4 11 L11.4 10.6 H9.4Z M7.4 15.6 L10.4 14.2 L13.4 15.6 L10.4 14.9Z" fill="#ff5a1a"/><path d="M7 15.8 L10.4 14.6 L13.8 15.8 L13.2 16.4 L10.4 15.4 L7.6 16.4Z" fill="#ff4a10"/></svg>
<!-- weather -->
<svg style="left:947px;top:871px" width="22" height="17" viewBox="0 0 22 17"><circle cx="6.2" cy="5.6" r="5" fill="#f5b32d"/><path d="M5.4 16 Q.8 16 .8 11.6 Q.8 8 4.4 7.6 Q5.4 2.6 10.6 2.8 Q15 3 16 7 Q21.2 7 21.2 11.6 Q21.2 16 16.6 16Z" fill="#d6e9f8"/><path d="M5.4 16 Q.8 16 .8 11.6 Q1.6 14 5.4 14 H16.6 Q20.4 13.8 21.2 11.6 Q21.2 16 16.6 16Z" fill="#9fc4e8"/><path d="M5 9 Q6 4.4 10.4 4.2 Q8 6 8 9Z" fill="#f4fafe"/></svg>
<div class="t tb" style="left:978.2px;top:873px;letter-spacing:-1.25px">30°C</div>
<div class="t tb" style="left:1016px;top:873px;letter-spacing:-.42px">Mostly cloudy</div>
<!-- tray -->
<svg style="left:1118px;top:876px" width="14" height="9" viewBox="0 0 14 9"><path d="M.8 7.8 L6.8 1.4 L12.8 7.8" stroke="#fff" stroke-width="1.3" fill="none"/></svg>
<svg style="left:1141px;top:872px" width="16" height="16" viewBox="0 0 16 16"><circle cx="8" cy="8.2" r="6.4" fill="none" stroke="#fff" stroke-width="1.3"/><circle cx="8" cy="8.2" r="3.2" fill="#fff"/></svg>
<svg style="left:1167px;top:872px" width="13" height="17" viewBox="0 0 13 17"><path d="M2 2 Q5 .2 8 2 M2 15 Q5 16.8 8 15" stroke="#fff" stroke-width="1.1" fill="none"/><rect x=".8" y="4.4" width="8.4" height="8.2" rx="2" fill="none" stroke="#fff" stroke-width="1.2"/><path d="M9.4 7.4 L12.2 5.6 V11.4 L9.4 9.6" fill="none" stroke="#fff" stroke-width="1.1"/></svg>
<svg style="left:1188px;top:872px" width="18" height="17" viewBox="0 0 18 17"><path d="M1 1.4 H15.6 V8 M1 1.4 V13.4 H9" fill="none" stroke="#fff" stroke-width="1.3"/><path d="M4.4 10 Q4.4 6 8.4 6 M7 4 L9 6 L7 8 M11.6 5.4 Q11.6 9 8 9.4" stroke="#fff" stroke-width="1.1" fill="none"/><circle cx="13" cy="12.4" r="3.7" fill="#f5901e"/></svg>
<svg style="left:1212px;top:874px" width="18" height="12" viewBox="0 0 18 12"><rect x="4.6" y="2.4" width="11.4" height="8" fill="none" stroke="#fff" stroke-width="1.2"/><rect x="16.4" y="4.6" width="1.4" height="3.6" fill="#fff"/><rect x="6" y="3.8" width="4" height="5.2" fill="#fff"/><path d="M.4 3.4 H3.6 M.4 6 H3.6 M1.2 1 V3.4 M2.8 1 V3.4 M2 6 V9.4 H4.6" stroke="#fff" stroke-width="1.1" fill="none"/></svg>
<svg style="left:1236px;top:873px" width="18" height="14" viewBox="0 0 18 14"><path d="M.8 4.8 H3.6 L7.2 1.2 V12.8 L3.6 9.2 H.8Z" fill="none" stroke="#fff" stroke-width="1.1" stroke-linejoin="round"/><path d="M9.6 4.6 Q11.2 7 9.6 9.4 M12 3 Q14.6 7 12 11 M14.4 1.4 Q18 7 14.4 12.6" stroke="#fff" stroke-width="1.1" fill="none"/></svg>
<svg style="left:1263px;top:874px" width="14" height="13" viewBox="0 0 14 13"><path d="M1 12 A11.4 11.4 0 0 1 12.6 .8" stroke="#fff" stroke-width="1.1" fill="none" opacity=".95"/><path d="M4.4 12.2 A8 8 0 0 1 12.6 4.2" stroke="#fff" stroke-width="1.1" fill="none"/><path d="M7.8 12.4 A4.6 4.6 0 0 1 12.6 7.6" stroke="#fff" stroke-width="1.1" fill="none"/><circle cx="11.6" cy="11.4" r="1.4" fill="#fff"/></svg>
<div class="t tbs" style="left:1287px;top:874px;letter-spacing:-1.3px">ENG</div>
<div class="t tbs" style="left:1338.6px;top:865px;letter-spacing:-.8px">12:10</div>
<div class="t tbs" style="left:1323.3px;top:883px;letter-spacing:-.36px">20-06-2022</div>
<svg style="left:1399px;top:872px" width="17" height="14" viewBox="0 0 17 14"><path d="M.6 .6 H16.2 V10.6 H12 V13.4 L9 10.6 H.6Z" fill="#fff"/><path d="M3 3.4 H13.6 M3 5.8 H13.6 M3 8.2 H10" stroke="#17243e" stroke-width="1.1"/></svg>
<div class="abs" style="left:1406.4px;top:879.2px;width:16.4px;height:16.4px;border-radius:8.2px;background:#2d2d35;border:1px solid #8e929c"></div>
<div class="t" style="left:1411.2px;top:881.6px;font-size:12px;font-weight:bold;color:#fff">2</div>
<div class="abs" style="left:1435px;top:860px;width:1px;height:40px;background:#55606e"></div>
<!-- recaptcha badge (page) -->
<div class="abs" style="left:1353px;top:786px;width:70px;height:60px;background:#fbfbfb;box-shadow:0 0 4px rgba(0,0,0,.3);opacity:.47">
<svg style="left:17px;top:6.5px" width="37" height="36" viewBox="0 0 37 36"><path d="M18 0 H3.5 L8 4.8 A18 18 0 0 0 0 18 H9.5 A9 9 0 0 1 18 9.2Z" fill="#4a90e2"/><path d="M18 0 A18 18 0 0 1 31.6 6.4 L36 2 V18 H20.5 L25 13.4 A9 9 0 0 0 18 9.2Z" fill="#1c3aa9"/><path d="M0 18 V33 L4.6 28.6 A18 18 0 0 0 31.5 29.6 L25 23 A9 9 0 0 1 11.2 22.6 L15.5 18Z" fill="#bababa"/></svg>
<div class="t" style="left:7px;top:47.5px;font-size:8.3px;color:#444;letter-spacing:.1px">Privacy - Terms</div>
</div>
<!-- screenshot thumbnail preview -->
<div class="abs" style="left:1034px;top:604px;width:400px;height:250px;overflow:hidden;opacity:.37">
<div class="root" style="transform:scale(.2776);transform-origin:0 0">
<!-- PAGE -->
<div class="abs header"></div>
<div class="abs hshadow"></div>
<!-- logo -->
<svg style="left:40px;top:84px" width="51" height="51" viewBox="-25.5 -25.5 51 51">
<circle r="24.6" fill="#c9a25a"/>
<circle r="23.8" fill="#3c3c3e"/>
<g>
<path d="M0 0 L-6 -23 A23.8 23.8 0 0 1 16 -17.6 L5 -8.7Z" fill="#2f2f31"/>
<path d="M5 -8.7 L16 -17.6 A23.8 23.8 0 0 1 22.5 7.8 L10 0Z" fill="#e5342e"/>
<path d="M10 0 L22.5 7.8 A23.8 23.8 0 0 1 5 23.3 L5 8.7Z" fill="#3a3a3c"/>
<path d="M5 8.7 L5 23.3 A23.8 23.8 0 0 1 -17 16.6 L-5 8.7Z" fill="#4a4a4c"/>
<path d="M-5 8.7 L-17 16.6 A23.8 23.8 0 0 1 -22.8 -7 L-10 0Z" fill="#343436"/>
<path d="M-10 0 L-22.8 -7 A23.8 23.8 0 0 1 -6 -23 L-5 -8.7Z" fill="#58585a"/>
</g>
<path d="M-5 -8.7 L5 -8.7 L10 0 L5 8.7 L-5 8.7 L-10 0Z" fill="#fff"/>
</svg>
<div class="t" style="left:99.8px;top:92.4px;font-size:35.5px;font-weight:bold;color:#38383a;letter-spacing:2.1px">Bg</div>
<div class="t" style="left:151.5px;top:92.4px;font-size:35.5px;color:#38383a;letter-spacing:1.3px">Rem</div>
<div class="t nav" style="left:262.7px;letter-spacing:.55px">Remove BG</div>
<div class="t nav" style="left:394px;letter-spacing:.85px">Pricing</div>
<div class="t nav" style="left:481.3px;letter-spacing:.86px">Tutorials</div>
<div class="t nav" style="left:586px;letter-spacing:-2.2px">API</div>
<div class="t nav" style="left:1208px;letter-spacing:.72px">Sign in</div>
<div class="abs signup"></div>
<div class="t nav" style="left:1310.6px;letter-spacing:.4px;font-weight:bold;color:#fff">Sign up</div>

<div class="abs hero"><svg width="554" height="320" viewBox="0 0 554 320" style="display:block">
<defs><filter id="tb3" x="-10%" y="-10%" width="120%" height="120%"><feGaussianBlur stdDeviation="3"/></filter><linearGradient id="tsky" x1="0" y1="0" x2="0" y2="1"><stop offset="0" stop-color="#7fc4ea"/><stop offset=".55" stop-color="#d6eef8"/><stop offset=".7" stop-color="#e8f5f8"/><stop offset=".72" stop-color="#cfc3a8"/><stop offset="1" stop-color="#9a927f"/></linearGradient></defs>
<rect width="554" height="320" fill="url(#tsky)"/>
<g filter="url(#tb3)">
<rect x="0" y="196" width="554" height="22" fill="#b9e2ee"/>
<path d="M0 0 H554 V120 Q500 70 450 110 Q420 60 380 80 Q330 30 280 60 Q240 90 200 70 Q150 110 110 80 Q60 130 0 110Z" fill="#232b1c"/>
<ellipse cx="80" cy="90" rx="90" ry="60" fill="#2c3824"/>
<ellipse cx="200" cy="70" rx="80" ry="50" fill="#28331f"/>
<ellipse cx="330" cy="40" rx="90" ry="40" fill="#1f2718"/>
<ellipse cx="480" cy="60" rx="90" ry="55" fill="#252e1b"/>
<ellipse cx="470" cy="160" rx="80" ry="60" fill="#9aa74c"/>
<ellipse cx="520" cy="130" rx="40" ry="50" fill="#3a4724"/>
<ellipse cx="150" cy="150" rx="40" ry="40" fill="#8c9a4c" opacity=".8"/>
<ellipse cx="60" cy="170" rx="30" ry="30" fill="#b8a84c" opacity=".7"/>
<path d="M40 320 Q60 240 92 150 L108 154 Q92 240 96 320Z" fill="#2e2b27"/>
<path d="M10 230 Q14 180 24 140 L32 142 Q24 190 22 232Z" fill="#2e2b27"/>
<path d="M136 230 Q142 190 150 160 L158 162 Q150 200 148 232Z" fill="#3a3631"/>
<path d="M420 230 Q424 190 440 150 L448 154 Q434 200 432 232Z" fill="#3a3631"/>
<path d="M470 240 Q480 200 500 170 L507 174 Q490 210 482 242Z" fill="#3a3631"/>
<rect x="0" y="250" width="554" height="70" fill="#6a6558" opacity=".8"/>
<ellipse cx="180" cy="246" rx="70" ry="12" fill="#e6dcc6"/>
</g>
<path d="M130 322 Q170 280 212 244 L262 224 L300 250 L336 226 L392 222 Q470 270 526 322Z" fill="#f4f5f8"/>
<path d="M258 150 L320 150 L326 232 L300 256 L262 226Z" fill="#e6c0ab"/>
<path d="M262 62 Q300 50 316 90 L320 190 Q290 208 262 200 Q246 196 244 176 L236 150 L228 128 L238 112 Q238 80 262 62Z" fill="#efd0bf"/>
<path d="M240 158 Q256 158 268 148 Q266 170 248 172Z" fill="#c9504c"/>
<path d="M244 110 Q252 106 258 110" stroke="#4a322c" stroke-width="3" fill="none"/>
<path d="M262 62 Q286 40 320 48 Q360 60 372 110 Q392 160 386 210 Q392 260 372 296 Q352 290 344 262 Q330 236 326 200 Q300 170 300 130 Q292 84 262 62Z" fill="#4a3832"/>
<path d="M250 196 Q262 206 266 226 Q266 260 252 284 Q232 270 222 250 Q204 236 210 212 Q224 196 236 186Z" fill="#4a3832"/>
</svg></div>
<div class="t h1" style="top:382.1px;letter-spacing:2.75px">Remove</div>
<div class="t h1" style="top:470.7px;letter-spacing:3.47px">background</div>
<!-- text cursor -->
<svg style="left:837px;top:447px" width="9" height="18" viewBox="0 0 9 18"><path d="M1.5 .5 Q4 .5 4.5 2 Q5 .5 7.5 .5 M4.5 2 V16 M1.5 17.5 Q4 17.5 4.5 16 Q5 17.5 7.5 17.5" stroke="#222" stroke-width="1" fill="none"/></svg>

<div class="abs upload"></div>
<svg style="left:400px;top:730px" width="32" height="32" viewBox="0 0 32 32"><path d="M16 2.2 V24 M5.3 13.4 L16 2.2 L26.7 13.4 M2 29.2 H30" stroke="#fff" stroke-width="1.5" fill="none"/></svg>
<div class="t big" style="left:459.5px;top:729.8px;color:#fff;letter-spacing:1.25px;-webkit-text-stroke:.35px #fff">Upload file</div>
<svg style="left:727px;top:705px" width="370" height="80" viewBox="0 0 370 80"><rect x="1" y="1" width="368" height="78" rx="6" fill="none" stroke="#5562d8" stroke-width="2" stroke-dasharray="6 3.2"/></svg>
<div class="t big" style="left:792.3px;top:728.8px;color:#6470dd;letter-spacing:1.0px">or Drag file here</div>
<div class="t fmt" style="left:391px;top:826.2px;letter-spacing:.187px">Supported formats: .mp4, .mov, .ts, .avi, .mkv, .webm, .mpg, .jpg, .png</div>
<div class="t fmt" style="left:537.5px;top:854.2px;letter-spacing:.5px">Best solution for portrait video/photo</div>

<div class="abs scroll"></div>
<div class="abs sthumb"></div>
<svg style="left:1423px;top:67px" width="17" height="17" viewBox="0 0 17 17"><path d="M4.8 11 L8.5 6.8 L12.2 11Z" fill="#a3a3a3"/></svg>
<svg style="left:1423px;top:843px" width="17" height="17" viewBox="0 0 17 17"><path d="M4.5 6.5 L8.5 11 L12.5 6.5Z" fill="#505050"/></svg>
<!-- CHROME -->
<div class="abs tabbar"></div>
<div class="abs tab-active"></div>
<div class="abs toolbar"></div>
<div class="abs toolline"></div>
<div class="abs urlbar"></div>
<div class="abs tsep" style="left:239px"></div>
<div class="abs tsep" style="left:942px"></div>
<div class="abs tsep" style="left:1176px"></div>
<!-- tab 1: angular -->
<svg style="left:12px;top:6.5px" width="16" height="17" viewBox="0 0 16 17"><path d="M8 0 L0.3 2.8 L1.5 13 L8 16.7 L14.5 13 L15.7 2.8Z" fill="#dd0031"/><path d="M8 0 V16.7 L14.5 13 L15.7 2.8Z" fill="#c3002f"/><path d="M8 2 L3.3 12.6 H5.1 L6 10.2 H10 L10.9 12.6 H12.7Z M8 5.6 L9.4 8.8 H6.6Z" fill="#fff" fill-rule="evenodd"/></svg>
<div class="t tab" style="left:36px;width:190px">Local Mama Admin</div>
<!-- tab 2: whatsapp -->
<svg style="left:247px;top:7px" width="16" height="16" viewBox="0 0 16 16"><path d="M0.6 15.6 L1.8 11.6 A7.3 7.3 0 1 1 4.6 14.4Z" fill="#fff"/><circle cx="8.3" cy="7.7" r="6.7" fill="#1fb141"/></svg>
<div class="t" style="left:250px;top:10.3px;font-size:9px;font-weight:bold;color:#fff;letter-spacing:-.2px">33</div>
<div class="t tab" style="left:271px;width:190px">(33) WhatsApp</div>
<!-- tab 3: active -->
<svg style="left:482px;top:7px" width="16" height="16" viewBox="-8 -8 16 16"><circle r="7.8" fill="#3a3a3c"/><path d="M1.7 -2.9 L5.4 -5.7 A7.8 7.8 0 0 1 7.4 2.5 L3.3 0Z" fill="#e5342e"/><path d="M-1.7 -2.9 L1.7 -2.9 L3.3 0 L1.7 2.9 L-1.7 2.9 L-3.3 0Z" fill="#fff"/></svg>
<div class="t tab" style="left:506px;width:178px;color:#1f2124;-webkit-mask-image:linear-gradient(90deg,#000 155px,transparent 178px);mask-image:linear-gradient(90deg,#000 155px,transparent 178px)">Remove Background Online Auto</div>
<svg style="left:691px;top:9px" width="11" height="11" viewBox="0 0 11 11"><path d="M1.3 1.3 L9.7 9.7 M9.7 1.3 L1.3 9.7" stroke="#2a2c30" stroke-width="1.6" fill="none"/></svg>
<!-- tab 4: youtube -->
<svg style="left:716px;top:9px" width="16" height="12" viewBox="0 0 16 12"><rect width="16" height="11.6" rx="3" fill="#ff0000"/><path d="M6.3 3.2 L10.6 5.8 L6.3 8.4Z" fill="#fff"/></svg>
<svg style="left:740px;top:9px" width="10" height="11" viewBox="0 0 10 11"><path d="M0.2 3.8 H2.4 L5.4 1 V10 L2.4 7.2 H0.2Z" fill="#222"/><path d="M7.2 3 V8 M9.2 4 V7" stroke="#222" stroke-width="1.1"/></svg>
<div class="t tab" style="left:756px;width:178px;-webkit-mask-image:linear-gradient(90deg,#000 155px,transparent 178px);mask-image:linear-gradient(90deg,#000 155px,transparent 178px)">Industry Baby × Nagada Sang Dhol</div>
<!-- tab 5: wordhero -->
<svg style="left:950px;top:7px" width="17" height="16" viewBox="0 0 17 16"><path d="M1.2 2 L4.6 4.6 L3.4 6Z" fill="#e8557c"/><path d="M.4 9.4 Q2.4 7.6 5 8.6 L5.4 12.4 Q3.4 14.4 2 13.2 Q2.6 11.6 .4 9.4Z" fill="#e03a72"/><ellipse cx="10.2" cy="4.8" rx="5.4" ry="4.8" fill="#f3f6fc"/><rect x="4.8" y="2.6" width="10.8" height="3.9" rx="1.9" fill="#f0506a"/><circle cx="8.4" cy="4.5" r=".8" fill="#8f7fd0"/><circle cx="12" cy="4.5" r=".8" fill="#8f7fd0"/><path d="M7.4 6.5 Q10.2 4.6 13 6.5 Q10.2 9 7.4 6.5Z" fill="#2b2a6a"/><path d="M8.8 2.6 Q10.2 1.6 11.6 2.6Z" fill="#2b2a6a"/><path d="M5.4 10.6 Q6.6 9 8 9.2 H12.4 Q13.8 9 15.2 10.8 L14.4 12 L13 11.2 V15 Q12 16.2 11 15 L10.2 13.6 L9.4 15 Q8.4 16.2 7.4 15 V11.2 L6.2 12Z" fill="#eef2fb"/><path d="M9 9.4 L10.2 10.8 L11.4 9.4Z" fill="#f0506a"/><circle cx="10.2" cy="13" r="1" fill="#2b2a6a"/></svg>
<div class="t tab" style="left:974px;width:176px">Login | WordHero</div>
<!-- new tab / window controls -->
<svg style="left:1190px;top:8px" width="14" height="14" viewBox="0 0 14 14"><path d="M7 1 V13 M1 7 H13" stroke="#202124" stroke-width="1.9"/></svg>
<svg style="left:1273px;top:10px" width="12" height="8" viewBox="0 0 12 8"><path d="M1 1 L6 6.4 L11 1" stroke="#202124" stroke-width="1.1" fill="none"/></svg>
<svg style="left:1320px;top:14px" width="10" height="2" viewBox="0 0 10 2"><path d="M0 .8 H10" stroke="#202124" stroke-width="1.1"/></svg>
<svg style="left:1365px;top:9px" width="12" height="11" viewBox="0 0 12 11"><rect x=".8" y="2.6" width="7.6" height="7.6" rx="1" fill="none" stroke="#202124" stroke-width="1.1"/><path d="M3 2.6 V1.4 Q3 .6 3.8 .6 H9.6 Q10.6 .6 10.6 1.6 V7.2 Q10.6 8 9.8 8 H8.6" fill="none" stroke="#202124" stroke-width="1.1"/></svg>
<svg style="left:1411px;top:9px" width="12" height="12" viewBox="0 0 12 12"><path d="M.8 .6 L11.2 11 M11.2 .6 L.8 11" stroke="#202124" stroke-width="1.1" fill="none"/></svg>
<!-- toolbar icons -->
<svg style="left:16px;top:41px" width="12" height="14" viewBox="0 0 12 14"><path d="M10.2 1.2 V12.8 L1.4 7Z" fill="none" stroke="#c2c2c2" stroke-width="1.2" stroke-linejoin="round"/></svg>
<svg style="left:48px;top:41px" width="12" height="14" viewBox="0 0 12 14"><path d="M1.8 1.2 V12.8 L10.6 7Z" fill="none" stroke="#c2c2c2" stroke-width="1.2" stroke-linejoin="round"/></svg>
<svg style="left:78px;top:40px" width="16" height="16" viewBox="0 0 16 16"><path d="M13.2 5.4 A6 6 0 1 0 13.9 9.2" fill="none" stroke="#2a2a2a" stroke-width="1.5"/><circle cx="12.4" cy="4.6" r="1.7" fill="#2a2a2a"/></svg>
<svg style="left:198px;top:41px" width="12" height="14" viewBox="0 0 12 14"><path d="M1.6 12.6 V2.4 Q1.6 1 3 1 H9 Q10.4 1 10.4 2.4 V12.6 L6 9.4Z" fill="none" stroke="#2a2a2a" stroke-width="1.6" stroke-linejoin="round"/></svg>
<svg style="left:238px;top:41px" width="10" height="12" viewBox="0 0 10 12"><rect x=".6" y="5" width="8.8" height="6.6" rx="1.2" fill="#505357"/><path d="M2.6 5.4 V3.4 A2.4 2.4 0 0 1 7.4 3.4 V5.4" fill="none" stroke="#505357" stroke-width="1.5"/></svg>
<div class="t url">bgrem.deelvin.com</div>
<div class="abs" style="left:1142px;top:40px;width:1px;height:16px;background:#b9bcc2"></div>
<!-- brave shield -->
<svg style="left:1153.4px;top:38.8px" width="15" height="18" viewBox="0 0 21 25"><path d="M5.6 .3 H15.3 L17.1 2.4 L19.3 2.8 L20.6 5.2 L20 7 L20.4 8.8 L17.6 19 L14.9 21.7 L10.4 24.4 L6 21.7 L3.3 19 L.4 8.8 L.9 7 L.3 5.2 L1.6 2.8 L3.8 2.4Z" fill="#fb542b"/><path d="M4.2 4.6 L10.4 4 L16.7 4.6 L18.4 7.9 L15.8 11.9 L15.3 14.6 L13.1 16.4 L10.4 19.5 L7.8 16.4 L5.6 14.6 L5.1 11.9 L2.4 7.9Z" fill="#fff"/><path d="M5.4 6.4 L8.8 7 L8.4 8.2 L6 7.6Z M15.4 6.4 L12 7 L12.4 8.2 L14.8 7.6Z M8.2 10.8 L10.4 12.6 L12.6 10.8 L11.4 10.4 H9.4Z M7 15.8 L10.4 14.4 L13.8 15.8 L13.2 16.6 L10.4 15.5 L7.6 16.6Z" fill="#fb542b"/></svg>
<div class="abs" style="left:1166.5px;top:38.5px;width:11.5px;height:11.5px;border-radius:6px;background:#5d616c"></div>
<div class="t" style="left:1170.2px;top:40.6px;font-size:7.6px;font-weight:bold;color:#fff">3</div>
<!-- BAT -->
<svg style="left:1187px;top:39.5px" width="18" height="17" viewBox="0 0 18 17"><path d="M9 1.6 L1.4 15 H16.6Z" fill="none" stroke="#9e1f63" stroke-width="2.7" stroke-linejoin="round"/><path d="M9 1.6 L1.4 15" stroke="#ff4724" stroke-width="2.8" stroke-linecap="round"/><path d="M1.4 15 H16.6" stroke="#662d91" stroke-width="2.7" stroke-linecap="round"/></svg>
<!-- playlist, wallet, menu -->
<svg style="left:1342px;top:42px" width="16" height="12" viewBox="0 0 16 12"><path d="M0 1 H12 M0 4.6 H9 M0 8.2 H7" stroke="#3c4043" stroke-width="1.5"/><path d="M12.4 9.4 V1 H15.6" stroke="#3c4043" stroke-width="1.5" fill="none"/><circle cx="11" cy="9.6" r="2" fill="#3c4043"/></svg>
<svg style="left:1376px;top:41.5px" width="16" height="13" viewBox="0 0 16 13"><path d="M12.6 3.2 V2.4 Q12.6 .8 11 .8 H2.6 Q.8 .8 .8 2.6 V10.4 Q.8 12.2 2.6 12.2 H12.6 Q14.4 12.2 14.4 10.4 V5 Q14.4 3.2 12.6 3.2 H2.4" fill="none" stroke="#3c4043" stroke-width="1.5"/><rect x="10" y="6.2" width="5.6" height="3.6" rx="1" fill="#f3f3f3" stroke="#3c4043" stroke-width="1.3"/></svg>
<svg style="left:1413px;top:42px" width="10" height="12" viewBox="0 0 10 12"><path d="M0 .8 H9.6 M1.6 5.8 H9.6 M0 10.8 H9.6" stroke="#3c4043" stroke-width="1.5"/></svg>
<!-- TASKBAR -->
<div class="abs taskbar"></div>
<div class="abs search"></div>
<svg style="left:16px;top:872px" width="16" height="16" viewBox="0 0 16 16"><path d="M0 2.2 L6.6 1.3 V7.6 H0Z M7.4 1.2 L16 0 V7.6 H7.4Z M0 8.4 H6.6 V14.7 L0 13.8Z M7.4 8.4 H16 V16 L7.4 14.8Z" fill="#fff"/></svg>
<svg style="left:59px;top:870px" width="18" height="18" viewBox="0 0 18 18"><circle cx="10.6" cy="6.8" r="5.2" fill="none" stroke="#222" stroke-width="1.3"/><path d="M6.9 10.6 L1.2 16.8" stroke="#222" stroke-width="1.4"/></svg>
<div class="t" style="left:88px;top:873px;font-size:15px;color:#2e2e2e;letter-spacing:-.26px">Type here to search</div>
<!-- taj mahal -->
<svg style="left:314px;top:861px" width="76" height="39" viewBox="0 0 76 39">
<rect x="7" y="12" width="3.4" height="27" fill="#e9dcc3"/><rect x="6.2" y="10.4" width="5" height="2.4" fill="#d9c7a6"/><path d="M6.8 10.4 Q8.7 5.5 10.6 10.4Z" fill="#eadfca"/>
<rect x="65.6" y="12" width="3.4" height="27" fill="#e9dcc3"/><rect x="64.8" y="10.4" width="5" height="2.4" fill="#d9c7a6"/><path d="M65.4 10.4 Q67.3 5.5 69.2 10.4Z" fill="#eadfca"/>
<rect x="16" y="17" width="3" height="22" fill="#e4d6ba"/><path d="M15.6 17 Q17.5 12.5 19.4 17Z" fill="#eadfca"/>
<rect x="57" y="17" width="3" height="22" fill="#e4d6ba"/><path d="M56.6 17 Q58.5 12.5 60.4 17Z" fill="#eadfca"/>
<path d="M30 19 Q27 9 38 4.2 Q49 9 46 19Z" fill="#efe4cf"/><path d="M37.4 4.6 L38 0.6 L38.6 4.6Z" fill="#cdb88f"/>
<path d="M23.6 20 Q23.4 15 27 14 Q30.6 15 30.4 20Z" fill="#eadfca"/><path d="M45.6 20 Q45.4 15 49 14 Q52.6 15 52.4 20Z" fill="#eadfca"/>
<rect x="20" y="19.4" width="36" height="19.6" fill="#ecdfc6"/><rect x="20" y="19.4" width="36" height="1.6" fill="#d8c6a3"/>
<path d="M33 39 V28 Q38 22.5 43 28 V39Z" fill="#c9b48d"/><path d="M35 39 V30 Q38 26.4 41 30 V39Z" fill="#9b8560"/>
<path d="M23 31 V26.6 Q25.2 24.2 27.4 26.6 V31Z M23 38 V34 Q25.2 32 27.4 34 V38Z M48.6 31 V26.6 Q50.8 24.2 53 26.6 V31Z M48.6 38 V34 Q50.8 32 53 34 V38Z" fill="#bfa980"/>
<path d="M11.5 39 Q12.6 30 13.8 39Z M20.5 39 Q21.6 31 22.8 39Z M53.4 39 Q54.6 31 55.8 39Z M61.6 39 Q62.8 30 64 39Z" fill="#6da543"/>
<path d="M26 4.4 Q28.4 6.4 30.6 5 Q29 7.6 30.2 10 Q27.6 9 25.6 10.6 Q26.6 8 24.4 6.4 Q26.6 6.6 26 4.4Z" fill="#d66ee0"/>
<circle cx="61.8" cy="7.2" r="1.7" fill="#58c7ee"/><circle cx="2.8" cy="23.2" r="1.6" fill="#f2a51c"/>
</svg>
<!-- cortana -->
<svg style="left:407px;top:871px" width="18" height="18" viewBox="0 0 18 18"><circle cx="9" cy="8.8" r="6.6" fill="none" stroke="#fff" stroke-width="2.1"/></svg>
<!-- task view -->
<svg style="left:455px;top:872px" width="18" height="15" viewBox="0 0 18 15"><path d="M1.2 .6 H11.4 M1.2 14.2 H11.4" stroke="#fff" stroke-width="1.2"/><rect x="1.8" y="3.4" width="9.2" height="8" fill="none" stroke="#fff" stroke-width="1.2"/><path d="M.6 0 V3 M12 0 V3 M.6 11.8 V14.8 M12 11.8 V14.8" stroke="#fff" stroke-width="1.2"/><path d="M15.4 1.4 V3.6 M15.4 5.6 V14" stroke="#fff" stroke-width="1.4"/></svg>
<!-- edge -->
<svg style="left:502px;top:868px" width="26" height="24" viewBox="0 0 26 24"><defs><linearGradient id="ceg1" x1="0" y1="0" x2="1" y2="1"><stop offset="0" stop-color="#35c1f1"/><stop offset=".5" stop-color="#2ea7e4"/><stop offset="1" stop-color="#1565c0"/></linearGradient><linearGradient id="ceg2" x1="0" y1="0" x2="1" y2="0"><stop offset="0" stop-color="#2cc3d6"/><stop offset="1" stop-color="#6fd64b"/></linearGradient></defs>
<circle cx="12.6" cy="12" r="11.4" fill="url(#ceg1)"/>
<path d="M1.6 9.4 A11.4 11.4 0 0 1 24 11.4 Q24.4 16 19 16.4 Q14.6 16.4 15.4 13.2 Q16.4 10 12.4 8.4 Q6 6.6 1.6 9.4Z" fill="url(#ceg2)"/>
<path d="M8.2 12 Q6.4 18.6 13 22.4 Q5 23 2.4 16.4 Q1.6 11 6 9.2 Q9.2 8.6 8.2 12Z" fill="#1a5fb4"/>
<path d="M9.6 11.4 Q9 17.4 15.4 18.8 Q19.4 19.4 22.6 17.2 Q19 24 12 22.8 Q5.6 19.6 8 12.4Z" fill="#1450a0" opacity=".85"/>
</svg>
<!-- folder -->
<svg style="left:552px;top:869px" width="24" height="21" viewBox="0 0 24 21"><path d="M.8 2.6 Q.8 1.2 2.2 1.2 H8.6 L10.6 3.4 H21.6 Q23 3.4 23 4.8 V17.4 H.8Z" fill="#e8a920"/><rect x=".8" y="5.4" width="22.2" height="12.6" rx="1" fill="#fbd15b"/><path d="M5.6 18 V12.4 H18.2 V18 H15.4 V15 H8.4 V18Z" fill="#3f8fe2"/><rect x="5.6" y="18" width="2.8" height="2" fill="#2f77cc"/><rect x="15.4" y="18" width="2.8" height="2" fill="#2f77cc"/></svg>
<!-- store -->
<svg style="left:600px;top:868px" width="25" height="24" viewBox="0 0 25 24"><path d="M7 6 V3.2 Q7 1.2 9 1.2 H16 Q18 1.2 18 3.2 V6" fill="none" stroke="#2f9be6" stroke-width="1.8"/><path d="M1 5.6 H24 V20.6 Q24 23.2 21.4 23.2 H3.6 Q1 23.2 1 20.6Z" fill="#f4f4f4"/><rect x="7.2" y="9.4" width="4.6" height="4.6" fill="#f25022"/><rect x="13" y="9.4" width="4.6" height="4.6" fill="#7fba00"/><rect x="7.2" y="15.2" width="4.6" height="4.6" fill="#00a4ef"/><rect x="13" y="15.2" width="4.6" height="4.6" fill="#ffb900"/></svg>
<!-- mail -->
<svg style="left:649px;top:868px" width="26" height="23" viewBox="0 0 26 23"><path d="M.6 8.8 L13 .6 L25.4 8.8 V22.4 H.6Z" fill="#1f7fd6"/><path d="M.6 8.8 L13 16.6 L25.4 8.8 L13 .6Z" fill="#56b3f2"/><path d="M.6 22.4 L13 14.2 L25.4 22.4Z" fill="#2a96e8"/><path d="M.6 8.8 V22.4 L10.6 15.4Z" fill="#1873c8"/></svg>
<!-- firefox -->
<svg style="left:699px;top:867px" width="24" height="25" viewBox="0 0 24 25"><defs><radialGradient id="cff1" cx=".7" cy=".2" r=".9"><stop offset="0" stop-color="#ffe94a"/><stop offset=".45" stop-color="#ff9a1e"/><stop offset=".85" stop-color="#ff3f49"/><stop offset="1" stop-color="#e2257a"/></radialGradient></defs>
<path d="M12 2 Q13 4.6 16.4 6.4 Q17 3.4 16 1 Q21.4 4.6 23 11 Q24 19 17.4 23 Q11 26 5 22.6 Q-.4 18.4 1 11 Q1.6 8 3.6 6 Q3.4 8 4.4 9.4 Q6 5 12 2Z" fill="url(#cff1)"/>
<circle cx="12.6" cy="14" r="6" fill="#7b3fe0"/><path d="M7 12 Q9.6 8.6 14 9.6 Q11 10.8 11.6 13 Q13 15 16.6 14 Q17 18 13 19.6 Q8 20 7 16Z" fill="#ffb42a" opacity=".95"/><circle cx="13.2" cy="13.4" r="2.6" fill="#5a2fc0"/></svg>
<!-- opera -->
<svg style="left:747px;top:868px" width="25" height="24" viewBox="0 0 25 24"><ellipse cx="12.5" cy="12" rx="12" ry="11.6" fill="#e0131d"/><ellipse cx="12.5" cy="12" rx="12" ry="11.6" fill="none" stroke="#a70014" stroke-width=".8" opacity=".6"/><ellipse cx="12.5" cy="12" rx="4.9" ry="8.6" fill="#1e2f3a"/></svg>
<!-- brave active -->
<div class="abs" style="left:785px;top:860px;width:48px;height:40px;background:#4d5d68"></div>
<div class="abs" style="left:785px;top:897.6px;width:48px;height:2.4px;background:#76b9ed"></div>
<svg style="left:798.5px;top:867.6px" width="21" height="25" viewBox="0 0 21 25"><defs><linearGradient id="cbv" x1="0" y1="0" x2="1" y2="0"><stop offset="0" stop-color="#ff5a00"/><stop offset=".5" stop-color="#ff4500"/><stop offset="1" stop-color="#ff1f00"/></linearGradient></defs><path d="M5.6 .3 H15.3 L17.1 2.4 L19.3 2.8 L20.6 5.2 L20 7 L20.4 8.8 L17.6 19 L14.9 21.7 L10.4 24.4 L6 21.7 L3.3 19 L.4 8.8 L.9 7 L.3 5.2 L1.6 2.8 L3.8 2.4Z" fill="url(#cbv)"/><path d="M4.2 4.6 L10.4 4 L16.7 4.6 L18.4 7.9 L15.8 11.9 L15.3 14.6 L13.1 16.4 L10.4 19.5 L7.8 16.4 L5.6 14.6 L5.1 11.9 L2.4 7.9Z" fill="#fff"/><path d="M5.4 6.4 L8.8 7 L8.4 8 L6 7.4Z M15.4 6.4 L12 7 L12.4 8 L14.8 7.4Z M8.4 11 L10.4 12.4 L12.4 11 L11.4 10.6 H9.4Z M7.4 15.6 L10.4 14.2 L13.4 15.6 L10.4 14.9Z" fill="#ff5a1a"/><path d="M7 15.8 L10.4 14.6 L13.8 15.8 L13.2 16.4 L10.4 15.4 L7.6 16.4Z" fill="#ff4a10"/></svg>
<!-- weather -->
<svg style="left:947px;top:871px" width="22" height="17" viewBox="0 0 22 17"><circle cx="6.2" cy="5.6" r="5" fill="#f5b32d"/><path d="M5.4 16 Q.8 16 .8 11.6 Q.8 8 4.4 7.6 Q5.4 2.6 10.6 2.8 Q15 3 16 7 Q21.2 7 21.2 11.6 Q21.2 16 16.6 16Z" fill="#d6e9f8"/><path d="M5.4 16 Q.8 16 .8 11.6 Q1.6 14 5.4 14 H16.6 Q20.4 13.8 21.2 11.6 Q21.2 16 16.6 16Z" fill="#9fc4e8"/><path d="M5 9 Q6 4.4 10.4 4.2 Q8 6 8 9Z" fill="#f4fafe"/></svg>
<div class="t tb" style="left:978.2px;top:873px;letter-spacing:-1.25px">30°C</div>
<div class="t tb" style="left:1016px;top:873px;letter-spacing:-.42px">Mostly cloudy</div>
<!-- tray -->
<svg style="left:1118px;top:876px" width="14" height="9" viewBox="0 0 14 9"><path d="M.8 7.8 L6.8 1.4 L12.8 7.8" stroke="#fff" stroke-width="1.3" fill="none"/></svg>
<svg style="left:1141px;top:872px" width="16" height="16" viewBox="0 0 16 16"><circle cx="8" cy="8.2" r="6.4" fill="none" stroke="#fff" stroke-width="1.3"/><circle cx="8" cy="8.2" r="3.2" fill="#fff"/></svg>
<svg style="left:1167px;top:872px" width="13" height="17" viewBox="0 0 13 17"><path d="M2 2 Q5 .2 8 2 M2 15 Q5 16.8 8 15" stroke="#fff" stroke-width="1.1" fill="none"/><rect x=".8" y="4.4" width="8.4" height="8.2" rx="2" fill="none" stroke="#fff" stroke-width="1.2"/><path d="M9.4 7.4 L12.2 5.6 V11.4 L9.4 9.6" fill="none" stroke="#fff" stroke-width="1.1"/></svg>
<svg style="left:1188px;top:872px" width="18" height="17" viewBox="0 0 18 17"><path d="M1 1.4 H15.6 V8 M1 1.4 V13.4 H9" fill="none" stroke="#fff" stroke-width="1.3"/><path d="M4.4 10 Q4.4 6 8.4 6 M7 4 L9 6 L7 8 M11.6 5.4 Q11.6 9 8 9.4" stroke="#fff" stroke-width="1.1" fill="none"/><circle cx="13" cy="12.4" r="3.7" fill="#f5901e"/></svg>
<svg style="left:1212px;top:874px" width="18" height="12" viewBox="0 0 18 12"><rect x="4.6" y="2.4" width="11.4" height="8" fill="none" stroke="#fff" stroke-width="1.2"/><rect x="16.4" y="4.6" width="1.4" height="3.6" fill="#fff"/><rect x="6" y="3.8" width="4" height="5.2" fill="#fff"/><path d="M.4 3.4 H3.6 M.4 6 H3.6 M1.2 1 V3.4 M2.8 1 V3.4 M2 6 V9.4 H4.6" stroke="#fff" stroke-width="1.1" fill="none"/></svg>
<svg style="left:1236px;top:873px" width="18" height="14" viewBox="0 0 18 14"><path d="M.8 4.8 H3.6 L7.2 1.2 V12.8 L3.6 9.2 H.8Z" fill="none" stroke="#fff" stroke-width="1.1" stroke-linejoin="round"/><path d="M9.6 4.6 Q11.2 7 9.6 9.4 M12 3 Q14.6 7 12 11 M14.4 1.4 Q18 7 14.4 12.6" stroke="#fff" stroke-width="1.1" fill="none"/></svg>
<svg style="left:1263px;top:874px" width="14" height="13" viewBox="0 0 14 13"><path d="M1 12 A11.4 11.4 0 0 1 12.6 .8" stroke="#fff" stroke-width="1.1" fill="none" opacity=".95"/><path d="M4.4 12.2 A8 8 0 0 1 12.6 4.2" stroke="#fff" stroke-width="1.1" fill="none"/><path d="M7.8 12.4 A4.6 4.6 0 0 1 12.6 7.6" stroke="#fff" stroke-width="1.1" fill="none"/><circle cx="11.6" cy="11.4" r="1.4" fill="#fff"/></svg>
<div class="t tbs" style="left:1287px;top:874px;letter-spacing:-1.3px">ENG</div>
<div class="t tbs" style="left:1338.6px;top:865px;letter-spacing:-.8px">12:10</div>
<div class="t tbs" style="left:1323.3px;top:883px;letter-spacing:-.36px">20-06-2022</div>
<svg style="left:1399px;top:872px" width="17" height="14" viewBox="0 0 17 14"><path d="M.6 .6 H16.2 V10.6 H12 V13.4 L9 10.6 H.6Z" fill="#fff"/><path d="M3 3.4 H13.6 M3 5.8 H13.6 M3 8.2 H10" stroke="#17243e" stroke-width="1.1"/></svg>
<div class="abs" style="left:1406.4px;top:879.2px;width:16.4px;height:16.4px;border-radius:8.2px;background:#2d2d35;border:1px solid #8e929c"></div>
<div class="t" style="left:1411.2px;top:881.6px;font-size:12px;font-weight:bold;color:#fff">2</div>
<div class="abs" style="left:1435px;top:860px;width:1px;height:40px;background:#55606e"></div>

<div class="t" style="left:1143px;top:777px;font-size:19.5px;color:#8a8a8a">Activate Windows</div>
<div class="t" style="left:1143px;top:802px;font-size:15px;color:#8a8a8a">Go to Settings to activate Windows.</div>
</div>
</div>
<div class="abs" style="left:1033px;top:603px;width:402px;height:252px;border:1px solid rgba(85,85,85,.66);box-shadow:inset 0 0 0 1px rgba(255,255,255,.7)"></div>
<!-- windows activation watermark -->
<div class="t" style="left:1142.3px;top:776.9px;font-size:20px;color:rgba(60,60,60,.31);letter-spacing:.05px">Activate Windows</div>
<div class="t" style="left:1142.6px;top:802px;font-size:15.4px;color:rgba(60,60,60,.35);letter-spacing:-.17px">Go to Settings to activate Windows.</div>
<!-- scroll-arrow-top --><svg style="left:1425px;top:846px" width="13" height="8" viewBox="0 0 13 8"><path d="M.6 1 H12.2 L6.4 7.4Z" fill="#1a1a1a"/></svg>
</div>
</body>
</html>
